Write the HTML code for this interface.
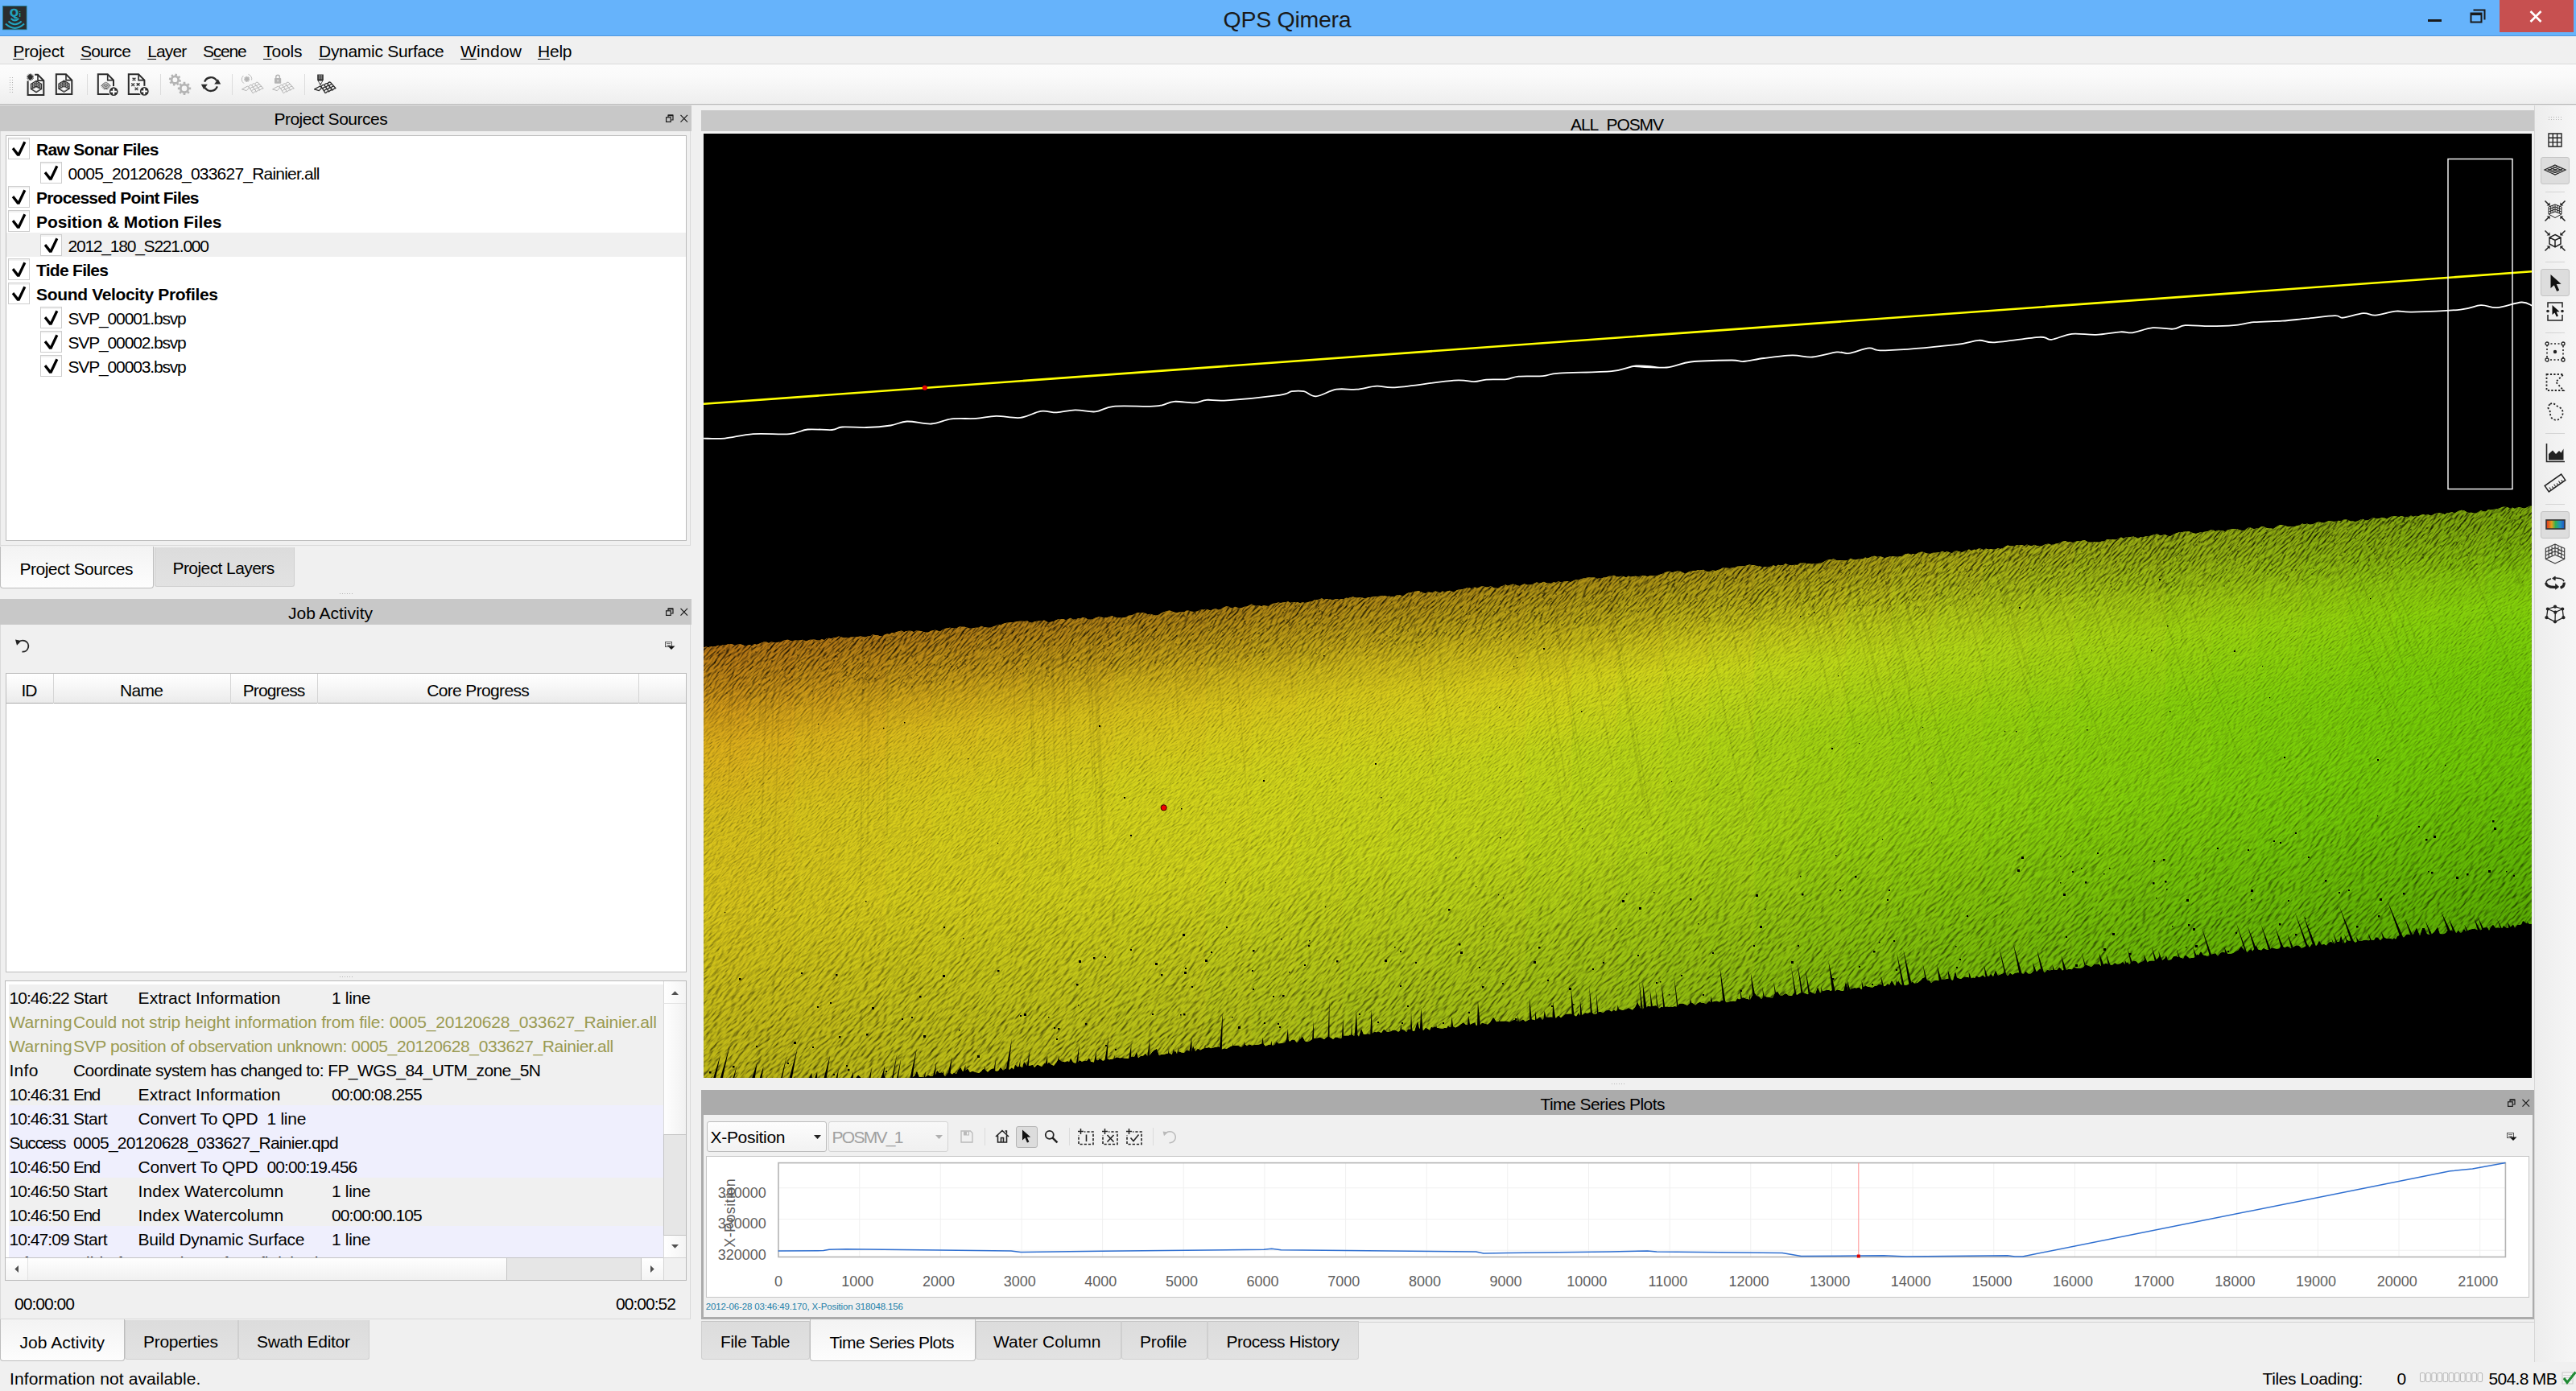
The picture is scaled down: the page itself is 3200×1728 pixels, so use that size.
<!DOCTYPE html>
<html><head><meta charset="utf-8"><title>QPS Qimera</title>
<style>
html,body{margin:0;padding:0;}
body{width:3200px;height:1728px;overflow:hidden;background:#f0f0f0;position:relative;font-family:"Liberation Sans",sans-serif;color:#000;}
.t{position:absolute;white-space:nowrap;}
.r{position:absolute;box-sizing:border-box;}
svg{position:absolute;overflow:visible;}
u{text-decoration:underline;text-decoration-thickness:1.2px;text-underline-offset:2.2px;}
</style></head><body>
<div class="r" style="left:0px;top:0px;width:3200px;height:45px;background:#66b3fb;"></div>
<svg style="left:2.7px;top:6.8px" width="30.5" height="30.2" viewBox="0 0 30.5 30.2">
<rect x="0.4" y="0.4" width="29.7" height="29.4" fill="#2b2d2e" stroke="#1f7f96" stroke-width="0.8"/>
<text x="9.2" y="13.4" font-family="Liberation Sans, sans-serif" font-size="13.5" font-weight="bold" fill="#22a4c0" stroke="#22a4c0" stroke-width="0.7">Q</text>
<text x="20.6" y="13.6" font-family="Liberation Sans, sans-serif" font-size="9" font-weight="bold" fill="#22a4c0">i</text>
<path d="M10.6 16 Q15.4 20.8 20.3 16" fill="none" stroke="#22a4c0" stroke-width="2"/>
<path d="M7.5 19.5 Q15.6 27 23.7 19.5" fill="none" stroke="#22a4c0" stroke-width="2"/>
<path d="M3.9 22.6 Q15.5 33.4 27.1 22.6" fill="none" stroke="#22a4c0" stroke-width="2"/>
</svg>
<div class="r" style="left:0px;top:44px;width:3200px;height:1px;background:#4f97df;"></div>
<div class="t" style="left:1519.60px;top:10.37px;font-size:28.5px;line-height:28.5px;letter-spacing:-0.271px;color:#1a1a1a;">QPS Qimera</div>
<div class="r" style="left:3016px;top:24px;width:17px;height:3px;background:#1a1a1a;"></div>
<svg style="left:3068px;top:11px" width="20" height="18" viewBox="0 0 20 18">
<path d="M4.5 1.5 H18.5 V13.5" fill="none" stroke="#1a1a1a" stroke-width="2"/>
<rect x="1.5" y="5.5" width="13" height="11" fill="none" stroke="#1a1a1a" stroke-width="2"/>
<rect x="1" y="5" width="14" height="3" fill="#1a1a1a"/>
</svg>
<div class="r" style="left:3105px;top:0px;width:92px;height:40px;background:#c75050;"></div>
<svg style="left:3142px;top:13px" width="16" height="15" viewBox="0 0 16 15">
<path d="M1.5 1 L14.5 14 M14.5 1 L1.5 14" stroke="#fff" stroke-width="2.6" fill="none"/></svg>
<div class="r" style="left:0px;top:45px;width:3200px;height:34px;background:#f0f0f0;"></div>
<div class="r" style="left:0px;top:79px;width:3200px;height:1px;background:#dadada;"></div>
<div class="t" style="left:16.20px;top:53.22px;font-size:21px;line-height:21px;letter-spacing:-0.293px;"><u>P</u>roject</div>
<div class="t" style="left:100.00px;top:53.22px;font-size:21px;line-height:21px;letter-spacing:-0.748px;"><u>S</u>ource</div>
<div class="t" style="left:183.30px;top:53.22px;font-size:21px;line-height:21px;letter-spacing:-0.908px;"><u>L</u>ayer</div>
<div class="t" style="left:252.00px;top:53.22px;font-size:21px;line-height:21px;letter-spacing:-1.237px;">S<u>c</u>ene</div>
<div class="t" style="left:327.00px;top:53.22px;font-size:21px;line-height:21px;letter-spacing:-0.106px;"><u>T</u>ools</div>
<div class="t" style="left:396.00px;top:53.22px;font-size:21px;line-height:21px;letter-spacing:-0.292px;"><u>D</u>ynamic Surface</div>
<div class="t" style="left:572.00px;top:53.22px;font-size:21px;line-height:21px;letter-spacing:0.262px;"><u>W</u>indow</div>
<div class="t" style="left:668.00px;top:53.22px;font-size:21px;line-height:21px;letter-spacing:-0.230px;"><u>H</u>elp</div>
<div class="r" style="left:0px;top:80px;width:3200px;height:49px;background:linear-gradient(#fcfcfc,#fafafa 30%,#eeeeee);"></div>
<div class="r" style="left:0px;top:129px;width:3200px;height:1px;background:#b8b8b8;"></div>
<div class="r" style="left:0px;top:130px;width:3200px;height:1px;background:#e4e4e4;"></div>
<svg style="left:12px;top:96px" width="5" height="20"><rect x="0" y="0" width="1" height="1" fill="#b0b0b0"/><rect x="3" y="0" width="1" height="1" fill="#b0b0b0"/><rect x="0" y="3" width="1" height="1" fill="#b0b0b0"/><rect x="3" y="3" width="1" height="1" fill="#b0b0b0"/><rect x="0" y="6" width="1" height="1" fill="#b0b0b0"/><rect x="3" y="6" width="1" height="1" fill="#b0b0b0"/><rect x="0" y="9" width="1" height="1" fill="#b0b0b0"/><rect x="3" y="9" width="1" height="1" fill="#b0b0b0"/><rect x="0" y="12" width="1" height="1" fill="#b0b0b0"/><rect x="3" y="12" width="1" height="1" fill="#b0b0b0"/><rect x="0" y="15" width="1" height="1" fill="#b0b0b0"/><rect x="3" y="15" width="1" height="1" fill="#b0b0b0"/><rect x="0" y="18" width="1" height="1" fill="#b0b0b0"/><rect x="3" y="18" width="1" height="1" fill="#b0b0b0"/></svg>
<div class="r" style="left:108px;top:92px;width:1px;height:26px;background:#dcdcdc;"></div>
<div class="r" style="left:198.5px;top:92px;width:1px;height:26px;background:#dcdcdc;"></div>
<div class="r" style="left:288px;top:92px;width:1px;height:26px;background:#dcdcdc;"></div>
<div class="r" style="left:378px;top:92px;width:1px;height:26px;background:#dcdcdc;"></div>
<svg style="left:0;top:80px" width="430" height="50" viewBox="0 80 430 50" fill="none"><path d="M43.1 92.8 H47.0 L54.3 100.1 V118 H34.6 V100.5" stroke="#2b2b2b" stroke-width="2"/><path d="M47.0 92.8 V100.1 H54.3" stroke="#2b2b2b" stroke-width="1.6"/><path d="M33.30 95.80 L41.90 95.80M33.63 94.15 L41.57 97.45M34.56 92.76 L40.64 98.84M35.95 91.83 L39.25 99.77M37.60 91.50 L37.60 100.10M39.25 91.83 L35.95 99.77M40.64 92.76 L34.56 98.84M41.57 94.15 L33.63 97.45" stroke="#2b2b2b" stroke-width="1.0"/><circle cx="37.6" cy="95.8" r="2.6" fill="#2b2b2b"/><path d="M45 100.6 L38.4 104.39999999999999 V110.6 L45 107.1 Z M45 100.6 L51.6 104.39999999999999 V110.6 L45 107.1 Z" stroke="#2b2b2b" stroke-width="1.1"/><path d="M38.4 106.50 L45 102.77 L51.6 106.50M38.4 108.60 L45 104.93 L51.6 108.60M42.80 101.87 V108.27 M47.20 101.87 V108.27M40.60 103.13 V109.43 M49.40 103.13 V109.43" stroke="#2b2b2b" stroke-width="0.9"/><path d="M38.4 110.6 L45 114.8 L51.6 110.6" stroke="#2b2b2b" stroke-width="1.1"/><path d="M39.6 110.89999999999999 L45 108.19999999999999 L50.4 110.89999999999999 L45 113.6 Z" stroke="#2b2b2b" stroke-width="0.6"/><path d="M69.8 92.3 H82.0 L89.3 99.6 V117 H69.8 Z" stroke="#2b2b2b" stroke-width="2"/><path d="M82.0 92.3 V99.6 H89.3" stroke="#2b2b2b" stroke-width="1.6"/><path d="M79.5 100.2 L72.9 104.0 V110.2 L79.5 106.7 Z M79.5 100.2 L86.1 104.0 V110.2 L79.5 106.7 Z" stroke="#2b2b2b" stroke-width="1.1"/><path d="M72.9 106.10 L79.5 102.37 L86.1 106.10M72.9 108.20 L79.5 104.53 L86.1 108.20M77.30 101.47 V107.87 M81.70 101.47 V107.87M75.10 102.73 V109.03 M83.90 102.73 V109.03" stroke="#2b2b2b" stroke-width="0.9"/><path d="M72.9 110.2 L79.5 114.4 L86.1 110.2" stroke="#2b2b2b" stroke-width="1.1"/><path d="M74.10000000000001 110.5 L79.5 107.8 L84.89999999999999 110.5 L79.5 113.2 Z" stroke="#2b2b2b" stroke-width="0.6"/><path d="M121.8 92.3 H133.7 L141 99.6 V117 H121.8 Z" stroke="#2b2b2b" stroke-width="2"/><path d="M133.7 92.3 V99.6 H141" stroke="#2b2b2b" stroke-width="1.6"/><path d="M125.8 107.2 Q131.5 101.2 137.2 107.2 M126.6 108.4 Q131.5 103.6 136.4 108.4 M127.6 109.4 Q131.5 105.8 135.4 109.4 M128.6 110.3 Q131.5 107.8 134.4 110.3 M129.6 111 Q131.5 109.6 133.4 111" stroke="#444" stroke-width="0.9"/><path d="M125.6 107 Q128 103 131.5 102.2 Q135 103 137.4 107" stroke="#555" stroke-width="0.8"/><circle cx="141.2" cy="113.7" r="6" fill="#2b2b2b" stroke="#f6f6f6" stroke-width="1.2"/><path d="M141.2 109.9 V117.5 M137.39999999999998 113.7 H145.0" stroke="#fff" stroke-width="2"/><path d="M159.8 92.3 H172.1 L179.4 99.6 V117 H159.8 Z" stroke="#2b2b2b" stroke-width="2"/><path d="M172.1 92.3 V99.6 H179.4" stroke="#2b2b2b" stroke-width="1.6"/><path d="M164.6 96.7 L168.4 100.10000000000001 M168.4 96.7 L164.6 100.10000000000001M163.29999999999998 103.6 L167.1 107.0 M167.1 103.6 L163.29999999999998 107.0M169.7 103.2 L173.5 106.60000000000001 M173.5 103.2 L169.7 106.60000000000001M167.6 108.7 L171.4 112.10000000000001 M171.4 108.7 L167.6 112.10000000000001" stroke="#2b2b2b" stroke-width="1.4"/><circle cx="179.3" cy="113.4" r="6" fill="#2b2b2b" stroke="#f6f6f6" stroke-width="1.2"/><path d="M179.3 109.60000000000001 V117.2 M175.5 113.4 H183.10000000000002" stroke="#fff" stroke-width="2"/><path d="M223.02 99.03 L224.99 99.50 L224.51 101.88 L222.51 101.54 L221.49 103.06 L222.55 104.78 L220.54 106.12 L219.36 104.47 L217.57 104.82 L217.10 106.79 L214.72 106.31 L215.06 104.31 L213.54 103.29 L211.82 104.35 L210.48 102.34 L212.13 101.16 L211.78 99.37 L209.81 98.90 L210.29 96.52 L212.29 96.86 L213.31 95.34 L212.25 93.62 L214.26 92.28 L215.44 93.93 L217.23 93.58 L217.70 91.61 L220.08 92.09 L219.74 94.09 L221.26 95.11 L222.98 94.05 L224.32 96.06 L222.67 97.24Z M220.3 99.2 A2.9 2.9 0 1 0 214.5 99.2 A2.9 2.9 0 1 0 220.3 99.2Z" fill="#b4b4b4" fill-rule="evenodd"/><path d="M234.98 108.50 L237.19 108.58 L237.19 111.22 L234.98 111.30 L234.22 113.14 L235.73 114.76 L233.86 116.63 L232.24 115.12 L230.40 115.88 L230.32 118.09 L227.68 118.09 L227.60 115.88 L225.76 115.12 L224.14 116.63 L222.27 114.76 L223.78 113.14 L223.02 111.30 L220.81 111.22 L220.81 108.58 L223.02 108.50 L223.78 106.66 L222.27 105.04 L224.14 103.17 L225.76 104.68 L227.60 103.92 L227.68 101.71 L230.32 101.71 L230.40 103.92 L232.24 104.68 L233.86 103.17 L235.73 105.04 L234.22 106.66Z M232.3 109.9 A3.3 3.3 0 1 0 225.7 109.9 A3.3 3.3 0 1 0 232.3 109.9Z" fill="#b4b4b4" fill-rule="evenodd"/><path d="M254.11 101.73 A8.4 8.4 0 0 1 269.27 100.40" stroke="#2b2b2b" stroke-width="2.3"/><path d="M269.89 107.47 A8.4 8.4 0 0 1 254.73 108.80" stroke="#2b2b2b" stroke-width="2.3"/><path d="M266.2 104.4 H274.2 L270.8 98.2 Z" fill="#2b2b2b"/><path d="M257.8 104.8 H249.8 L253.2 111 Z" fill="#2b2b2b"/><path d="M308.8 107.3 Q311.1 104.5 312.7 105.7 Q314.9 102.8 316.6 104.0 Q318.9 101.2 320.5 102.4M310.6 110.2 Q312.9 107.3 314.6 108.4 Q317.0 105.6 318.7 106.7 Q321.0 103.8 322.7 104.9M312.4 113.0 Q314.8 110.1 316.6 111.2 Q319.0 108.2 320.8 109.3 Q323.2 106.4 325.0 107.5M314.2 115.9 Q316.7 112.9 318.5 113.9 Q321.0 111.0 322.9 112.0 Q325.3 109.0 327.2 110.0 M308.8 107.3 L314.2 115.9 M312.7 105.7 L318.5 113.9 M316.6 104.0 L322.9 112.0 M320.5 102.4 L327.2 110.0 M300.5 110.9 L307.6 107.0 L309.6 109.0 L306.2 112.6 Z" stroke="#b4b4b4" stroke-width="1.0" stroke-linejoin="round"/><path d="M303.10 98.30 L310.30 98.30M303.58 96.50 L309.82 100.10M304.90 95.18 L308.50 101.42M306.70 94.70 L306.70 101.90M308.50 95.18 L304.90 101.42M309.82 96.50 L303.58 100.10" stroke="#b4b4b4" stroke-width="1.1"/><path d="M303 103.6 A6 6 0 0 1 302.4 94 M308.5 92.4 A6 6 0 0 1 312.6 99.5" stroke="#b4b4b4" stroke-width="0.9"/><path d="M346.9 107.3 Q349.2 104.5 350.8 105.7 Q353.1 102.8 354.7 104.0 Q357.0 101.2 358.6 102.4M348.7 110.2 Q351.0 107.3 352.7 108.4 Q355.1 105.6 356.8 106.7 Q359.1 103.8 360.8 104.9M350.5 113.0 Q352.9 110.1 354.7 111.2 Q357.1 108.2 358.9 109.3 Q361.3 106.4 363.1 107.5M352.3 115.9 Q354.8 112.9 356.6 113.9 Q359.1 111.0 361.0 112.0 Q363.4 109.0 365.3 110.0 M346.9 107.3 L352.3 115.9 M350.8 105.7 L356.6 113.9 M354.7 104.0 L361.0 112.0 M358.6 102.4 L365.3 110.0 M338.6 110.9 L345.7 107.0 L347.7 109.0 L344.3 112.6 Z" stroke="#b4b4b4" stroke-width="1.0" stroke-linejoin="round"/><rect x="341" y="97" width="8.2" height="6.8" rx="0.8" fill="#b4b4b4"/><path d="M342.8 97 V95.6 A2.3 2.3 0 0 1 347.4 95.6 V97" stroke="#b4b4b4" stroke-width="1.4"/><rect x="344.5" y="99" width="1.2" height="2.4" fill="#e8e8e8"/><path d="M398.9 107.3 Q401.2 104.5 402.8 105.7 Q405.1 102.8 406.7 104.0 Q409.0 101.2 410.6 102.4M400.7 110.2 Q403.0 107.3 404.7 108.4 Q407.1 105.6 408.8 106.7 Q411.1 103.8 412.8 104.9M402.5 113.0 Q404.9 110.1 406.7 111.2 Q409.1 108.2 410.9 109.3 Q413.3 106.4 415.1 107.5M404.3 115.9 Q406.8 112.9 408.6 113.9 Q411.1 111.0 413.0 112.0 Q415.4 109.0 417.3 110.0 M398.9 107.3 L404.3 115.9 M402.8 105.7 L408.6 113.9 M406.7 104.0 L413.0 112.0 M410.6 102.4 L417.3 110.0 M390.6 110.9 L397.7 107.0 L399.7 109.0 L396.3 112.6 Z" stroke="#2b2b2b" stroke-width="1.3" stroke-linejoin="round"/><path d="M394.2 92.6 H401.8 V99.2 L398 106.6 L394.2 99.2 Z" fill="#2b2b2b"/><path d="M396.3 93 V98.5 M398 93 V98.5 M399.7 93 V98.5" stroke="#bbb" stroke-width="0.7"/><path d="M395.6 100.6 L398 105 L400.4 100.6 Z" fill="#f4f4f4"/><path d="M397.2 103.6 L398 105.4 L398.8 103.6 Z" fill="#2b2b2b"/></svg>
<div class="r" style="left:0px;top:131px;width:858.7px;height:31.6px;background:#c8c8c8;"></div>
<div class="t" style="left:340.40px;top:137.22px;font-size:21px;line-height:21px;letter-spacing:-0.495px;">Project Sources</div>
<svg style="left:826.7px;top:142.0px" width="28" height="11" viewBox="0 0 28 11">
<path d="M3 3.5 V1 H9 V7 H6.5" fill="none" stroke="#1a1a1a" stroke-width="1.2"/>
<rect x="0.6" y="3.8" width="5.6" height="5.6" fill="none" stroke="#1a1a1a" stroke-width="1.2"/>
<path d="M3 1.4 H9" stroke="#1a1a1a" stroke-width="1.8"/>
<path d="M18.5 0.8 L27 9.6 M27 0.8 L18.5 9.6" stroke="#1a1a1a" stroke-width="1.2" fill="none"/>
</svg>
<div class="r" style="left:0px;top:163px;width:858px;height:515px;border:1px solid #d9d9d9;border-top:none;"></div>
<div class="r" style="left:7px;top:168px;width:846px;height:504px;background:#fff;border:1px solid #bcbcbc;"></div>
<div class="r" style="left:8px;top:289px;width:844px;height:30px;background:#f0f0f0;"></div>
<svg style="left:10px;top:170.5px" width="27" height="27" viewBox="0 0 27 27">
<rect x="0.5" y="0.5" width="26" height="26" fill="#fff" stroke="#cdcdcd"/>
<rect x="1" y="1" width="25" height="2" fill="#f1f1f1"/>
<path d="M4.78 14.34 L7.2 11.92 L12.58 18.87 L19.37 4.38 L22.29 6.04 L14.34 22.79 L11.32 22.79 Z" fill="#000"/>
</svg>
<div class="t" style="left:45.00px;top:174.72px;font-size:21px;line-height:21px;letter-spacing:-0.694px;font-weight:bold;">Raw Sonar Files</div>
<svg style="left:49.8px;top:200.5px" width="27" height="27" viewBox="0 0 27 27">
<rect x="0.5" y="0.5" width="26" height="26" fill="#fff" stroke="#cdcdcd"/>
<rect x="1" y="1" width="25" height="2" fill="#f1f1f1"/>
<path d="M4.78 14.34 L7.2 11.92 L12.58 18.87 L19.37 4.38 L22.29 6.04 L14.34 22.79 L11.32 22.79 Z" fill="#000"/>
</svg>
<div class="t" style="left:84.50px;top:204.72px;font-size:21px;line-height:21px;letter-spacing:-0.790px;">0005_20120628_033627_Rainier.all</div>
<svg style="left:10px;top:230.5px" width="27" height="27" viewBox="0 0 27 27">
<rect x="0.5" y="0.5" width="26" height="26" fill="#fff" stroke="#cdcdcd"/>
<rect x="1" y="1" width="25" height="2" fill="#f1f1f1"/>
<path d="M4.78 14.34 L7.2 11.92 L12.58 18.87 L19.37 4.38 L22.29 6.04 L14.34 22.79 L11.32 22.79 Z" fill="#000"/>
</svg>
<div class="t" style="left:45.00px;top:234.72px;font-size:21px;line-height:21px;letter-spacing:-0.787px;font-weight:bold;">Processed Point Files</div>
<svg style="left:10px;top:260.5px" width="27" height="27" viewBox="0 0 27 27">
<rect x="0.5" y="0.5" width="26" height="26" fill="#fff" stroke="#cdcdcd"/>
<rect x="1" y="1" width="25" height="2" fill="#f1f1f1"/>
<path d="M4.78 14.34 L7.2 11.92 L12.58 18.87 L19.37 4.38 L22.29 6.04 L14.34 22.79 L11.32 22.79 Z" fill="#000"/>
</svg>
<div class="t" style="left:45.00px;top:264.72px;font-size:21px;line-height:21px;letter-spacing:-0.076px;font-weight:bold;">Position &amp; Motion Files</div>
<svg style="left:49.8px;top:290.5px" width="27" height="27" viewBox="0 0 27 27">
<rect x="0.5" y="0.5" width="26" height="26" fill="#fff" stroke="#cdcdcd"/>
<rect x="1" y="1" width="25" height="2" fill="#f1f1f1"/>
<path d="M4.78 14.34 L7.2 11.92 L12.58 18.87 L19.37 4.38 L22.29 6.04 L14.34 22.79 L11.32 22.79 Z" fill="#000"/>
</svg>
<div class="t" style="left:84.50px;top:294.72px;font-size:21px;line-height:21px;letter-spacing:-1.221px;">2012_180_S221.000</div>
<svg style="left:10px;top:320.5px" width="27" height="27" viewBox="0 0 27 27">
<rect x="0.5" y="0.5" width="26" height="26" fill="#fff" stroke="#cdcdcd"/>
<rect x="1" y="1" width="25" height="2" fill="#f1f1f1"/>
<path d="M4.78 14.34 L7.2 11.92 L12.58 18.87 L19.37 4.38 L22.29 6.04 L14.34 22.79 L11.32 22.79 Z" fill="#000"/>
</svg>
<div class="t" style="left:45.00px;top:324.72px;font-size:21px;line-height:21px;letter-spacing:-0.720px;font-weight:bold;">Tide Files</div>
<svg style="left:10px;top:350.5px" width="27" height="27" viewBox="0 0 27 27">
<rect x="0.5" y="0.5" width="26" height="26" fill="#fff" stroke="#cdcdcd"/>
<rect x="1" y="1" width="25" height="2" fill="#f1f1f1"/>
<path d="M4.78 14.34 L7.2 11.92 L12.58 18.87 L19.37 4.38 L22.29 6.04 L14.34 22.79 L11.32 22.79 Z" fill="#000"/>
</svg>
<div class="t" style="left:45.00px;top:354.72px;font-size:21px;line-height:21px;letter-spacing:-0.336px;font-weight:bold;">Sound Velocity Profiles</div>
<svg style="left:49.8px;top:380.5px" width="27" height="27" viewBox="0 0 27 27">
<rect x="0.5" y="0.5" width="26" height="26" fill="#fff" stroke="#cdcdcd"/>
<rect x="1" y="1" width="25" height="2" fill="#f1f1f1"/>
<path d="M4.78 14.34 L7.2 11.92 L12.58 18.87 L19.37 4.38 L22.29 6.04 L14.34 22.79 L11.32 22.79 Z" fill="#000"/>
</svg>
<div class="t" style="left:84.50px;top:384.72px;font-size:21px;line-height:21px;letter-spacing:-1.153px;">SVP_00001.bsvp</div>
<svg style="left:49.8px;top:410.5px" width="27" height="27" viewBox="0 0 27 27">
<rect x="0.5" y="0.5" width="26" height="26" fill="#fff" stroke="#cdcdcd"/>
<rect x="1" y="1" width="25" height="2" fill="#f1f1f1"/>
<path d="M4.78 14.34 L7.2 11.92 L12.58 18.87 L19.37 4.38 L22.29 6.04 L14.34 22.79 L11.32 22.79 Z" fill="#000"/>
</svg>
<div class="t" style="left:84.50px;top:414.72px;font-size:21px;line-height:21px;letter-spacing:-1.153px;">SVP_00002.bsvp</div>
<svg style="left:49.8px;top:440.5px" width="27" height="27" viewBox="0 0 27 27">
<rect x="0.5" y="0.5" width="26" height="26" fill="#fff" stroke="#cdcdcd"/>
<rect x="1" y="1" width="25" height="2" fill="#f1f1f1"/>
<path d="M4.78 14.34 L7.2 11.92 L12.58 18.87 L19.37 4.38 L22.29 6.04 L14.34 22.79 L11.32 22.79 Z" fill="#000"/>
</svg>
<div class="t" style="left:84.50px;top:444.72px;font-size:21px;line-height:21px;letter-spacing:-1.153px;">SVP_00003.bsvp</div>
<div class="r" style="left:191.5px;top:680px;width:174px;height:48.5px;background:linear-gradient(#dcdcdc,#e2e2e2);border:1px solid #cfcfcf;border-top:none;border-radius:0 0 3px 3px;"></div>
<div class="r" style="left:0px;top:678.5px;width:191.3px;height:52px;background:linear-gradient(#f3f3f3,#fdfdfd);border:1px solid #bdbdbd;border-top:none;border-radius:0 0 4px 4px;"></div>
<div class="t" style="left:24.50px;top:695.97px;font-size:21px;line-height:21px;letter-spacing:-0.517px;">Project Sources</div>
<div class="t" style="left:214.50px;top:694.72px;font-size:21px;line-height:21px;letter-spacing:-0.575px;">Project Layers</div>
<svg style="left:422px;top:737px" width="17" height="1"><rect x="0" y="0" width="1" height="1" fill="#b5b5b5"/><rect x="3" y="0" width="1" height="1" fill="#b5b5b5"/><rect x="6" y="0" width="1" height="1" fill="#b5b5b5"/><rect x="9" y="0" width="1" height="1" fill="#b5b5b5"/><rect x="12" y="0" width="1" height="1" fill="#b5b5b5"/><rect x="15" y="0" width="1" height="1" fill="#b5b5b5"/></svg>
<div class="r" style="left:0px;top:744px;width:858.7px;height:31.6px;background:#c8c8c8;"></div>
<div class="t" style="left:358.00px;top:750.97px;font-size:21px;line-height:21px;letter-spacing:-0.004px;">Job Activity</div>
<svg style="left:826.7px;top:754.9px" width="28" height="11" viewBox="0 0 28 11">
<path d="M3 3.5 V1 H9 V7 H6.5" fill="none" stroke="#1a1a1a" stroke-width="1.2"/>
<rect x="0.6" y="3.8" width="5.6" height="5.6" fill="none" stroke="#1a1a1a" stroke-width="1.2"/>
<path d="M3 1.4 H9" stroke="#1a1a1a" stroke-width="1.8"/>
<path d="M18.5 0.8 L27 9.6 M27 0.8 L18.5 9.6" stroke="#1a1a1a" stroke-width="1.2" fill="none"/>
</svg>
<div class="r" style="left:0px;top:775.5px;width:858px;height:863.5px;border:1px solid #d9d9d9;border-top:none;"></div>
<svg style="left:19px;top:793px" width="19" height="18" viewBox="0 0 19 18">
<path d="M3.2 6.2 A7 7 0 1 1 8.5 16.6" fill="none" stroke="#222" stroke-width="1.8"/>
<path d="M0 1.6 L7.2 3 L2 8.8 Z" fill="#222"/></svg>
<svg style="left:826px;top:797px" width="13" height="10" viewBox="0 0 13 10">
<rect x="0.5" y="0.5" width="8" height="6" fill="#f0f0f0" stroke="#555" stroke-width="1"/>
<path d="M2 2.5 H7 M2 4.5 H7" stroke="#555" stroke-width="0.8"/>
<path d="M3.5 5.5 H12.5 L8 10 Z" fill="#111"/></svg>
<div class="r" style="left:6.5px;top:836px;width:846px;height:372px;background:#fff;border:1px solid #bcbcbc;"></div>
<div class="r" style="left:7.5px;top:837px;width:844px;height:37.2px;background:linear-gradient(#ffffff,#f7f7f7 45%,#ebebeb);border-bottom:1px solid #ababab;"></div>
<div class="r" style="left:65.5px;top:837px;width:1px;height:36.5px;background:#d5d5d5;"></div>
<div class="r" style="left:286.25px;top:837px;width:1px;height:36.5px;background:#d5d5d5;"></div>
<div class="r" style="left:394.25px;top:837px;width:1px;height:36.5px;background:#d5d5d5;"></div>
<div class="r" style="left:792.6px;top:837px;width:1px;height:36.5px;background:#d5d5d5;"></div>
<div class="t" style="left:26.50px;top:846.72px;font-size:21px;line-height:21px;letter-spacing:-1.000px;">ID</div>
<div class="t" style="left:149.00px;top:846.72px;font-size:21px;line-height:21px;letter-spacing:-0.673px;">Name</div>
<div class="t" style="left:301.75px;top:846.72px;font-size:21px;line-height:21px;letter-spacing:-0.933px;">Progress</div>
<div class="t" style="left:530.20px;top:846.72px;font-size:21px;line-height:21px;letter-spacing:-0.649px;">Core Progress</div>
<svg style="left:422px;top:1213px" width="17" height="1"><rect x="0" y="0" width="1" height="1" fill="#b5b5b5"/><rect x="3" y="0" width="1" height="1" fill="#b5b5b5"/><rect x="6" y="0" width="1" height="1" fill="#b5b5b5"/><rect x="9" y="0" width="1" height="1" fill="#b5b5b5"/><rect x="12" y="0" width="1" height="1" fill="#b5b5b5"/><rect x="15" y="0" width="1" height="1" fill="#b5b5b5"/></svg>
<div class="r" style="left:6px;top:1218px;width:847.3px;height:373.4px;background:#fff;border:1px solid #b9b9b9;"></div>
<div class="r" style="left:7px;top:1219px;width:817.5px;height:343.5px;overflow:hidden;">
<div class="r" style="left:4.4px;top:4px;width:814px;height:30px;background:#f0f0f0"></div>
<div class="r" style="left:4.4px;top:34px;width:814px;height:30px;background:#f0f0f0"></div>
<div class="r" style="left:4.4px;top:64px;width:814px;height:30px;background:#f0f0f0"></div>
<div class="r" style="left:4.4px;top:94px;width:814px;height:30px;background:#f0f0f0"></div>
<div class="r" style="left:4.4px;top:124px;width:814px;height:30px;background:#f0f0f0"></div>
<div class="r" style="left:4.4px;top:154px;width:814px;height:30px;background:#efeffd"></div>
<div class="r" style="left:4.4px;top:184px;width:814px;height:30px;background:#efeffd"></div>
<div class="r" style="left:4.4px;top:214px;width:814px;height:30px;background:#efeffd"></div>
<div class="r" style="left:4.4px;top:244px;width:814px;height:30px;background:#f0f0f0"></div>
<div class="r" style="left:4.4px;top:274px;width:814px;height:30px;background:#f0f0f0"></div>
<div class="r" style="left:4.4px;top:304px;width:814px;height:30px;background:#efeffd"></div>
<div class="r" style="left:4.4px;top:334px;width:814px;height:30px;background:#efeffd"></div>
</div>
<div class="t" style="left:11.40px;top:1228.52px;font-size:21px;line-height:21px;letter-spacing:-0.935px;">10:46:22</div>
<div class="t" style="left:91.00px;top:1228.52px;font-size:21px;line-height:21px;letter-spacing:-0.437px;">Start</div>
<div class="t" style="left:171.60px;top:1228.52px;font-size:21px;line-height:21px;letter-spacing:0.037px;">Extract Information</div>
<div class="t" style="left:412.00px;top:1228.52px;font-size:21px;line-height:21px;letter-spacing:-0.341px;">1 line</div>
<div class="t" style="left:11.40px;top:1258.52px;font-size:21px;line-height:21px;letter-spacing:0.130px;color:#9a9a52;">Warning</div>
<div class="t" style="left:91.00px;top:1258.52px;font-size:21px;line-height:21px;letter-spacing:-0.167px;color:#9a9a52;">Could not strip height information from file: 0005_20120628_033627_Rainier.all</div>
<div class="t" style="left:11.40px;top:1288.52px;font-size:21px;line-height:21px;letter-spacing:0.130px;color:#9a9a52;">Warning</div>
<div class="t" style="left:91.00px;top:1288.52px;font-size:21px;line-height:21px;letter-spacing:-0.373px;color:#9a9a52;">SVP position of observation unknown: 0005_20120628_033627_Rainier.all</div>
<div class="t" style="left:11.40px;top:1318.52px;font-size:21px;line-height:21px;letter-spacing:0.358px;">Info</div>
<div class="t" style="left:91.00px;top:1318.52px;font-size:21px;line-height:21px;letter-spacing:-0.589px;">Coordinate system has changed to: FP_WGS_84_UTM_zone_5N</div>
<div class="t" style="left:11.40px;top:1348.52px;font-size:21px;line-height:21px;letter-spacing:-0.935px;">10:46:31</div>
<div class="t" style="left:91.00px;top:1348.52px;font-size:21px;line-height:21px;letter-spacing:-1.533px;">End</div>
<div class="t" style="left:171.60px;top:1348.52px;font-size:21px;line-height:21px;letter-spacing:0.037px;">Extract Information</div>
<div class="t" style="left:412.00px;top:1348.52px;font-size:21px;line-height:21px;letter-spacing:-0.902px;">00:00:08.255</div>
<div class="t" style="left:11.40px;top:1378.52px;font-size:21px;line-height:21px;letter-spacing:-0.935px;">10:46:31</div>
<div class="t" style="left:91.00px;top:1378.52px;font-size:21px;line-height:21px;letter-spacing:-0.437px;">Start</div>
<div class="t" style="left:171.60px;top:1378.52px;font-size:21px;line-height:21px;letter-spacing:-0.255px;">Convert To QPD</div>
<div class="t" style="left:331.40px;top:1378.52px;font-size:21px;line-height:21px;letter-spacing:-0.241px;">1 line</div>
<div class="t" style="left:11.40px;top:1408.52px;font-size:21px;line-height:21px;letter-spacing:-1.394px;">Success</div>
<div class="t" style="left:91.00px;top:1408.52px;font-size:21px;line-height:21px;letter-spacing:-0.707px;">0005_20120628_033627_Rainier.qpd</div>
<div class="t" style="left:11.40px;top:1438.52px;font-size:21px;line-height:21px;letter-spacing:-0.935px;">10:46:50</div>
<div class="t" style="left:91.00px;top:1438.52px;font-size:21px;line-height:21px;letter-spacing:-1.533px;">End</div>
<div class="t" style="left:171.60px;top:1438.52px;font-size:21px;line-height:21px;letter-spacing:-0.255px;">Convert To QPD</div>
<div class="t" style="left:331.40px;top:1438.52px;font-size:21px;line-height:21px;letter-spacing:-0.893px;">00:00:19.456</div>
<div class="t" style="left:11.40px;top:1468.52px;font-size:21px;line-height:21px;letter-spacing:-0.935px;">10:46:50</div>
<div class="t" style="left:91.00px;top:1468.52px;font-size:21px;line-height:21px;letter-spacing:-0.437px;">Start</div>
<div class="t" style="left:171.60px;top:1468.52px;font-size:21px;line-height:21px;letter-spacing:0.035px;">Index Watercolumn</div>
<div class="t" style="left:412.00px;top:1468.52px;font-size:21px;line-height:21px;letter-spacing:-0.341px;">1 line</div>
<div class="t" style="left:11.40px;top:1498.52px;font-size:21px;line-height:21px;letter-spacing:-0.935px;">10:46:50</div>
<div class="t" style="left:91.00px;top:1498.52px;font-size:21px;line-height:21px;letter-spacing:-1.533px;">End</div>
<div class="t" style="left:171.60px;top:1498.52px;font-size:21px;line-height:21px;letter-spacing:0.035px;">Index Watercolumn</div>
<div class="t" style="left:412.00px;top:1498.52px;font-size:21px;line-height:21px;letter-spacing:-0.902px;">00:00:00.105</div>
<div class="t" style="left:11.40px;top:1528.52px;font-size:21px;line-height:21px;letter-spacing:-0.935px;">10:47:09</div>
<div class="t" style="left:91.00px;top:1528.52px;font-size:21px;line-height:21px;letter-spacing:-0.437px;">Start</div>
<div class="t" style="left:171.60px;top:1528.52px;font-size:21px;line-height:21px;letter-spacing:-0.276px;">Build Dynamic Surface</div>
<div class="t" style="left:412.00px;top:1528.52px;font-size:21px;line-height:21px;letter-spacing:-0.341px;">1 line</div>
<div class="r" style="left:7px;top:1553px;width:817px;height:9.5px;overflow:hidden;">
<div class="t" style="left:4.4px;top:4.7px;font-size:21px;line-height:21px;">Info &nbsp; &nbsp; &nbsp;Build of Dynamic Surface finished</div>
</div>
<div class="r" style="left:824.3px;top:1219px;width:28px;height:343.5px;background:linear-gradient(to right,#fefefe,#f1f1f1);border-left:1px solid #d9d9d9;"></div>
<div class="r" style="left:824.3px;top:1219px;width:28px;height:28px;background:linear-gradient(to right,#ffffff,#f4f4f4);border-left:1px solid #d9d9d9;border-bottom:1px solid #e2e2e2;"></div>
<div class="r" style="left:824.3px;top:1408.5px;width:28px;height:126px;background:#e6e6e6;border:1px solid #c4c4c4;border-right:none;"></div>
<div class="r" style="left:824.3px;top:1534.5px;width:28px;height:28px;background:linear-gradient(to right,#ffffff,#f4f4f4);border-left:1px solid #d9d9d9;"></div>
<svg style="left:833.5px;top:1230.5px" width="9" height="5"><path d="M0 5 L4.5 0.3 L9 5 Z" fill="#505050"/></svg>
<svg style="left:833.5px;top:1546px" width="9" height="5"><path d="M0 0 L4.5 4.7 L9 0 Z" fill="#505050"/></svg>
<div class="r" style="left:7px;top:1562.2px;width:817.5px;height:28px;background:linear-gradient(#fefefe,#f1f1f1);border-top:1px solid #c4c4c4;"></div>
<div class="r" style="left:628.5px;top:1562.2px;width:168px;height:28px;background:#e6e6e6;border:1px solid #c4c4c4;border-bottom:none;"></div>
<div class="r" style="left:796.5px;top:1562.2px;width:28px;height:28px;background:linear-gradient(#ffffff,#f4f4f4);border-top:1px solid #c4c4c4;border-right:1px solid #d4d4d4;"></div>
<div class="r" style="left:7px;top:1562.2px;width:27.5px;height:28px;background:linear-gradient(#ffffff,#f4f4f4);border-top:1px solid #c4c4c4;border-right:1px solid #e2e2e2;"></div>
<svg style="left:17.5px;top:1571.5px" width="5" height="9"><path d="M5 0 L0.3 4.5 L5 9 Z" fill="#505050"/></svg>
<svg style="left:808px;top:1571.5px" width="5" height="9"><path d="M0 0 L4.7 4.5 L0 9 Z" fill="#505050"/></svg>
<div class="r" style="left:824.3px;top:1562.2px;width:28px;height:28px;background:#f0f0f0;border-top:1px solid #d4d4d4;border-left:1px solid #d4d4d4;"></div>
<div class="t" style="left:18.00px;top:1609.22px;font-size:21px;line-height:21px;letter-spacing:-0.964px;">00:00:00</div>
<div class="t" style="left:765.00px;top:1609.22px;font-size:21px;line-height:21px;letter-spacing:-0.964px;">00:00:52</div>
<div class="r" style="left:155px;top:1640px;width:140.5px;height:49px;background:linear-gradient(#dcdcdc,#e2e2e2);border:1px solid #cfcfcf;border-top:none;border-radius:0 0 3px 3px;"></div>
<div class="r" style="left:295.5px;top:1640px;width:163px;height:49px;background:linear-gradient(#dcdcdc,#e2e2e2);border:1px solid #cfcfcf;border-top:none;border-radius:0 0 3px 3px;"></div>
<div class="r" style="left:0px;top:1639px;width:155px;height:52px;background:linear-gradient(#f3f3f3,#fdfdfd);border:1px solid #bdbdbd;border-top:none;border-radius:0 0 4px 4px;"></div>
<div class="t" style="left:24.50px;top:1656.72px;font-size:21px;line-height:21px;letter-spacing:0.042px;">Job Activity</div>
<div class="t" style="left:178.00px;top:1655.72px;font-size:21px;line-height:21px;letter-spacing:-0.302px;">Properties</div>
<div class="t" style="left:319.00px;top:1655.72px;font-size:21px;line-height:21px;letter-spacing:-0.278px;">Swath Editor</div>
<div class="t" style="left:12.00px;top:1702.22px;font-size:21px;line-height:21px;letter-spacing:0.110px;">Information not available.</div>
<div class="r" style="left:871px;top:137px;width:2277px;height:26px;background:#c8c8c8;overflow:hidden;"></div>
<div class="t" style="left:1951.00px;top:143.72px;font-size:21px;line-height:21px;letter-spacing:-1.112px;">ALL_POSMV</div>
<div class="r" style="left:871px;top:163px;width:2277px;height:3px;background:#f4f4f4;"></div>
<svg style="left:874px;top:165.5px;overflow:hidden;background:#000" width="2271" height="1173" viewBox="0 0 2271 1173"><defs><linearGradient id="s0" gradientUnits="userSpaceOnUse" x1="0" y1="637.0" x2="0" y2="1220.0"><stop offset="0.000" stop-color="#b47414"/><stop offset="0.036" stop-color="#bb7f16"/><stop offset="0.073" stop-color="#c28917"/><stop offset="0.109" stop-color="#ca9318"/><stop offset="0.145" stop-color="#d19d1a"/><stop offset="0.200" stop-color="#cfa41a"/><stop offset="0.273" stop-color="#ceab1a"/><stop offset="0.364" stop-color="#cbb51a"/><stop offset="0.455" stop-color="#cbb71a"/><stop offset="0.564" stop-color="#cbba1a"/><stop offset="0.682" stop-color="#c2b518"/><stop offset="0.800" stop-color="#b9b017"/><stop offset="0.909" stop-color="#b1ab16"/><stop offset="1.000" stop-color="#b1ab16"/></linearGradient><linearGradient id="s1" gradientUnits="userSpaceOnUse" x1="0" y1="632.6" x2="0" y2="1215.6"><stop offset="0.000" stop-color="#b37615"/><stop offset="0.036" stop-color="#ba8016"/><stop offset="0.073" stop-color="#c28b17"/><stop offset="0.109" stop-color="#c99518"/><stop offset="0.145" stop-color="#d0a01a"/><stop offset="0.200" stop-color="#cfa61a"/><stop offset="0.273" stop-color="#cdae1a"/><stop offset="0.364" stop-color="#cbb71a"/><stop offset="0.455" stop-color="#cbb91a"/><stop offset="0.564" stop-color="#cabc1a"/><stop offset="0.682" stop-color="#c2b718"/><stop offset="0.800" stop-color="#b9b117"/><stop offset="0.909" stop-color="#b1ac16"/><stop offset="1.000" stop-color="#b1ac16"/></linearGradient><linearGradient id="s2" gradientUnits="userSpaceOnUse" x1="0" y1="628.2" x2="0" y2="1211.2"><stop offset="0.000" stop-color="#b37815"/><stop offset="0.036" stop-color="#ba8216"/><stop offset="0.073" stop-color="#c18d17"/><stop offset="0.109" stop-color="#c99718"/><stop offset="0.145" stop-color="#d0a21a"/><stop offset="0.200" stop-color="#cea91a"/><stop offset="0.273" stop-color="#ccb11a"/><stop offset="0.364" stop-color="#cbba1a"/><stop offset="0.455" stop-color="#cabb1a"/><stop offset="0.564" stop-color="#cabe1a"/><stop offset="0.682" stop-color="#c1b818"/><stop offset="0.800" stop-color="#b9b217"/><stop offset="0.909" stop-color="#b0ad16"/><stop offset="1.000" stop-color="#b0ad16"/></linearGradient><linearGradient id="s3" gradientUnits="userSpaceOnUse" x1="0" y1="623.8" x2="0" y2="1206.8"><stop offset="0.000" stop-color="#b27915"/><stop offset="0.036" stop-color="#b98416"/><stop offset="0.073" stop-color="#c18f17"/><stop offset="0.109" stop-color="#c89a18"/><stop offset="0.145" stop-color="#cfa51a"/><stop offset="0.200" stop-color="#ceab1a"/><stop offset="0.273" stop-color="#ccb31a"/><stop offset="0.364" stop-color="#cabc1a"/><stop offset="0.455" stop-color="#cabe1a"/><stop offset="0.564" stop-color="#cac01a"/><stop offset="0.682" stop-color="#c1ba18"/><stop offset="0.800" stop-color="#b8b417"/><stop offset="0.909" stop-color="#b0ae16"/><stop offset="1.000" stop-color="#b0ae16"/></linearGradient><linearGradient id="s4" gradientUnits="userSpaceOnUse" x1="0" y1="619.4" x2="0" y2="1202.4"><stop offset="0.000" stop-color="#b27b15"/><stop offset="0.036" stop-color="#b98616"/><stop offset="0.073" stop-color="#c09117"/><stop offset="0.109" stop-color="#c79c18"/><stop offset="0.145" stop-color="#cfa71a"/><stop offset="0.200" stop-color="#cdae1a"/><stop offset="0.273" stop-color="#cbb61a"/><stop offset="0.364" stop-color="#cabe1a"/><stop offset="0.455" stop-color="#cac01a"/><stop offset="0.564" stop-color="#c9c21a"/><stop offset="0.682" stop-color="#c0bb18"/><stop offset="0.800" stop-color="#b7b517"/><stop offset="0.909" stop-color="#afaf16"/><stop offset="1.000" stop-color="#afaf16"/></linearGradient><linearGradient id="s5" gradientUnits="userSpaceOnUse" x1="0" y1="615.0" x2="0" y2="1198.0"><stop offset="0.000" stop-color="#b17c15"/><stop offset="0.036" stop-color="#b98816"/><stop offset="0.073" stop-color="#c09317"/><stop offset="0.109" stop-color="#c79e18"/><stop offset="0.145" stop-color="#cea91a"/><stop offset="0.200" stop-color="#ccb01a"/><stop offset="0.273" stop-color="#cbb81a"/><stop offset="0.364" stop-color="#cac11a"/><stop offset="0.455" stop-color="#c9c21a"/><stop offset="0.564" stop-color="#c9c31a"/><stop offset="0.682" stop-color="#c0bd18"/><stop offset="0.800" stop-color="#b7b617"/><stop offset="0.909" stop-color="#afaf16"/><stop offset="1.000" stop-color="#afaf16"/></linearGradient><linearGradient id="s6" gradientUnits="userSpaceOnUse" x1="0" y1="610.6" x2="0" y2="1193.6"><stop offset="0.000" stop-color="#b17d15"/><stop offset="0.036" stop-color="#b88916"/><stop offset="0.073" stop-color="#bf9417"/><stop offset="0.109" stop-color="#c79f18"/><stop offset="0.145" stop-color="#ceab1a"/><stop offset="0.200" stop-color="#ccb21a"/><stop offset="0.273" stop-color="#cbb91a"/><stop offset="0.364" stop-color="#c9c21a"/><stop offset="0.455" stop-color="#c9c31a"/><stop offset="0.564" stop-color="#c8c41a"/><stop offset="0.682" stop-color="#bfbe18"/><stop offset="0.800" stop-color="#b6b717"/><stop offset="0.909" stop-color="#aeb016"/><stop offset="1.000" stop-color="#aeb016"/></linearGradient><linearGradient id="s7" gradientUnits="userSpaceOnUse" x1="0" y1="606.3" x2="0" y2="1189.3"><stop offset="0.000" stop-color="#b17e15"/><stop offset="0.036" stop-color="#b88a16"/><stop offset="0.073" stop-color="#bf9617"/><stop offset="0.109" stop-color="#c6a118"/><stop offset="0.145" stop-color="#cdac1a"/><stop offset="0.200" stop-color="#ccb31a"/><stop offset="0.273" stop-color="#cabb1a"/><stop offset="0.364" stop-color="#c9c31a"/><stop offset="0.455" stop-color="#c8c41a"/><stop offset="0.564" stop-color="#c7c61a"/><stop offset="0.682" stop-color="#bfbf18"/><stop offset="0.800" stop-color="#b6b817"/><stop offset="0.909" stop-color="#aeb116"/><stop offset="1.000" stop-color="#aeb116"/></linearGradient><linearGradient id="s8" gradientUnits="userSpaceOnUse" x1="0" y1="601.9" x2="0" y2="1184.9"><stop offset="0.000" stop-color="#b18015"/><stop offset="0.036" stop-color="#b88c16"/><stop offset="0.073" stop-color="#bf9717"/><stop offset="0.109" stop-color="#c6a218"/><stop offset="0.145" stop-color="#cdae1a"/><stop offset="0.200" stop-color="#cbb51a"/><stop offset="0.273" stop-color="#cabc1a"/><stop offset="0.364" stop-color="#c8c51a"/><stop offset="0.455" stop-color="#c7c61a"/><stop offset="0.564" stop-color="#c7c71a"/><stop offset="0.682" stop-color="#bec018"/><stop offset="0.800" stop-color="#b5b917"/><stop offset="0.909" stop-color="#acb116"/><stop offset="1.000" stop-color="#acb116"/></linearGradient><linearGradient id="s9" gradientUnits="userSpaceOnUse" x1="0" y1="597.5" x2="0" y2="1180.5"><stop offset="0.000" stop-color="#b08115"/><stop offset="0.036" stop-color="#b78d16"/><stop offset="0.073" stop-color="#be9817"/><stop offset="0.109" stop-color="#c5a418"/><stop offset="0.145" stop-color="#ccb01a"/><stop offset="0.200" stop-color="#cbb61a"/><stop offset="0.273" stop-color="#cabe1a"/><stop offset="0.364" stop-color="#c7c61a"/><stop offset="0.455" stop-color="#c7c71a"/><stop offset="0.564" stop-color="#c6c81a"/><stop offset="0.682" stop-color="#bdc118"/><stop offset="0.800" stop-color="#b3b917"/><stop offset="0.909" stop-color="#aab216"/><stop offset="1.000" stop-color="#aab216"/></linearGradient><linearGradient id="s10" gradientUnits="userSpaceOnUse" x1="0" y1="593.1" x2="0" y2="1176.1"><stop offset="0.000" stop-color="#b08215"/><stop offset="0.036" stop-color="#b78e16"/><stop offset="0.073" stop-color="#be9a17"/><stop offset="0.109" stop-color="#c5a518"/><stop offset="0.145" stop-color="#ccb11a"/><stop offset="0.200" stop-color="#cbb71a"/><stop offset="0.273" stop-color="#cabf1a"/><stop offset="0.364" stop-color="#c7c71a"/><stop offset="0.455" stop-color="#c6c81a"/><stop offset="0.564" stop-color="#c6c91a"/><stop offset="0.682" stop-color="#bcc118"/><stop offset="0.800" stop-color="#b2b917"/><stop offset="0.909" stop-color="#a9b216"/><stop offset="1.000" stop-color="#a9b216"/></linearGradient><linearGradient id="s11" gradientUnits="userSpaceOnUse" x1="0" y1="588.7" x2="0" y2="1171.7"><stop offset="0.000" stop-color="#b08315"/><stop offset="0.036" stop-color="#b79016"/><stop offset="0.073" stop-color="#be9b17"/><stop offset="0.109" stop-color="#c5a718"/><stop offset="0.145" stop-color="#ccb31a"/><stop offset="0.200" stop-color="#cbb91a"/><stop offset="0.273" stop-color="#cac11a"/><stop offset="0.364" stop-color="#c6c81a"/><stop offset="0.455" stop-color="#c6c91a"/><stop offset="0.564" stop-color="#c3ca19"/><stop offset="0.682" stop-color="#b9c218"/><stop offset="0.800" stop-color="#afba17"/><stop offset="0.909" stop-color="#a6b215"/><stop offset="1.000" stop-color="#a6b215"/></linearGradient><linearGradient id="s12" gradientUnits="userSpaceOnUse" x1="0" y1="584.3" x2="0" y2="1167.3"><stop offset="0.000" stop-color="#af8515"/><stop offset="0.036" stop-color="#b69116"/><stop offset="0.073" stop-color="#bd9d17"/><stop offset="0.109" stop-color="#c4a818"/><stop offset="0.145" stop-color="#cbb41a"/><stop offset="0.200" stop-color="#cbba1a"/><stop offset="0.273" stop-color="#c9c21a"/><stop offset="0.364" stop-color="#c6c91a"/><stop offset="0.455" stop-color="#c4ca19"/><stop offset="0.564" stop-color="#c1ca19"/><stop offset="0.682" stop-color="#b6c218"/><stop offset="0.800" stop-color="#acba16"/><stop offset="0.909" stop-color="#a3b315"/><stop offset="1.000" stop-color="#a3b315"/></linearGradient><linearGradient id="s13" gradientUnits="userSpaceOnUse" x1="0" y1="579.9" x2="0" y2="1162.9"><stop offset="0.000" stop-color="#af8615"/><stop offset="0.036" stop-color="#b69216"/><stop offset="0.073" stop-color="#bd9e17"/><stop offset="0.109" stop-color="#c4aa18"/><stop offset="0.145" stop-color="#cbb61a"/><stop offset="0.200" stop-color="#cabc1a"/><stop offset="0.273" stop-color="#c9c31a"/><stop offset="0.364" stop-color="#c4ca19"/><stop offset="0.455" stop-color="#c1ca19"/><stop offset="0.564" stop-color="#beca19"/><stop offset="0.682" stop-color="#b4c217"/><stop offset="0.800" stop-color="#a9ba16"/><stop offset="0.909" stop-color="#a0b315"/><stop offset="1.000" stop-color="#a0b315"/></linearGradient><linearGradient id="s14" gradientUnits="userSpaceOnUse" x1="0" y1="575.5" x2="0" y2="1158.5"><stop offset="0.000" stop-color="#af8715"/><stop offset="0.036" stop-color="#b69416"/><stop offset="0.073" stop-color="#bda017"/><stop offset="0.109" stop-color="#c4ab18"/><stop offset="0.145" stop-color="#cbb71a"/><stop offset="0.200" stop-color="#cabd1a"/><stop offset="0.273" stop-color="#c8c41a"/><stop offset="0.364" stop-color="#c2ca19"/><stop offset="0.455" stop-color="#bfca19"/><stop offset="0.564" stop-color="#bccb18"/><stop offset="0.682" stop-color="#b1c317"/><stop offset="0.800" stop-color="#a6bb15"/><stop offset="0.909" stop-color="#9db314"/><stop offset="1.000" stop-color="#9db314"/></linearGradient><linearGradient id="s15" gradientUnits="userSpaceOnUse" x1="0" y1="571.1" x2="0" y2="1154.1"><stop offset="0.000" stop-color="#ae8915"/><stop offset="0.036" stop-color="#b59516"/><stop offset="0.073" stop-color="#bca117"/><stop offset="0.109" stop-color="#c3ad18"/><stop offset="0.145" stop-color="#cbb81a"/><stop offset="0.200" stop-color="#cabe1a"/><stop offset="0.273" stop-color="#c8c51a"/><stop offset="0.364" stop-color="#c0ca19"/><stop offset="0.455" stop-color="#bdcb18"/><stop offset="0.564" stop-color="#b9cb18"/><stop offset="0.682" stop-color="#aec317"/><stop offset="0.800" stop-color="#a4ba15"/><stop offset="0.909" stop-color="#9ab213"/><stop offset="1.000" stop-color="#9ab213"/></linearGradient><linearGradient id="s16" gradientUnits="userSpaceOnUse" x1="0" y1="566.7" x2="0" y2="1149.7"><stop offset="0.000" stop-color="#ae8a15"/><stop offset="0.036" stop-color="#b59716"/><stop offset="0.073" stop-color="#bca317"/><stop offset="0.109" stop-color="#c3ae18"/><stop offset="0.145" stop-color="#cbba1a"/><stop offset="0.200" stop-color="#cac01a"/><stop offset="0.273" stop-color="#c7c61a"/><stop offset="0.364" stop-color="#beca19"/><stop offset="0.455" stop-color="#bbcb18"/><stop offset="0.564" stop-color="#b7cb18"/><stop offset="0.682" stop-color="#acc316"/><stop offset="0.800" stop-color="#a1ba14"/><stop offset="0.909" stop-color="#98b213"/><stop offset="1.000" stop-color="#98b213"/></linearGradient><linearGradient id="s17" gradientUnits="userSpaceOnUse" x1="0" y1="562.3" x2="0" y2="1145.3"><stop offset="0.000" stop-color="#ae8c15"/><stop offset="0.036" stop-color="#b49916"/><stop offset="0.073" stop-color="#bba417"/><stop offset="0.109" stop-color="#c3b018"/><stop offset="0.145" stop-color="#cabb1a"/><stop offset="0.200" stop-color="#cac11a"/><stop offset="0.273" stop-color="#c6c81a"/><stop offset="0.364" stop-color="#bccb18"/><stop offset="0.455" stop-color="#b8cb18"/><stop offset="0.564" stop-color="#b5cb17"/><stop offset="0.682" stop-color="#aac215"/><stop offset="0.800" stop-color="#9fba14"/><stop offset="0.909" stop-color="#95b112"/><stop offset="1.000" stop-color="#95b112"/></linearGradient><linearGradient id="s18" gradientUnits="userSpaceOnUse" x1="0" y1="557.9" x2="0" y2="1140.9"><stop offset="0.000" stop-color="#ad8e15"/><stop offset="0.036" stop-color="#b49a16"/><stop offset="0.073" stop-color="#bba617"/><stop offset="0.109" stop-color="#c3b218"/><stop offset="0.145" stop-color="#cabe1a"/><stop offset="0.200" stop-color="#c9c31a"/><stop offset="0.273" stop-color="#c5ca19"/><stop offset="0.364" stop-color="#b8cb18"/><stop offset="0.455" stop-color="#b4cb17"/><stop offset="0.564" stop-color="#b1cb16"/><stop offset="0.682" stop-color="#a6c215"/><stop offset="0.800" stop-color="#9bb913"/><stop offset="0.909" stop-color="#92b111"/><stop offset="1.000" stop-color="#92b111"/></linearGradient><linearGradient id="s19" gradientUnits="userSpaceOnUse" x1="0" y1="553.5" x2="0" y2="1136.5"><stop offset="0.000" stop-color="#ad8f15"/><stop offset="0.036" stop-color="#b39c16"/><stop offset="0.073" stop-color="#bba817"/><stop offset="0.109" stop-color="#c2b418"/><stop offset="0.145" stop-color="#cac01a"/><stop offset="0.200" stop-color="#c7c61a"/><stop offset="0.273" stop-color="#c1ca19"/><stop offset="0.364" stop-color="#b3cb17"/><stop offset="0.455" stop-color="#b0cb16"/><stop offset="0.564" stop-color="#adca16"/><stop offset="0.682" stop-color="#a2c114"/><stop offset="0.800" stop-color="#98b812"/><stop offset="0.909" stop-color="#8eb011"/><stop offset="1.000" stop-color="#8eb011"/></linearGradient><linearGradient id="s20" gradientUnits="userSpaceOnUse" x1="0" y1="549.2" x2="0" y2="1132.2"><stop offset="0.000" stop-color="#ac9115"/><stop offset="0.036" stop-color="#b39e16"/><stop offset="0.073" stop-color="#baaa17"/><stop offset="0.109" stop-color="#c2b618"/><stop offset="0.145" stop-color="#c9c21a"/><stop offset="0.200" stop-color="#c6c81a"/><stop offset="0.273" stop-color="#bdcb18"/><stop offset="0.364" stop-color="#b0cb16"/><stop offset="0.455" stop-color="#adca15"/><stop offset="0.564" stop-color="#a9ca15"/><stop offset="0.682" stop-color="#9ec113"/><stop offset="0.800" stop-color="#94b811"/><stop offset="0.909" stop-color="#8bb010"/><stop offset="1.000" stop-color="#8bb010"/></linearGradient><linearGradient id="s21" gradientUnits="userSpaceOnUse" x1="0" y1="544.8" x2="0" y2="1127.8"><stop offset="0.000" stop-color="#ac9415"/><stop offset="0.036" stop-color="#b3a116"/><stop offset="0.073" stop-color="#baad17"/><stop offset="0.109" stop-color="#c1b918"/><stop offset="0.145" stop-color="#c8c51a"/><stop offset="0.200" stop-color="#c4ca19"/><stop offset="0.273" stop-color="#b8cb18"/><stop offset="0.364" stop-color="#abca15"/><stop offset="0.455" stop-color="#a8c914"/><stop offset="0.564" stop-color="#a5c914"/><stop offset="0.682" stop-color="#9bc012"/><stop offset="0.800" stop-color="#90b710"/><stop offset="0.909" stop-color="#87af0f"/><stop offset="1.000" stop-color="#87af0f"/></linearGradient><linearGradient id="s22" gradientUnits="userSpaceOnUse" x1="0" y1="540.4" x2="0" y2="1123.4"><stop offset="0.000" stop-color="#ab9615"/><stop offset="0.036" stop-color="#b2a316"/><stop offset="0.073" stop-color="#bab017"/><stop offset="0.109" stop-color="#c0bc18"/><stop offset="0.145" stop-color="#c6c81a"/><stop offset="0.200" stop-color="#bfca19"/><stop offset="0.273" stop-color="#b3cb17"/><stop offset="0.364" stop-color="#a6c914"/><stop offset="0.455" stop-color="#a3c913"/><stop offset="0.564" stop-color="#a0c813"/><stop offset="0.682" stop-color="#96bf11"/><stop offset="0.800" stop-color="#8cb70f"/><stop offset="0.909" stop-color="#83af0e"/><stop offset="1.000" stop-color="#83af0e"/></linearGradient><linearGradient id="s23" gradientUnits="userSpaceOnUse" x1="0" y1="536.0" x2="0" y2="1119.0"><stop offset="0.000" stop-color="#ab9815"/><stop offset="0.036" stop-color="#b2a616"/><stop offset="0.073" stop-color="#b9b317"/><stop offset="0.109" stop-color="#bfbf18"/><stop offset="0.145" stop-color="#c4ca19"/><stop offset="0.200" stop-color="#b9cb18"/><stop offset="0.273" stop-color="#aeca16"/><stop offset="0.364" stop-color="#a0c813"/><stop offset="0.455" stop-color="#9ec812"/><stop offset="0.564" stop-color="#9bc711"/><stop offset="0.682" stop-color="#91bf10"/><stop offset="0.800" stop-color="#87b60e"/><stop offset="0.909" stop-color="#7eaf0c"/><stop offset="1.000" stop-color="#7eaf0c"/></linearGradient><linearGradient id="s24" gradientUnits="userSpaceOnUse" x1="0" y1="531.6" x2="0" y2="1114.6"><stop offset="0.000" stop-color="#aa9b15"/><stop offset="0.036" stop-color="#b1a916"/><stop offset="0.073" stop-color="#b8b517"/><stop offset="0.109" stop-color="#bec118"/><stop offset="0.145" stop-color="#bfca19"/><stop offset="0.200" stop-color="#b4cb17"/><stop offset="0.273" stop-color="#a9ca15"/><stop offset="0.364" stop-color="#9ac711"/><stop offset="0.455" stop-color="#98c710"/><stop offset="0.564" stop-color="#95c710"/><stop offset="0.682" stop-color="#8bbe0e"/><stop offset="0.800" stop-color="#82b60d"/><stop offset="0.909" stop-color="#7aae0b"/><stop offset="1.000" stop-color="#7aae0b"/></linearGradient><linearGradient id="s25" gradientUnits="userSpaceOnUse" x1="0" y1="527.2" x2="0" y2="1110.2"><stop offset="0.000" stop-color="#aa9e15"/><stop offset="0.036" stop-color="#b1ab16"/><stop offset="0.073" stop-color="#b7b817"/><stop offset="0.109" stop-color="#b9c218"/><stop offset="0.145" stop-color="#bacb18"/><stop offset="0.200" stop-color="#b1cb16"/><stop offset="0.273" stop-color="#a5c914"/><stop offset="0.364" stop-color="#96c710"/><stop offset="0.455" stop-color="#94c70f"/><stop offset="0.564" stop-color="#91c70f"/><stop offset="0.682" stop-color="#88be0d"/><stop offset="0.800" stop-color="#7fb60c"/><stop offset="0.909" stop-color="#77ae0a"/><stop offset="1.000" stop-color="#77ae0a"/></linearGradient><linearGradient id="s26" gradientUnits="userSpaceOnUse" x1="0" y1="522.8" x2="0" y2="1105.8"><stop offset="0.000" stop-color="#a9a215"/><stop offset="0.036" stop-color="#afae16"/><stop offset="0.073" stop-color="#b4ba17"/><stop offset="0.109" stop-color="#b5c317"/><stop offset="0.145" stop-color="#b5cb17"/><stop offset="0.200" stop-color="#adca16"/><stop offset="0.273" stop-color="#a2c813"/><stop offset="0.364" stop-color="#93c70f"/><stop offset="0.455" stop-color="#91c70f"/><stop offset="0.564" stop-color="#8dc60e"/><stop offset="0.682" stop-color="#84be0c"/><stop offset="0.800" stop-color="#7bb50b"/><stop offset="0.909" stop-color="#73ad0a"/><stop offset="1.000" stop-color="#73ad0a"/></linearGradient><linearGradient id="s27" gradientUnits="userSpaceOnUse" x1="0" y1="518.4" x2="0" y2="1101.4"><stop offset="0.000" stop-color="#a8a515"/><stop offset="0.036" stop-color="#aeb116"/><stop offset="0.073" stop-color="#afba17"/><stop offset="0.109" stop-color="#b0c317"/><stop offset="0.145" stop-color="#b1cb17"/><stop offset="0.200" stop-color="#a9ca15"/><stop offset="0.273" stop-color="#9fc812"/><stop offset="0.364" stop-color="#90c60e"/><stop offset="0.455" stop-color="#8dc60e"/><stop offset="0.564" stop-color="#8ac60d"/><stop offset="0.682" stop-color="#81bd0b"/><stop offset="0.800" stop-color="#78b50a"/><stop offset="0.909" stop-color="#70ad09"/><stop offset="1.000" stop-color="#70ad09"/></linearGradient><linearGradient id="s28" gradientUnits="userSpaceOnUse" x1="0" y1="514.0" x2="0" y2="1097.0"><stop offset="0.000" stop-color="#a7a815"/><stop offset="0.036" stop-color="#a9b216"/><stop offset="0.073" stop-color="#aabb16"/><stop offset="0.109" stop-color="#acc316"/><stop offset="0.145" stop-color="#adca16"/><stop offset="0.200" stop-color="#a6c914"/><stop offset="0.273" stop-color="#9cc812"/><stop offset="0.364" stop-color="#8dc60d"/><stop offset="0.455" stop-color="#8ac60d"/><stop offset="0.564" stop-color="#87c60c"/><stop offset="0.682" stop-color="#7ebd0b"/><stop offset="0.800" stop-color="#75b409"/><stop offset="0.909" stop-color="#6dac09"/><stop offset="1.000" stop-color="#6dac09"/></linearGradient><linearGradient id="s29" gradientUnits="userSpaceOnUse" x1="0" y1="509.6" x2="0" y2="1092.6"><stop offset="0.000" stop-color="#a4a915"/><stop offset="0.036" stop-color="#a4b215"/><stop offset="0.073" stop-color="#a5bb15"/><stop offset="0.109" stop-color="#a7c215"/><stop offset="0.145" stop-color="#a9ca15"/><stop offset="0.200" stop-color="#a2c813"/><stop offset="0.273" stop-color="#98c710"/><stop offset="0.364" stop-color="#89c60d"/><stop offset="0.455" stop-color="#87c60c"/><stop offset="0.564" stop-color="#83c50b"/><stop offset="0.682" stop-color="#7abc0a"/><stop offset="0.800" stop-color="#72b409"/><stop offset="0.909" stop-color="#6aac08"/><stop offset="1.000" stop-color="#6aac08"/></linearGradient><linearGradient id="s30" gradientUnits="userSpaceOnUse" x1="0" y1="505.2" x2="0" y2="1088.2"><stop offset="0.000" stop-color="#9eaa14"/><stop offset="0.036" stop-color="#9fb314"/><stop offset="0.073" stop-color="#a1ba14"/><stop offset="0.109" stop-color="#a3c214"/><stop offset="0.145" stop-color="#a5c914"/><stop offset="0.200" stop-color="#9ec812"/><stop offset="0.273" stop-color="#94c70f"/><stop offset="0.364" stop-color="#86c60c"/><stop offset="0.455" stop-color="#83c50b"/><stop offset="0.564" stop-color="#80c40a"/><stop offset="0.682" stop-color="#77bc09"/><stop offset="0.800" stop-color="#6eb308"/><stop offset="0.909" stop-color="#67ab07"/><stop offset="1.000" stop-color="#67ab07"/></linearGradient><linearGradient id="s31" gradientUnits="userSpaceOnUse" x1="0" y1="500.8" x2="0" y2="1083.8"><stop offset="0.000" stop-color="#99ab14"/><stop offset="0.036" stop-color="#9bb213"/><stop offset="0.073" stop-color="#9dba13"/><stop offset="0.109" stop-color="#9fc113"/><stop offset="0.145" stop-color="#a1c813"/><stop offset="0.200" stop-color="#9ac711"/><stop offset="0.273" stop-color="#90c60e"/><stop offset="0.364" stop-color="#83c50b"/><stop offset="0.455" stop-color="#80c40a"/><stop offset="0.564" stop-color="#7cc40a"/><stop offset="0.682" stop-color="#74bb09"/><stop offset="0.800" stop-color="#6bb208"/><stop offset="0.909" stop-color="#64ab07"/><stop offset="1.000" stop-color="#64ab07"/></linearGradient><linearGradient id="s32" gradientUnits="userSpaceOnUse" x1="0" y1="496.4" x2="0" y2="1079.4"><stop offset="0.000" stop-color="#95aa13"/><stop offset="0.036" stop-color="#97b213"/><stop offset="0.073" stop-color="#99b912"/><stop offset="0.109" stop-color="#9bc012"/><stop offset="0.145" stop-color="#9dc812"/><stop offset="0.200" stop-color="#96c710"/><stop offset="0.273" stop-color="#8cc60d"/><stop offset="0.364" stop-color="#7fc40a"/><stop offset="0.455" stop-color="#7dc40a"/><stop offset="0.564" stop-color="#79c309"/><stop offset="0.682" stop-color="#71bb08"/><stop offset="0.800" stop-color="#68b207"/><stop offset="0.909" stop-color="#61aa06"/><stop offset="1.000" stop-color="#61aa06"/></linearGradient><linearGradient id="s33" gradientUnits="userSpaceOnUse" x1="0" y1="492.1" x2="0" y2="1075.1"><stop offset="0.000" stop-color="#92aa12"/><stop offset="0.036" stop-color="#94b112"/><stop offset="0.073" stop-color="#96b912"/><stop offset="0.109" stop-color="#98c011"/><stop offset="0.145" stop-color="#9ac711"/><stop offset="0.200" stop-color="#92c70f"/><stop offset="0.273" stop-color="#88c60c"/><stop offset="0.364" stop-color="#7cc40a"/><stop offset="0.455" stop-color="#79c309"/><stop offset="0.564" stop-color="#76c309"/><stop offset="0.682" stop-color="#6eba08"/><stop offset="0.800" stop-color="#66b107"/><stop offset="0.909" stop-color="#5fa806"/><stop offset="1.000" stop-color="#5fa806"/></linearGradient><linearGradient id="s34" gradientUnits="userSpaceOnUse" x1="0" y1="487.7" x2="0" y2="1070.7"><stop offset="0.000" stop-color="#8fa911"/><stop offset="0.036" stop-color="#90b111"/><stop offset="0.073" stop-color="#93b811"/><stop offset="0.109" stop-color="#95bf11"/><stop offset="0.145" stop-color="#96c710"/><stop offset="0.200" stop-color="#8ec60e"/><stop offset="0.273" stop-color="#85c50b"/><stop offset="0.364" stop-color="#79c309"/><stop offset="0.455" stop-color="#76c309"/><stop offset="0.564" stop-color="#73c208"/><stop offset="0.682" stop-color="#6bba07"/><stop offset="0.800" stop-color="#64b006"/><stop offset="0.909" stop-color="#5da705"/><stop offset="1.000" stop-color="#5da705"/></linearGradient><linearGradient id="s35" gradientUnits="userSpaceOnUse" x1="0" y1="483.3" x2="0" y2="1066.3"><stop offset="0.000" stop-color="#8ba911"/><stop offset="0.036" stop-color="#8db010"/><stop offset="0.073" stop-color="#8fb810"/><stop offset="0.109" stop-color="#91bf10"/><stop offset="0.145" stop-color="#92c70f"/><stop offset="0.200" stop-color="#8bc60d"/><stop offset="0.273" stop-color="#82c50b"/><stop offset="0.364" stop-color="#77c309"/><stop offset="0.455" stop-color="#74c208"/><stop offset="0.564" stop-color="#70c208"/><stop offset="0.682" stop-color="#69b807"/><stop offset="0.800" stop-color="#62ae06"/><stop offset="0.909" stop-color="#5ba605"/><stop offset="1.000" stop-color="#5ba605"/></linearGradient><linearGradient id="s36" gradientUnits="userSpaceOnUse" x1="0" y1="478.9" x2="0" y2="1061.9"><stop offset="0.000" stop-color="#88a810"/><stop offset="0.036" stop-color="#8ab010"/><stop offset="0.073" stop-color="#8cb70f"/><stop offset="0.109" stop-color="#8dbf0f"/><stop offset="0.145" stop-color="#8ec60e"/><stop offset="0.200" stop-color="#87c60c"/><stop offset="0.273" stop-color="#7ec40a"/><stop offset="0.364" stop-color="#74c208"/><stop offset="0.455" stop-color="#71c208"/><stop offset="0.564" stop-color="#6ec107"/><stop offset="0.682" stop-color="#67b706"/><stop offset="0.800" stop-color="#60ad05"/><stop offset="0.909" stop-color="#59a405"/><stop offset="1.000" stop-color="#59a405"/></linearGradient><linearGradient id="s37" gradientUnits="userSpaceOnUse" x1="0" y1="474.5" x2="0" y2="1057.5"><stop offset="0.000" stop-color="#85a80f"/><stop offset="0.036" stop-color="#86af0f"/><stop offset="0.073" stop-color="#88b70e"/><stop offset="0.109" stop-color="#89be0d"/><stop offset="0.145" stop-color="#8ac60d"/><stop offset="0.200" stop-color="#84c50b"/><stop offset="0.273" stop-color="#7bc40a"/><stop offset="0.364" stop-color="#72c208"/><stop offset="0.455" stop-color="#6fc107"/><stop offset="0.564" stop-color="#6cbf07"/><stop offset="0.682" stop-color="#65b506"/><stop offset="0.800" stop-color="#5eac05"/><stop offset="0.909" stop-color="#57a304"/><stop offset="1.000" stop-color="#57a304"/></linearGradient><linearGradient id="s38" gradientUnits="userSpaceOnUse" x1="0" y1="470.1" x2="0" y2="1053.1"><stop offset="0.000" stop-color="#81a70e"/><stop offset="0.036" stop-color="#82af0e"/><stop offset="0.073" stop-color="#84b60d"/><stop offset="0.109" stop-color="#85be0c"/><stop offset="0.145" stop-color="#86c60c"/><stop offset="0.200" stop-color="#80c50b"/><stop offset="0.273" stop-color="#78c309"/><stop offset="0.364" stop-color="#6fc107"/><stop offset="0.455" stop-color="#6dc007"/><stop offset="0.564" stop-color="#6abe06"/><stop offset="0.682" stop-color="#63b405"/><stop offset="0.800" stop-color="#5baa04"/><stop offset="0.909" stop-color="#55a204"/><stop offset="1.000" stop-color="#55a204"/></linearGradient><linearGradient id="s39" gradientUnits="userSpaceOnUse" x1="0" y1="465.7" x2="0" y2="1048.7"><stop offset="0.000" stop-color="#7da70d"/><stop offset="0.036" stop-color="#7eaf0c"/><stop offset="0.073" stop-color="#80b60c"/><stop offset="0.109" stop-color="#81be0b"/><stop offset="0.145" stop-color="#82c50b"/><stop offset="0.200" stop-color="#7dc40a"/><stop offset="0.273" stop-color="#75c309"/><stop offset="0.364" stop-color="#6dc007"/><stop offset="0.455" stop-color="#6bbe06"/><stop offset="0.564" stop-color="#68bc06"/><stop offset="0.682" stop-color="#60b305"/><stop offset="0.800" stop-color="#59a904"/><stop offset="0.909" stop-color="#53a003"/><stop offset="1.000" stop-color="#53a003"/></linearGradient><clipPath id="tc"><path d="M0.0 638.6 L3.0 637.5 L6.0 638.3 L9.0 636.9 L12.0 637.4 L15.0 637.1 L18.0 635.8 L21.0 636.4 L24.0 635.2 L27.0 635.6 L30.0 634.6 L33.0 634.0 L36.0 634.6 L39.0 636.1 L42.0 634.7 L45.0 634.1 L48.0 634.9 L51.0 636.3 L54.0 635.9 L57.0 635.0 L60.0 636.2 L63.0 633.9 L66.0 635.0 L69.0 633.7 L72.0 632.4 L75.0 631.4 L78.0 631.4 L81.0 632.9 L84.0 631.6 L87.0 632.1 L90.0 632.5 L93.0 631.7 L96.0 631.8 L99.0 630.1 L102.0 629.1 L105.0 628.8 L108.0 630.0 L111.0 629.9 L114.0 629.4 L117.0 629.8 L120.0 629.6 L123.0 628.8 L126.0 629.9 L129.0 630.1 L132.0 628.7 L135.0 628.8 L138.0 628.6 L141.0 629.6 L144.0 629.6 L147.0 628.0 L150.0 629.3 L153.0 627.1 L156.0 626.7 L159.0 627.5 L162.0 625.9 L165.0 625.9 L168.0 624.4 L171.0 625.4 L174.0 626.3 L177.0 626.1 L180.0 626.8 L183.0 625.4 L186.0 625.6 L189.0 625.4 L192.0 625.1 L195.0 624.4 L198.0 625.1 L201.0 625.8 L204.0 624.6 L207.0 624.4 L210.0 622.3 L213.0 623.0 L216.0 623.1 L219.0 624.2 L222.0 624.2 L225.0 622.4 L228.0 621.6 L231.0 621.9 L234.0 619.9 L237.0 620.0 L240.0 619.1 L243.0 618.2 L246.0 617.5 L249.0 619.2 L252.0 618.1 L255.0 617.7 L258.0 617.8 L261.0 619.3 L264.0 617.6 L267.0 617.7 L270.0 618.0 L273.0 619.1 L276.0 619.5 L279.0 619.8 L282.0 618.0 L285.0 617.2 L288.0 616.5 L291.0 617.7 L294.0 618.5 L297.0 616.3 L300.0 615.0 L303.0 614.3 L306.0 613.8 L309.0 614.2 L312.0 614.7 L315.0 613.9 L318.0 612.4 L321.0 612.8 L324.0 612.8 L327.0 613.3 L330.0 614.8 L333.0 614.7 L336.0 614.0 L339.0 613.8 L342.0 613.8 L345.0 611.7 L348.0 613.1 L351.0 613.4 L354.0 613.8 L357.0 613.8 L360.0 612.3 L363.0 611.4 L366.0 609.8 L369.0 610.4 L372.0 608.9 L375.0 607.9 L378.0 607.6 L381.0 607.3 L384.0 607.5 L387.0 606.6 L390.0 605.9 L393.0 605.8 L396.0 605.5 L399.0 606.0 L402.0 605.2 L405.0 607.3 L408.0 607.7 L411.0 606.3 L414.0 605.7 L417.0 605.6 L420.0 605.5 L423.0 604.5 L426.0 606.2 L429.0 607.6 L432.0 606.6 L435.0 606.0 L438.0 604.3 L441.0 603.2 L444.0 603.2 L447.0 602.9 L450.0 604.4 L453.0 603.1 L456.0 601.7 L459.0 603.8 L462.0 603.6 L465.0 602.2 L468.0 602.5 L471.0 601.0 L474.0 601.5 L477.0 603.2 L480.0 603.8 L483.0 603.5 L486.0 601.8 L489.0 601.1 L492.0 599.9 L495.0 601.0 L498.0 600.9 L501.0 601.4 L504.0 600.3 L507.0 599.1 L510.0 600.2 L513.0 601.4 L516.0 601.5 L519.0 601.4 L522.0 601.2 L525.0 600.8 L528.0 598.8 L531.0 598.4 L534.0 597.6 L537.0 596.0 L540.0 594.9 L543.0 595.0 L546.0 594.9 L549.0 596.1 L552.0 597.6 L555.0 596.7 L558.0 597.7 L561.0 598.4 L564.0 598.6 L567.0 596.7 L570.0 595.0 L573.0 593.9 L576.0 593.1 L579.0 592.5 L582.0 593.5 L585.0 594.8 L588.0 595.3 L591.0 594.4 L594.0 594.3 L597.0 594.6 L600.0 592.4 L603.0 592.8 L606.0 593.8 L609.0 593.9 L612.0 593.7 L615.0 592.7 L618.0 591.0 L621.0 591.8 L624.0 590.8 L627.0 591.6 L630.0 592.5 L633.0 591.1 L636.0 590.2 L639.0 591.3 L642.0 591.2 L645.0 589.2 L648.0 587.8 L651.0 587.0 L654.0 588.8 L657.0 589.5 L660.0 587.7 L663.0 588.7 L666.0 589.7 L669.0 589.1 L672.0 587.7 L675.0 587.5 L678.0 585.9 L681.0 584.4 L684.0 586.5 L687.0 586.7 L690.0 586.3 L693.0 587.3 L696.0 586.1 L699.0 586.8 L702.0 586.9 L705.0 585.0 L708.0 583.8 L711.0 583.2 L714.0 582.5 L717.0 583.1 L720.0 582.4 L723.0 582.3 L726.0 581.3 L729.0 583.1 L732.0 582.3 L735.0 582.0 L738.0 582.2 L741.0 583.2 L744.0 582.2 L747.0 583.1 L750.0 582.2 L753.0 581.6 L756.0 581.2 L759.0 579.2 L762.0 579.3 L765.0 578.4 L768.0 577.2 L771.0 579.0 L774.0 577.9 L777.0 578.2 L780.0 579.0 L783.0 578.9 L786.0 578.0 L789.0 578.0 L792.0 578.0 L795.0 578.6 L798.0 576.8 L801.0 577.0 L804.0 576.1 L807.0 575.5 L810.0 576.6 L813.0 576.4 L816.0 576.3 L819.0 576.8 L822.0 577.5 L825.0 576.3 L828.0 576.1 L831.0 575.5 L834.0 575.1 L837.0 575.3 L840.0 574.6 L843.0 574.3 L846.0 573.9 L849.0 575.0 L852.0 574.8 L855.0 575.2 L858.0 575.5 L861.0 573.4 L864.0 573.1 L867.0 574.0 L870.0 574.1 L873.0 571.8 L876.0 570.3 L879.0 570.3 L882.0 569.1 L885.0 568.8 L888.0 568.0 L891.0 569.3 L894.0 570.4 L897.0 571.3 L900.0 569.3 L903.0 569.9 L906.0 570.0 L909.0 568.2 L912.0 569.5 L915.0 570.4 L918.0 568.5 L921.0 569.6 L924.0 568.4 L927.0 567.8 L930.0 569.0 L933.0 569.1 L936.0 567.0 L939.0 566.5 L942.0 566.3 L945.0 565.6 L948.0 564.6 L951.0 564.3 L954.0 565.3 L957.0 563.6 L960.0 564.1 L963.0 564.0 L966.0 562.5 L969.0 562.5 L972.0 563.4 L975.0 563.4 L978.0 561.9 L981.0 563.9 L984.0 564.4 L987.0 565.1 L990.0 562.7 L993.0 561.7 L996.0 560.3 L999.0 561.7 L1002.0 560.8 L1005.0 559.7 L1008.0 559.9 L1011.0 561.5 L1014.0 562.1 L1017.0 560.6 L1020.0 559.2 L1023.0 560.7 L1026.0 560.5 L1029.0 560.6 L1032.0 558.7 L1035.0 557.3 L1038.0 558.4 L1041.0 558.1 L1044.0 556.7 L1047.0 558.6 L1050.0 558.6 L1053.0 559.1 L1056.0 557.0 L1059.0 558.1 L1062.0 556.1 L1065.0 557.4 L1068.0 556.8 L1071.0 556.0 L1074.0 556.1 L1077.0 557.2 L1080.0 555.7 L1083.0 554.3 L1086.0 554.6 L1089.0 553.7 L1092.0 552.7 L1095.0 552.2 L1098.0 551.5 L1101.0 551.4 L1104.0 551.6 L1107.0 551.6 L1110.0 553.0 L1113.0 552.2 L1116.0 552.3 L1119.0 551.3 L1122.0 551.1 L1125.0 549.8 L1128.0 549.7 L1131.0 548.8 L1134.0 550.5 L1137.0 550.8 L1140.0 549.8 L1143.0 549.9 L1146.0 551.4 L1149.0 549.6 L1152.0 550.7 L1155.0 550.0 L1158.0 549.7 L1161.0 550.5 L1164.0 549.5 L1167.0 549.1 L1170.0 549.4 L1173.0 550.4 L1176.0 548.9 L1179.0 549.5 L1182.0 549.3 L1185.0 548.9 L1188.0 547.8 L1191.0 546.9 L1194.0 545.3 L1197.0 544.5 L1200.0 543.7 L1203.0 545.3 L1206.0 544.6 L1209.0 543.8 L1212.0 543.0 L1215.0 544.8 L1218.0 545.9 L1221.0 545.9 L1224.0 544.5 L1227.0 543.4 L1230.0 542.9 L1233.0 543.0 L1236.0 542.0 L1239.0 542.2 L1242.0 541.7 L1245.0 543.5 L1248.0 544.5 L1251.0 543.7 L1254.0 542.1 L1257.0 543.4 L1260.0 542.0 L1263.0 541.2 L1266.0 539.5 L1269.0 539.6 L1272.0 539.8 L1275.0 540.0 L1278.0 539.0 L1281.0 539.3 L1284.0 537.8 L1287.0 537.6 L1290.0 536.9 L1293.0 537.3 L1296.0 536.4 L1299.0 535.6 L1302.0 536.0 L1305.0 535.9 L1308.0 536.9 L1311.0 537.2 L1314.0 538.0 L1317.0 538.1 L1320.0 538.2 L1323.0 538.8 L1326.0 537.4 L1329.0 536.3 L1332.0 537.6 L1335.0 535.7 L1338.0 536.3 L1341.0 536.3 L1344.0 534.2 L1347.0 535.5 L1350.0 536.3 L1353.0 535.9 L1356.0 535.8 L1359.0 536.0 L1362.0 533.8 L1365.0 533.7 L1368.0 533.4 L1371.0 534.2 L1374.0 534.5 L1377.0 534.7 L1380.0 533.9 L1383.0 534.4 L1386.0 533.8 L1389.0 533.5 L1392.0 531.7 L1395.0 529.9 L1398.0 529.0 L1401.0 529.2 L1404.0 528.3 L1407.0 530.1 L1410.0 530.1 L1413.0 530.3 L1416.0 530.3 L1419.0 530.4 L1422.0 529.7 L1425.0 527.7 L1428.0 528.9 L1431.0 529.4 L1434.0 528.8 L1437.0 528.5 L1440.0 528.6 L1443.0 526.6 L1446.0 527.5 L1449.0 526.4 L1452.0 525.1 L1455.0 524.8 L1458.0 526.0 L1461.0 525.0 L1464.0 526.0 L1467.0 527.3 L1470.0 526.4 L1473.0 525.4 L1476.0 525.0 L1479.0 525.4 L1482.0 525.8 L1485.0 525.4 L1488.0 525.2 L1491.0 523.2 L1494.0 522.1 L1497.0 521.7 L1500.0 522.9 L1503.0 522.1 L1506.0 522.4 L1509.0 520.7 L1512.0 519.8 L1515.0 519.8 L1518.0 521.0 L1521.0 521.7 L1524.0 521.9 L1527.0 520.8 L1530.0 520.7 L1533.0 520.4 L1536.0 520.1 L1539.0 518.8 L1542.0 520.3 L1545.0 519.0 L1548.0 520.6 L1551.0 521.3 L1554.0 518.7 L1557.0 518.4 L1560.0 519.3 L1563.0 520.3 L1566.0 519.1 L1569.0 517.7 L1572.0 516.6 L1575.0 518.2 L1578.0 516.7 L1581.0 516.9 L1584.0 515.5 L1587.0 515.8 L1590.0 517.3 L1593.0 515.4 L1596.0 516.4 L1599.0 515.9 L1602.0 516.8 L1605.0 516.6 L1608.0 514.9 L1611.0 515.9 L1614.0 515.1 L1617.0 513.0 L1620.0 511.6 L1623.0 512.3 L1626.0 512.4 L1629.0 511.9 L1632.0 511.1 L1635.0 511.1 L1638.0 510.9 L1641.0 512.4 L1644.0 510.5 L1647.0 511.7 L1650.0 512.6 L1653.0 510.7 L1656.0 512.1 L1659.0 512.1 L1662.0 512.7 L1665.0 510.9 L1668.0 510.1 L1671.0 509.5 L1674.0 511.1 L1677.0 510.6 L1680.0 509.4 L1683.0 508.9 L1686.0 508.0 L1689.0 506.6 L1692.0 505.9 L1695.0 507.7 L1698.0 506.9 L1701.0 508.4 L1704.0 507.1 L1707.0 506.2 L1710.0 506.4 L1713.0 505.4 L1716.0 505.3 L1719.0 507.0 L1722.0 507.7 L1725.0 507.7 L1728.0 507.1 L1731.0 507.6 L1734.0 507.8 L1737.0 506.6 L1740.0 506.4 L1743.0 504.0 L1746.0 504.6 L1749.0 504.0 L1752.0 504.6 L1755.0 504.4 L1758.0 503.1 L1761.0 501.5 L1764.0 503.2 L1767.0 501.6 L1770.0 501.6 L1773.0 501.1 L1776.0 500.6 L1779.0 501.6 L1782.0 502.9 L1785.0 501.3 L1788.0 501.5 L1791.0 500.4 L1794.0 500.4 L1797.0 499.8 L1800.0 498.7 L1803.0 497.9 L1806.0 497.4 L1809.0 499.3 L1812.0 499.0 L1815.0 497.9 L1818.0 499.3 L1821.0 500.4 L1824.0 499.2 L1827.0 497.3 L1830.0 496.3 L1833.0 495.3 L1836.0 495.4 L1839.0 494.6 L1842.0 494.4 L1845.0 494.3 L1848.0 495.2 L1851.0 496.6 L1854.0 496.9 L1857.0 495.9 L1860.0 495.3 L1863.0 495.1 L1866.0 494.5 L1869.0 493.9 L1872.0 492.5 L1875.0 492.3 L1878.0 494.3 L1881.0 492.7 L1884.0 492.9 L1887.0 493.3 L1890.0 494.2 L1893.0 492.6 L1896.0 491.7 L1899.0 491.0 L1902.0 490.9 L1905.0 491.0 L1908.0 492.5 L1911.0 493.0 L1914.0 493.3 L1917.0 490.7 L1920.0 489.0 L1923.0 490.1 L1926.0 491.3 L1929.0 490.5 L1932.0 490.3 L1935.0 488.3 L1938.0 488.2 L1941.0 489.7 L1944.0 490.3 L1947.0 490.6 L1950.0 491.1 L1953.0 488.9 L1956.0 487.1 L1959.0 486.1 L1962.0 486.5 L1965.0 487.2 L1968.0 488.4 L1971.0 488.3 L1974.0 487.9 L1977.0 487.9 L1980.0 486.9 L1983.0 486.5 L1986.0 484.5 L1989.0 485.6 L1992.0 484.4 L1995.0 485.8 L1998.0 485.6 L2001.0 484.4 L2004.0 483.0 L2007.0 482.4 L2010.0 483.2 L2013.0 483.8 L2016.0 482.2 L2019.0 481.0 L2022.0 481.6 L2025.0 482.1 L2028.0 481.7 L2031.0 480.8 L2034.0 481.4 L2037.0 479.8 L2040.0 479.6 L2043.0 480.0 L2046.0 481.7 L2049.0 481.6 L2052.0 482.2 L2055.0 481.2 L2058.0 479.7 L2061.0 478.8 L2064.0 480.4 L2067.0 480.5 L2070.0 479.2 L2073.0 477.3 L2076.0 477.7 L2079.0 478.4 L2082.0 477.9 L2085.0 477.0 L2088.0 477.6 L2091.0 478.8 L2094.0 477.1 L2097.0 475.4 L2100.0 475.3 L2103.0 475.4 L2106.0 476.2 L2109.0 475.0 L2112.0 476.1 L2115.0 476.5 L2118.0 475.9 L2121.0 474.5 L2124.0 476.0 L2127.0 474.7 L2130.0 475.5 L2133.0 474.0 L2136.0 472.9 L2139.0 473.9 L2142.0 473.0 L2145.0 474.4 L2148.0 473.7 L2151.0 472.2 L2154.0 471.3 L2157.0 471.3 L2160.0 472.0 L2163.0 473.2 L2166.0 471.3 L2169.0 470.9 L2172.0 469.9 L2175.0 471.7 L2178.0 470.0 L2181.0 468.6 L2184.0 467.7 L2187.0 468.2 L2190.0 469.9 L2193.0 470.9 L2196.0 470.8 L2199.0 471.6 L2202.0 471.7 L2205.0 469.8 L2208.0 468.1 L2211.0 469.4 L2214.0 469.4 L2217.0 467.1 L2220.0 467.6 L2223.0 466.9 L2226.0 466.4 L2229.0 465.9 L2232.0 464.9 L2235.0 463.7 L2238.0 463.8 L2241.0 464.0 L2244.0 466.0 L2247.0 464.4 L2250.0 466.0 L2253.0 464.5 L2256.0 464.0 L2259.0 465.0 L2262.0 465.6 L2265.0 464.6 L2268.0 462.7 L2271.0 462.8 L2271.0 463.5 L2271.0 981.7 L2268.0 981.7 L2264.0 980.6 L2260.0 977.7 L2258.0 982.3 L2255.0 983.1 L2253.0 982.8 L2250.0 986.4 L2248.0 982.1 L2244.0 985.9 L2240.0 986.7 L2236.0 983.8 L2234.0 987.3 L2231.0 986.6 L2228.0 986.2 L2226.0 986.6 L2223.0 982.4 L2220.0 985.4 L2218.0 989.7 L2216.0 986.0 L2212.0 986.2 L2208.0 988.9 L2206.0 989.8 L2203.0 989.1 L2200.0 987.5 L2197.0 988.0 L2194.0 988.7 L2191.0 989.9 L2189.0 990.8 L2187.0 987.8 L2184.0 992.2 L2182.0 992.6 L2180.0 989.3 L2177.0 993.3 L2174.0 991.2 L2172.0 989.7 L2169.0 990.5 L2166.0 989.9 L2164.0 992.9 L2161.0 994.3 L2157.0 994.0 L2154.0 985.3 L2150.0 991.6 L2146.0 994.9 L2144.0 995.1 L2141.0 994.1 L2138.0 987.0 L2135.0 987.1 L2132.0 996.2 L2128.0 985.9 L2124.0 994.3 L2121.0 996.3 L2119.0 994.4 L2115.0 995.0 L2112.0 998.5 L2109.0 996.5 L2107.0 995.8 L2104.0 997.1 L2102.0 1000.6 L2100.0 999.0 L2098.0 1000.7 L2095.0 999.6 L2091.0 999.9 L2087.0 998.1 L2083.0 1002.3 L2080.0 998.5 L2077.0 998.3 L2075.0 1001.7 L2071.0 1001.7 L2068.0 1002.2 L2065.0 1001.4 L2061.0 1002.2 L2059.0 1002.9 L2056.0 1002.4 L2052.0 1004.7 L2048.0 1001.4 L2044.0 1003.1 L2042.0 1001.6 L2039.0 1005.6 L2037.0 1005.7 L2034.0 995.6 L2032.0 1003.4 L2028.0 1004.2 L2025.0 1006.5 L2022.0 1003.7 L2019.0 1004.4 L2016.0 1008.4 L2013.0 1006.7 L2010.0 1007.4 L2007.0 1002.3 L2004.0 1008.2 L2001.0 1009.8 L1998.0 1006.2 L1995.0 1010.7 L1993.0 1007.3 L1989.0 1010.1 L1985.0 1011.8 L1982.0 1008.8 L1979.0 1008.3 L1977.0 1009.1 L1974.0 1011.1 L1971.0 1011.8 L1968.0 1009.2 L1964.0 1010.9 L1962.0 1009.7 L1960.0 1004.2 L1958.0 1012.0 L1954.0 1012.7 L1951.0 1011.9 L1948.0 1011.0 L1945.0 1014.1 L1943.0 1014.0 L1940.0 1013.1 L1938.0 1011.5 L1935.0 1014.5 L1931.0 1013.2 L1929.0 1008.3 L1926.0 1012.7 L1924.0 1015.7 L1921.0 1013.6 L1917.0 1017.3 L1914.0 1013.9 L1910.0 1009.4 L1906.0 1014.7 L1903.0 1015.7 L1900.0 1018.1 L1897.0 1018.7 L1893.0 1018.9 L1890.0 1017.3 L1887.0 1016.5 L1884.0 1017.7 L1881.0 1021.4 L1878.0 1017.9 L1875.0 1019.1 L1871.0 1020.0 L1869.0 1022.1 L1866.0 1020.9 L1863.0 1020.3 L1860.0 1015.7 L1857.0 1020.6 L1855.0 1019.3 L1853.0 1022.8 L1851.0 1023.8 L1848.0 1023.9 L1846.0 1024.4 L1842.0 1020.9 L1840.0 1020.7 L1838.0 1024.8 L1835.0 1023.4 L1832.0 1022.8 L1829.0 1021.7 L1826.0 1022.1 L1823.0 1026.0 L1819.0 1026.8 L1817.0 1020.5 L1815.0 1024.6 L1812.0 1026.7 L1809.0 1020.1 L1807.0 1023.7 L1803.0 1027.5 L1799.0 1027.4 L1796.0 1027.6 L1793.0 1029.7 L1790.0 1025.8 L1788.0 1027.9 L1786.0 1028.8 L1782.0 1030.7 L1780.0 1028.3 L1777.0 1027.5 L1774.0 1028.7 L1771.0 1031.8 L1769.0 1029.0 L1766.0 1031.9 L1763.0 1028.7 L1760.0 1031.0 L1756.0 1031.7 L1753.0 1030.1 L1750.0 1032.7 L1747.0 1032.3 L1744.0 1031.2 L1742.0 1030.6 L1739.0 1032.0 L1736.0 1034.0 L1733.0 1031.2 L1730.0 1032.0 L1728.0 1031.2 L1724.0 1035.0 L1721.0 1034.1 L1717.0 1032.2 L1713.0 1036.0 L1709.0 1037.1 L1706.0 1036.6 L1702.0 1035.7 L1700.0 1038.2 L1696.0 1037.7 L1693.0 1038.7 L1691.0 1037.7 L1688.0 1039.4 L1686.0 1037.0 L1684.0 1035.5 L1681.0 1039.1 L1678.0 1038.4 L1674.0 1038.9 L1672.0 1039.6 L1669.0 1038.7 L1666.0 1041.9 L1664.0 1040.8 L1662.0 1038.6 L1660.0 1037.6 L1656.0 1041.1 L1653.0 1038.7 L1649.0 1043.3 L1646.0 1043.8 L1642.0 1040.3 L1640.0 1043.5 L1636.0 1043.0 L1633.0 1041.9 L1629.0 1042.8 L1626.0 1044.7 L1623.0 1042.4 L1620.0 1046.2 L1616.0 1041.7 L1613.0 1043.8 L1610.0 1044.7 L1608.0 1045.7 L1605.0 1039.0 L1602.0 1046.9 L1599.0 1043.4 L1597.0 1046.8 L1595.0 1046.6 L1592.0 1047.8 L1589.0 1045.3 L1586.0 1047.6 L1584.0 1048.1 L1581.0 1046.0 L1579.0 1048.9 L1577.0 1048.2 L1574.0 1049.8 L1572.0 1048.3 L1568.0 1047.5 L1566.0 1047.2 L1562.0 1050.1 L1559.0 1049.2 L1557.0 1048.2 L1555.0 1040.1 L1552.0 1051.8 L1548.0 1050.5 L1546.0 1049.4 L1543.0 1050.3 L1540.0 1050.6 L1537.0 1050.6 L1534.0 1052.2 L1531.0 1051.5 L1528.0 1052.5 L1525.0 1055.2 L1523.0 1052.1 L1520.0 1051.4 L1518.0 1047.5 L1514.0 1049.3 L1512.0 1051.8 L1508.0 1054.9 L1504.0 1055.4 L1502.0 1053.5 L1498.0 1056.0 L1495.0 1057.5 L1493.0 1057.9 L1490.0 1058.0 L1487.0 1056.7 L1484.0 1052.0 L1482.0 1056.8 L1480.0 1058.4 L1476.0 1051.8 L1473.0 1057.6 L1471.0 1055.8 L1468.0 1058.8 L1466.0 1059.3 L1464.0 1057.2 L1460.0 1056.5 L1457.0 1059.0 L1455.0 1058.7 L1452.0 1060.8 L1448.0 1059.9 L1445.0 1059.2 L1443.0 1058.1 L1441.0 1060.2 L1438.0 1063.3 L1436.0 1060.3 L1432.0 1061.4 L1430.0 1061.1 L1426.0 1062.0 L1422.0 1064.8 L1419.0 1052.9 L1416.0 1064.9 L1414.0 1064.9 L1411.0 1064.0 L1408.0 1063.2 L1405.0 1065.7 L1403.0 1063.4 L1400.0 1065.0 L1398.0 1063.7 L1395.0 1063.9 L1391.0 1064.7 L1387.0 1067.3 L1384.0 1059.8 L1381.0 1068.5 L1379.0 1068.1 L1377.0 1067.0 L1375.0 1065.6 L1372.0 1069.2 L1368.0 1067.7 L1365.0 1066.4 L1362.0 1067.5 L1358.0 1070.0 L1355.0 1066.6 L1352.0 1071.0 L1348.0 1071.0 L1346.0 1068.9 L1344.0 1067.9 L1340.0 1070.7 L1337.0 1070.2 L1334.0 1065.4 L1331.0 1067.3 L1328.0 1073.3 L1326.0 1073.4 L1324.0 1072.8 L1321.0 1072.4 L1317.0 1070.9 L1314.0 1075.1 L1311.0 1071.4 L1308.0 1071.1 L1306.0 1067.5 L1302.0 1071.6 L1300.0 1076.3 L1297.0 1074.8 L1295.0 1074.4 L1291.0 1073.0 L1288.0 1074.9 L1286.0 1075.2 L1284.0 1073.9 L1282.0 1077.9 L1279.0 1077.4 L1275.0 1078.1 L1271.0 1079.2 L1268.0 1077.0 L1265.0 1076.5 L1262.0 1078.7 L1259.0 1077.6 L1255.0 1077.9 L1252.0 1078.9 L1249.0 1077.7 L1245.0 1081.3 L1243.0 1080.1 L1240.0 1080.0 L1238.0 1078.7 L1235.0 1079.9 L1232.0 1082.6 L1229.0 1080.3 L1226.0 1079.3 L1222.0 1083.0 L1219.0 1081.4 L1216.0 1080.4 L1212.0 1081.0 L1209.0 1084.4 L1206.0 1084.0 L1204.0 1084.8 L1200.0 1084.8 L1197.0 1084.4 L1194.0 1084.5 L1192.0 1085.2 L1190.0 1084.5 L1187.0 1086.4 L1183.0 1083.1 L1179.0 1083.7 L1176.0 1084.2 L1173.0 1083.7 L1171.0 1085.5 L1169.0 1084.5 L1166.0 1088.1 L1164.0 1085.9 L1160.0 1079.2 L1157.0 1085.2 L1154.0 1088.4 L1151.0 1086.9 L1149.0 1085.9 L1146.0 1087.4 L1142.0 1089.1 L1140.0 1088.4 L1137.0 1087.2 L1133.0 1090.3 L1131.0 1088.1 L1128.0 1090.5 L1125.0 1088.8 L1121.0 1089.3 L1117.0 1092.3 L1115.0 1091.0 L1112.0 1091.0 L1109.0 1093.2 L1106.0 1094.0 L1104.0 1091.7 L1101.0 1091.6 L1099.0 1092.4 L1097.0 1092.4 L1095.0 1092.1 L1091.0 1095.2 L1089.0 1095.5 L1087.0 1091.9 L1084.0 1096.6 L1082.0 1095.3 L1080.0 1094.5 L1077.0 1093.2 L1074.0 1093.5 L1071.0 1093.6 L1068.0 1095.7 L1065.0 1098.3 L1062.0 1095.3 L1059.0 1098.5 L1056.0 1097.9 L1053.0 1097.2 L1049.0 1097.6 L1046.0 1097.2 L1042.0 1100.8 L1039.0 1097.0 L1036.0 1099.3 L1033.0 1101.2 L1031.0 1100.8 L1029.0 1100.2 L1027.0 1099.9 L1024.0 1101.3 L1021.0 1102.9 L1018.0 1100.3 L1015.0 1101.9 L1012.0 1102.9 L1008.0 1100.5 L1005.0 1101.5 L1001.0 1103.6 L997.0 1102.2 L994.0 1102.6 L992.0 1102.6 L988.0 1102.5 L985.0 1103.3 L981.0 1097.5 L977.0 1104.0 L974.0 1106.4 L970.0 1105.6 L967.0 1104.6 L964.0 1108.1 L960.0 1108.1 L958.0 1104.1 L954.0 1105.8 L951.0 1107.2 L947.0 1106.9 L944.0 1104.1 L941.0 1106.0 L937.0 1109.1 L934.0 1110.5 L930.0 1108.5 L927.0 1110.3 L925.0 1107.8 L923.0 1111.3 L921.0 1110.7 L918.0 1111.8 L914.0 1111.2 L911.0 1110.8 L908.0 1108.9 L906.0 1110.6 L904.0 1109.4 L902.0 1113.8 L900.0 1112.3 L897.0 1110.5 L894.0 1114.3 L891.0 1113.1 L889.0 1111.1 L887.0 1102.0 L883.0 1115.1 L881.0 1114.4 L878.0 1112.2 L875.0 1112.6 L873.0 1116.2 L871.0 1113.8 L867.0 1112.6 L863.0 1115.8 L859.0 1113.5 L856.0 1113.7 L853.0 1115.4 L849.0 1115.7 L845.0 1112.4 L842.0 1116.9 L838.0 1115.3 L836.0 1116.3 L833.0 1115.7 L829.0 1118.9 L825.0 1118.1 L823.0 1118.7 L820.0 1118.9 L817.0 1111.4 L814.0 1121.5 L811.0 1118.2 L808.0 1120.8 L805.0 1119.1 L801.0 1120.6 L798.0 1120.5 L795.0 1120.4 L792.0 1124.3 L788.0 1122.9 L785.0 1122.2 L782.0 1124.9 L780.0 1123.4 L776.0 1121.2 L773.0 1122.9 L771.0 1125.0 L768.0 1123.4 L766.0 1122.4 L763.0 1123.3 L761.0 1123.6 L757.0 1124.3 L753.0 1127.1 L750.0 1128.2 L747.0 1127.2 L744.0 1121.4 L740.0 1125.7 L737.0 1129.3 L734.0 1125.6 L731.0 1125.6 L728.0 1127.8 L725.0 1122.9 L722.0 1129.0 L718.0 1130.1 L714.0 1130.3 L712.0 1127.7 L709.0 1131.9 L707.0 1132.5 L705.0 1131.7 L702.0 1131.8 L698.0 1133.4 L695.0 1130.1 L691.0 1131.3 L687.0 1132.0 L684.0 1131.9 L681.0 1132.5 L678.0 1131.2 L675.0 1133.3 L673.0 1131.6 L671.0 1132.0 L668.0 1134.7 L664.0 1132.8 L660.0 1132.7 L657.0 1133.0 L654.0 1134.3 L650.0 1136.8 L647.0 1136.3 L643.0 1137.8 L640.0 1134.0 L638.0 1134.4 L635.0 1135.0 L633.0 1135.4 L630.0 1136.3 L628.0 1135.1 L624.0 1135.9 L621.0 1136.3 L617.0 1138.5 L614.0 1136.4 L611.0 1139.8 L608.0 1132.7 L606.0 1141.0 L603.0 1139.3 L600.0 1138.2 L597.0 1141.7 L594.0 1141.5 L591.0 1140.4 L588.0 1143.0 L586.0 1139.2 L582.0 1143.9 L578.0 1141.9 L575.0 1143.1 L572.0 1143.8 L568.0 1143.9 L566.0 1145.2 L563.0 1136.8 L559.0 1139.0 L555.0 1143.4 L552.0 1146.8 L549.0 1142.5 L546.0 1145.6 L543.0 1145.7 L540.0 1148.2 L538.0 1140.6 L535.0 1146.7 L532.0 1146.5 L529.0 1148.7 L527.0 1148.8 L523.0 1148.4 L520.0 1148.0 L517.0 1148.2 L513.0 1147.2 L510.0 1149.0 L507.0 1149.7 L504.0 1150.3 L500.0 1148.3 L498.0 1151.0 L496.0 1151.8 L492.0 1148.6 L490.0 1151.2 L488.0 1150.6 L485.0 1153.4 L481.0 1152.8 L479.0 1147.9 L476.0 1151.7 L473.0 1151.8 L470.0 1152.8 L467.0 1151.1 L464.0 1154.6 L462.0 1154.9 L459.0 1153.6 L456.0 1148.3 L454.0 1153.3 L452.0 1151.9 L449.0 1153.2 L445.0 1152.5 L441.0 1149.6 L438.0 1153.9 L435.0 1157.7 L432.0 1156.5 L429.0 1153.6 L426.0 1156.6 L424.0 1154.2 L420.0 1158.9 L416.0 1157.1 L414.0 1157.1 L411.0 1160.0 L409.0 1156.8 L405.0 1157.8 L402.0 1158.0 L398.0 1152.7 L396.0 1160.1 L393.0 1158.6 L390.0 1159.3 L387.0 1156.4 L385.0 1162.4 L383.0 1160.0 L380.0 1162.9 L378.0 1160.2 L375.0 1161.5 L372.0 1163.6 L369.0 1159.8 L366.0 1164.2 L363.0 1164.6 L360.0 1161.1 L356.0 1162.8 L353.0 1165.7 L350.0 1162.8 L347.0 1162.0 L345.0 1164.7 L342.0 1167.0 L338.0 1166.1 L334.0 1164.4 L331.0 1165.9 L328.0 1161.3 L324.0 1164.8 L322.0 1165.0 L319.0 1159.4 L316.0 1163.5 L314.0 1167.9 L311.0 1166.6 L309.0 1168.4 L306.0 1166.4 L304.0 1166.1 L300.0 1171.0 L296.0 1165.9 L293.0 1167.0 L290.0 1163.5 L288.0 1169.0 L285.0 1170.2 L282.0 1171.0 L279.0 1169.2 L275.0 1172.2 L272.0 1172.0 L268.0 1171.9 L265.0 1164.2 L262.0 1170.4 L258.0 1173.0 L256.0 1173.0 L253.0 1173.0 L250.0 1173.0 L247.0 1173.0 L244.0 1173.0 L241.0 1173.0 L237.0 1173.0 L235.0 1172.7 L233.0 1173.0 L230.0 1173.0 L226.0 1173.0 L223.0 1166.2 L220.0 1173.0 L216.0 1173.0 L212.0 1173.0 L209.0 1173.0 L206.0 1173.0 L203.0 1173.0 L199.0 1173.0 L196.0 1173.0 L192.0 1169.6 L189.0 1173.0 L185.0 1173.0 L182.0 1173.0 L179.0 1173.0 L176.0 1173.0 L173.0 1173.0 L169.0 1173.0 L165.0 1173.0 L163.0 1173.0 L161.0 1173.0 L158.0 1173.0 L156.0 1173.0 L154.0 1173.0 L150.0 1173.0 L148.0 1173.0 L145.0 1173.0 L143.0 1173.0 L141.0 1173.0 L138.0 1173.0 L135.0 1173.0 L133.0 1173.0 L130.0 1173.0 L128.0 1173.0 L125.0 1173.0 L122.0 1173.0 L118.0 1173.0 L114.0 1173.0 L112.0 1173.0 L109.0 1173.0 L106.0 1173.0 L104.0 1173.0 L102.0 1173.0 L98.0 1173.0 L96.0 1173.0 L92.0 1173.0 L88.0 1173.0 L84.0 1173.0 L81.0 1173.0 L78.0 1173.0 L75.0 1173.0 L72.0 1173.0 L69.0 1173.0 L66.0 1173.0 L63.0 1173.0 L60.0 1173.0 L56.0 1173.0 L54.0 1173.0 L50.0 1173.0 L47.0 1173.0 L44.0 1173.0 L40.0 1173.0 L38.0 1173.0 L35.0 1173.0 L32.0 1173.0 L29.0 1173.0 L25.0 1173.0 L23.0 1173.0 L20.0 1173.0 L17.0 1173.0 L13.0 1173.0 L9.0 1173.0 L6.0 1173.0 L2.0 1173.0 L0.0 1173.0Z"/></clipPath><filter id="tex" filterUnits="userSpaceOnUse" x="380" y="440" width="2900" height="733" color-interpolation-filters="sRGB">
<feTurbulence type="fractalNoise" baseFrequency="0.36 0.27" numOctaves="2" seed="4" result="n"/>
<feDiffuseLighting in="n" surfaceScale="1.2" diffuseConstant="1.1" lighting-color="#fff" result="l0"><feDistantLight azimuth="200" elevation="60"/></feDiffuseLighting>
<feGaussianBlur in="l0" stdDeviation="0.6" result="l"/>
<feComposite in="SourceGraphic" in2="l" operator="arithmetic" k1="1.08" k2="0" k3="0" k4="0"/>
</filter>
<filter id="tex2" filterUnits="userSpaceOnUse" x="380" y="440" width="2900" height="733" color-interpolation-filters="sRGB">
<feTurbulence type="fractalNoise" baseFrequency="0.2 0.15" numOctaves="2" seed="9" result="n"/>
<feDiffuseLighting in="n" surfaceScale="3.2" diffuseConstant="1.1" lighting-color="#fff" result="l0"><feDistantLight azimuth="200" elevation="60"/></feDiffuseLighting>
<feGaussianBlur in="l0" stdDeviation="0.7" result="l"/>
<feComposite in="SourceGraphic" in2="l" operator="arithmetic" k1="1.08" k2="0" k3="0" k4="0"/>
</filter>
<filter id="tex3" filterUnits="userSpaceOnUse" x="380" y="440" width="2900" height="360" color-interpolation-filters="sRGB">
<feTurbulence type="fractalNoise" baseFrequency="0.3 0.13" numOctaves="2" seed="15" result="n"/>
<feDiffuseLighting in="n" surfaceScale="3.4" diffuseConstant="1.05" lighting-color="#fff" result="l0"><feDistantLight azimuth="200" elevation="58"/></feDiffuseLighting>
<feGaussianBlur in="l0" stdDeviation="0.6" result="l"/>
<feComposite in="SourceGraphic" in2="l" operator="arithmetic" k1="1.0" k2="0" k3="0" k4="0"/>
</filter>
<linearGradient id="mg" gradientUnits="userSpaceOnUse" x1="1100" y1="560" x2="1150" y2="1120"><stop offset="0" stop-color="#000"/><stop offset="0.4" stop-color="#2a2a2a"/><stop offset="1" stop-color="#fff"/></linearGradient>
<mask id="mk" maskUnits="userSpaceOnUse" x="0" y="0" width="2271" height="1173"><rect x="0" y="0" width="2271" height="1173" fill="url(#mg)"/></mask>
<linearGradient id="mg3" gradientUnits="userSpaceOnUse" x1="0" y1="639.5" x2="9.3" y2="759"><stop offset="0" stop-color="#fff"/><stop offset="0.45" stop-color="#aaa"/><stop offset="1" stop-color="#000"/></linearGradient>
<mask id="mk3" maskUnits="userSpaceOnUse" x="0" y="0" width="2271" height="1173"><rect x="0" y="0" width="2271" height="1173" fill="url(#mg3)"/></mask>
</defs><g clip-path="url(#tc)"><g transform="skewX(-38)"><g filter="url(#tex)"><g transform="skewX(38)"><rect x="-0.5" y="626.8" width="57.8" height="548.2" fill="url(#s0)"/><rect x="56.3" y="622.4" width="57.8" height="552.6" fill="url(#s1)"/><rect x="113.0" y="618.0" width="57.8" height="557.0" fill="url(#s2)"/><rect x="169.8" y="613.6" width="57.8" height="561.4" fill="url(#s3)"/><rect x="226.6" y="609.2" width="57.8" height="565.8" fill="url(#s4)"/><rect x="283.4" y="604.8" width="57.8" height="570.2" fill="url(#s5)"/><rect x="340.2" y="600.5" width="57.8" height="574.5" fill="url(#s6)"/><rect x="396.9" y="596.1" width="57.8" height="578.9" fill="url(#s7)"/><rect x="453.7" y="591.7" width="57.8" height="583.3" fill="url(#s8)"/><rect x="510.5" y="587.3" width="57.8" height="587.7" fill="url(#s9)"/><rect x="567.2" y="582.9" width="57.8" height="592.1" fill="url(#s10)"/><rect x="624.0" y="578.5" width="57.8" height="596.5" fill="url(#s11)"/><rect x="680.8" y="574.1" width="57.8" height="600.9" fill="url(#s12)"/><rect x="737.6" y="569.7" width="57.8" height="605.3" fill="url(#s13)"/><rect x="794.3" y="565.3" width="57.8" height="609.7" fill="url(#s14)"/><rect x="851.1" y="560.9" width="57.8" height="614.1" fill="url(#s15)"/><rect x="907.9" y="556.5" width="57.8" height="618.5" fill="url(#s16)"/><rect x="964.7" y="552.1" width="57.8" height="622.9" fill="url(#s17)"/><rect x="1021.5" y="547.7" width="57.8" height="627.3" fill="url(#s18)"/><rect x="1078.2" y="543.4" width="57.8" height="631.6" fill="url(#s19)"/><rect x="1135.0" y="539.0" width="57.8" height="636.0" fill="url(#s20)"/><rect x="1191.8" y="534.6" width="57.8" height="640.4" fill="url(#s21)"/><rect x="1248.6" y="530.2" width="57.8" height="644.8" fill="url(#s22)"/><rect x="1305.3" y="525.8" width="57.8" height="649.2" fill="url(#s23)"/><rect x="1362.1" y="521.4" width="57.8" height="653.6" fill="url(#s24)"/><rect x="1418.9" y="517.0" width="57.8" height="658.0" fill="url(#s25)"/><rect x="1475.7" y="512.6" width="57.8" height="662.4" fill="url(#s26)"/><rect x="1532.4" y="508.2" width="57.8" height="666.8" fill="url(#s27)"/><rect x="1589.2" y="503.8" width="57.8" height="671.2" fill="url(#s28)"/><rect x="1646.0" y="499.4" width="57.8" height="675.6" fill="url(#s29)"/><rect x="1702.8" y="495.0" width="57.8" height="680.0" fill="url(#s30)"/><rect x="1759.5" y="490.6" width="57.8" height="684.4" fill="url(#s31)"/><rect x="1816.3" y="486.2" width="57.8" height="688.8" fill="url(#s32)"/><rect x="1873.1" y="481.9" width="57.8" height="693.1" fill="url(#s33)"/><rect x="1929.8" y="477.5" width="57.8" height="697.5" fill="url(#s34)"/><rect x="1986.6" y="473.1" width="57.8" height="701.9" fill="url(#s35)"/><rect x="2043.4" y="468.7" width="57.8" height="706.3" fill="url(#s36)"/><rect x="2100.2" y="464.3" width="57.8" height="710.7" fill="url(#s37)"/><rect x="2156.9" y="459.9" width="57.8" height="715.1" fill="url(#s38)"/><rect x="2213.7" y="455.5" width="57.8" height="719.5" fill="url(#s39)"/></g></g></g><g mask="url(#mk)"><g transform="skewX(-38)"><g filter="url(#tex2)"><g transform="skewX(38)"><rect x="-0.5" y="626.8" width="57.8" height="548.2" fill="url(#s0)"/><rect x="56.3" y="622.4" width="57.8" height="552.6" fill="url(#s1)"/><rect x="113.0" y="618.0" width="57.8" height="557.0" fill="url(#s2)"/><rect x="169.8" y="613.6" width="57.8" height="561.4" fill="url(#s3)"/><rect x="226.6" y="609.2" width="57.8" height="565.8" fill="url(#s4)"/><rect x="283.4" y="604.8" width="57.8" height="570.2" fill="url(#s5)"/><rect x="340.2" y="600.5" width="57.8" height="574.5" fill="url(#s6)"/><rect x="396.9" y="596.1" width="57.8" height="578.9" fill="url(#s7)"/><rect x="453.7" y="591.7" width="57.8" height="583.3" fill="url(#s8)"/><rect x="510.5" y="587.3" width="57.8" height="587.7" fill="url(#s9)"/><rect x="567.2" y="582.9" width="57.8" height="592.1" fill="url(#s10)"/><rect x="624.0" y="578.5" width="57.8" height="596.5" fill="url(#s11)"/><rect x="680.8" y="574.1" width="57.8" height="600.9" fill="url(#s12)"/><rect x="737.6" y="569.7" width="57.8" height="605.3" fill="url(#s13)"/><rect x="794.3" y="565.3" width="57.8" height="609.7" fill="url(#s14)"/><rect x="851.1" y="560.9" width="57.8" height="614.1" fill="url(#s15)"/><rect x="907.9" y="556.5" width="57.8" height="618.5" fill="url(#s16)"/><rect x="964.7" y="552.1" width="57.8" height="622.9" fill="url(#s17)"/><rect x="1021.5" y="547.7" width="57.8" height="627.3" fill="url(#s18)"/><rect x="1078.2" y="543.4" width="57.8" height="631.6" fill="url(#s19)"/><rect x="1135.0" y="539.0" width="57.8" height="636.0" fill="url(#s20)"/><rect x="1191.8" y="534.6" width="57.8" height="640.4" fill="url(#s21)"/><rect x="1248.6" y="530.2" width="57.8" height="644.8" fill="url(#s22)"/><rect x="1305.3" y="525.8" width="57.8" height="649.2" fill="url(#s23)"/><rect x="1362.1" y="521.4" width="57.8" height="653.6" fill="url(#s24)"/><rect x="1418.9" y="517.0" width="57.8" height="658.0" fill="url(#s25)"/><rect x="1475.7" y="512.6" width="57.8" height="662.4" fill="url(#s26)"/><rect x="1532.4" y="508.2" width="57.8" height="666.8" fill="url(#s27)"/><rect x="1589.2" y="503.8" width="57.8" height="671.2" fill="url(#s28)"/><rect x="1646.0" y="499.4" width="57.8" height="675.6" fill="url(#s29)"/><rect x="1702.8" y="495.0" width="57.8" height="680.0" fill="url(#s30)"/><rect x="1759.5" y="490.6" width="57.8" height="684.4" fill="url(#s31)"/><rect x="1816.3" y="486.2" width="57.8" height="688.8" fill="url(#s32)"/><rect x="1873.1" y="481.9" width="57.8" height="693.1" fill="url(#s33)"/><rect x="1929.8" y="477.5" width="57.8" height="697.5" fill="url(#s34)"/><rect x="1986.6" y="473.1" width="57.8" height="701.9" fill="url(#s35)"/><rect x="2043.4" y="468.7" width="57.8" height="706.3" fill="url(#s36)"/><rect x="2100.2" y="464.3" width="57.8" height="710.7" fill="url(#s37)"/><rect x="2156.9" y="459.9" width="57.8" height="715.1" fill="url(#s38)"/><rect x="2213.7" y="455.5" width="57.8" height="719.5" fill="url(#s39)"/></g></g></g></g><g mask="url(#mk3)"><g transform="skewX(-38)"><g filter="url(#tex3)"><g transform="skewX(38)"><rect x="-0.5" y="626.8" width="57.8" height="548.2" fill="url(#s0)"/><rect x="56.3" y="622.4" width="57.8" height="552.6" fill="url(#s1)"/><rect x="113.0" y="618.0" width="57.8" height="557.0" fill="url(#s2)"/><rect x="169.8" y="613.6" width="57.8" height="561.4" fill="url(#s3)"/><rect x="226.6" y="609.2" width="57.8" height="565.8" fill="url(#s4)"/><rect x="283.4" y="604.8" width="57.8" height="570.2" fill="url(#s5)"/><rect x="340.2" y="600.5" width="57.8" height="574.5" fill="url(#s6)"/><rect x="396.9" y="596.1" width="57.8" height="578.9" fill="url(#s7)"/><rect x="453.7" y="591.7" width="57.8" height="583.3" fill="url(#s8)"/><rect x="510.5" y="587.3" width="57.8" height="587.7" fill="url(#s9)"/><rect x="567.2" y="582.9" width="57.8" height="592.1" fill="url(#s10)"/><rect x="624.0" y="578.5" width="57.8" height="596.5" fill="url(#s11)"/><rect x="680.8" y="574.1" width="57.8" height="600.9" fill="url(#s12)"/><rect x="737.6" y="569.7" width="57.8" height="605.3" fill="url(#s13)"/><rect x="794.3" y="565.3" width="57.8" height="609.7" fill="url(#s14)"/><rect x="851.1" y="560.9" width="57.8" height="614.1" fill="url(#s15)"/><rect x="907.9" y="556.5" width="57.8" height="618.5" fill="url(#s16)"/><rect x="964.7" y="552.1" width="57.8" height="622.9" fill="url(#s17)"/><rect x="1021.5" y="547.7" width="57.8" height="627.3" fill="url(#s18)"/><rect x="1078.2" y="543.4" width="57.8" height="631.6" fill="url(#s19)"/><rect x="1135.0" y="539.0" width="57.8" height="636.0" fill="url(#s20)"/><rect x="1191.8" y="534.6" width="57.8" height="640.4" fill="url(#s21)"/><rect x="1248.6" y="530.2" width="57.8" height="644.8" fill="url(#s22)"/><rect x="1305.3" y="525.8" width="57.8" height="649.2" fill="url(#s23)"/><rect x="1362.1" y="521.4" width="57.8" height="653.6" fill="url(#s24)"/><rect x="1418.9" y="517.0" width="57.8" height="658.0" fill="url(#s25)"/><rect x="1475.7" y="512.6" width="57.8" height="662.4" fill="url(#s26)"/><rect x="1532.4" y="508.2" width="57.8" height="666.8" fill="url(#s27)"/><rect x="1589.2" y="503.8" width="57.8" height="671.2" fill="url(#s28)"/><rect x="1646.0" y="499.4" width="57.8" height="675.6" fill="url(#s29)"/><rect x="1702.8" y="495.0" width="57.8" height="680.0" fill="url(#s30)"/><rect x="1759.5" y="490.6" width="57.8" height="684.4" fill="url(#s31)"/><rect x="1816.3" y="486.2" width="57.8" height="688.8" fill="url(#s32)"/><rect x="1873.1" y="481.9" width="57.8" height="693.1" fill="url(#s33)"/><rect x="1929.8" y="477.5" width="57.8" height="697.5" fill="url(#s34)"/><rect x="1986.6" y="473.1" width="57.8" height="701.9" fill="url(#s35)"/><rect x="2043.4" y="468.7" width="57.8" height="706.3" fill="url(#s36)"/><rect x="2100.2" y="464.3" width="57.8" height="710.7" fill="url(#s37)"/><rect x="2156.9" y="459.9" width="57.8" height="715.1" fill="url(#s38)"/><rect x="2213.7" y="455.5" width="57.8" height="719.5" fill="url(#s39)"/></g></g></g></g></g><path d="M1027 582 L1071 864M1057 578 L1090 779M419 627 L426 838M1801 504 L1842 636M206 656 L204 882M95 671 L86 963M1485 549 L1509 647M34 658 L31 732M432 615 L434 683M1054 575 L1095 837M1179 574 L1212 754M1504 541 L1536 668M2266 504 L2370 765M1607 527 L1638 643M656 591 L676 835M909 603 L929 755M2176 505 L2199 565M476 639 L484 812M2226 483 L2257 560M1429 560 L1459 684M198 637 L195 929M1722 511 L1756 630M229 624 L228 875M404 630 L409 798M433 635 L436 726M1462 531 L1500 692M483 613 L497 906M1825 510 L1909 783M479 618 L490 883M1458 530 L1529 828M484 612 L496 858M747 593 L755 671M205 647 L204 765M1366 548 L1403 717M2178 490 L2254 688M1968 494 L2001 591M2063 512 L2106 632M431 635 L441 921M446 643 L457 914M1371 550 L1389 635M88 671 L84 788M1600 526 L1669 783M1355 546 L1377 648M1636 515 L1667 630M1270 575 L1312 782M636 627 L645 736M38 647 L31 814M137 636 L134 784M1299 544 L1330 691M2023 522 L2100 740M1570 541 L1594 635M80 634 L70 912M1592 555 L1609 620M1445 547 L1500 782M724 623 L732 701M1240 573 L1294 849M1674 538 L1744 788M2078 493 L2159 717M2046 516 L2103 676M1795 535 L1856 732M1419 545 L1465 745M1383 535 L1431 749M2256 500 L2349 735M882 600 L907 800M1000 595 L1012 675M1704 509 L1762 713M1092 564 L1130 792M1129 576 L1178 857M581 595 L590 727M1540 528 L1566 629M2057 506 L2116 673M2025 496 L2102 715M451 622 L461 875M2076 514 L2131 666M1324 549 L1344 642M1127 585 L1173 849M1615 552 L1649 679M384 628 L387 754M486 618 L496 828M1122 565 L1167 826M2230 485 L2261 563M72 669 L69 739M1609 538 L1645 672M1798 501 L1826 594M1033 560 L1073 819M539 603 L543 674M1429 547 L1478 758M1488 556 L1559 846M1554 527 L1599 701M406 608 L411 782" stroke="#000" stroke-opacity="0.07" stroke-width="2" fill="none"/><path d="M12.2 1173.0 L20.9 1144.5 L15.1 1173.0ZM20.9 1173.0 L32.4 1133.3 L23.8 1173.0ZM36.7 1173.0 L41.3 1157.7 L38.3 1173.0ZM60.2 1173.0 L67.0 1152.4 L63.8 1173.0ZM69.8 1173.0 L74.6 1158.3 L72.5 1173.0ZM96.2 1173.0 L103.5 1144.8 L97.9 1173.0ZM106.6 1173.0 L116.8 1135.3 L109.9 1173.0ZM131.0 1173.0 L134.3 1166.8 L134.8 1173.0ZM138.1 1173.0 L141.2 1165.6 L141.2 1173.0ZM149.5 1173.0 L157.1 1145.1 L152.8 1173.0ZM164.5 1173.0 L167.7 1162.7 L166.6 1173.0ZM182.9 1173.0 L185.9 1165.4 L185.8 1173.0ZM205.6 1173.0 L208.9 1160.8 L207.5 1173.0ZM220.9 1173.0 L225.4 1157.1 L223.7 1173.0ZM234.0 1173.0 L240.8 1140.8 L235.7 1173.0ZM240.0 1173.0 L245.6 1147.7 L241.8 1173.0ZM256.5 1173.0 L264.8 1135.7 L259.6 1173.0ZM273.3 1173.0 L275.7 1165.1 L275.3 1173.0ZM284.4 1172.9 L289.3 1153.7 L287.5 1172.9ZM294.7 1171.9 L298.0 1164.0 L298.7 1171.9ZM302.8 1171.1 L308.7 1146.3 L306.2 1171.1ZM321.3 1169.3 L325.4 1156.7 L325.5 1169.3ZM347.1 1167.0 L349.9 1157.8 L350.0 1167.0ZM359.7 1165.8 L363.2 1149.5 L361.9 1165.8ZM375.4 1164.3 L382.9 1124.6 L379.0 1164.3ZM390.7 1162.9 L393.6 1149.8 L392.9 1162.9ZM400.9 1161.9 L405.3 1138.8 L403.5 1161.9ZM423.6 1159.7 L427.2 1145.4 L427.1 1159.7ZM438.2 1158.3 L441.6 1144.5 L441.5 1158.3ZM462.8 1156.1 L466.9 1130.4 L465.0 1156.1ZM484.8 1153.9 L487.9 1140.3 L487.9 1153.9ZM498.2 1152.7 L503.0 1121.9 L501.2 1152.7ZM508.8 1151.7 L510.5 1144.6 L510.8 1151.7ZM527.9 1149.9 L531.3 1131.9 L531.2 1149.9ZM551.0 1147.7 L554.4 1124.5 L553.6 1147.7ZM576.5 1145.3 L578.1 1136.1 L578.3 1145.3ZM581.6 1144.8 L584.1 1136.6 L585.3 1144.8ZM588.1 1144.2 L589.8 1134.0 L590.0 1144.2ZM602.9 1142.7 L606.3 1123.0 L606.8 1142.7ZM621.3 1141.1 L623.2 1131.6 L623.8 1141.1ZM640.6 1139.2 L645.2 1089.6 L643.8 1139.2ZM656.5 1137.8 L657.8 1129.0 L658.1 1137.8ZM669.9 1136.5 L672.0 1127.5 L673.0 1136.5ZM692.6 1134.3 L694.8 1122.7 L696.0 1134.3ZM704.2 1133.3 L705.5 1126.7 L706.2 1133.3ZM723.3 1131.4 L725.9 1111.4 L727.0 1131.4ZM739.1 1130.0 L740.2 1120.3 L740.8 1130.0ZM755.8 1128.4 L757.7 1102.3 L758.2 1128.4ZM775.4 1126.5 L777.4 1076.9 L777.5 1126.5ZM792.7 1124.9 L794.4 1098.7 L795.2 1124.9ZM804.1 1123.8 L805.2 1102.7 L805.9 1123.8ZM808.5 1123.3 L810.9 1089.0 L812.6 1123.3ZM828.1 1121.5 L829.7 1087.8 L831.0 1121.5ZM851.9 1119.3 L852.8 1111.2 L853.7 1119.3ZM864.8 1118.0 L866.3 1106.3 L867.9 1118.0ZM878.1 1116.8 L879.0 1090.8 L880.4 1116.8ZM889.7 1115.6 L891.3 1086.3 L893.7 1115.6ZM908.7 1113.9 L910.0 1106.4 L911.6 1113.9ZM928.3 1112.0 L929.5 1096.8 L931.5 1112.0ZM948.6 1110.1 L950.1 1095.3 L952.6 1110.1ZM961.0 1108.9 L961.9 1077.7 L965.1 1108.9ZM987.8 1106.5 L988.6 1100.2 L989.9 1106.5ZM1011.1 1104.3 L1011.6 1095.3 L1013.1 1104.3ZM1026.2 1102.8 L1025.9 1072.8 L1029.0 1102.8ZM1032.9 1102.2 L1033.2 1089.6 L1035.0 1102.2ZM1043.3 1101.1 L1044.6 1089.5 L1047.4 1101.1ZM1054.4 1100.1 L1055.1 1079.0 L1058.5 1100.1ZM1078.7 1097.8 L1077.5 1061.0 L1081.8 1097.8ZM1089.0 1096.9 L1088.7 1075.1 L1091.6 1096.9ZM1102.0 1095.7 L1100.3 1059.3 L1104.3 1095.7ZM1110.1 1094.9 L1108.7 1066.6 L1111.9 1094.9ZM1134.6 1092.5 L1135.6 1082.5 L1138.3 1092.5ZM1159.6 1090.2 L1159.5 1074.6 L1162.5 1090.2ZM1164.8 1089.7 L1162.1 1051.9 L1167.0 1089.7ZM1168.0 1089.3 L1166.5 1053.7 L1172.1 1089.3ZM1177.0 1088.6 L1175.6 1063.3 L1179.5 1088.6ZM1184.4 1087.9 L1182.4 1060.9 L1186.1 1087.9ZM1192.2 1087.1 L1189.9 1055.2 L1194.5 1087.1ZM1209.2 1085.6 L1205.3 1044.5 L1210.8 1085.6ZM1224.9 1084.0 L1225.7 1074.8 L1228.7 1084.0ZM1251.1 1081.5 L1251.2 1070.7 L1254.0 1081.5ZM1266.7 1080.1 L1262.1 1033.6 L1269.6 1080.1ZM1288.7 1078.0 L1287.4 1060.9 L1290.7 1078.0ZM1299.2 1077.1 L1298.8 1067.9 L1301.0 1077.1ZM1303.7 1076.5 L1300.7 1042.1 L1307.4 1076.5ZM1316.6 1075.4 L1315.1 1059.4 L1318.3 1075.4ZM1331.4 1074.0 L1329.1 1052.2 L1333.3 1074.0ZM1355.8 1071.7 L1350.9 1033.7 L1357.9 1071.7ZM1363.9 1070.9 L1358.4 1029.0 L1366.3 1070.9ZM1372.7 1070.1 L1368.5 1036.9 L1375.2 1070.1ZM1388.4 1068.6 L1388.2 1060.1 L1390.9 1068.6ZM1402.2 1067.2 L1397.3 1027.5 L1406.2 1067.2ZM1421.5 1065.4 L1420.5 1050.9 L1424.8 1065.4ZM1439.4 1063.8 L1438.5 1051.9 L1442.0 1063.8ZM1464.1 1061.4 L1462.4 1045.9 L1466.7 1061.4ZM1481.3 1059.8 L1481.2 1051.2 L1484.5 1059.8ZM1489.1 1059.1 L1481.7 1015.3 L1491.8 1059.1ZM1497.6 1058.2 L1490.3 1013.2 L1501.2 1058.2ZM1518.6 1056.3 L1514.4 1030.9 L1520.8 1056.3ZM1535.0 1054.7 L1532.3 1033.3 L1538.8 1054.7ZM1546.9 1053.5 L1545.7 1039.2 L1550.9 1053.5ZM1572.1 1051.2 L1571.7 1041.6 L1575.6 1051.2ZM1592.7 1049.3 L1590.4 1033.0 L1595.7 1049.3ZM1616.9 1047.0 L1608.6 1008.0 L1618.9 1047.0ZM1634.7 1045.3 L1626.9 1006.2 L1638.2 1045.3ZM1652.9 1043.5 L1651.2 1029.3 L1656.6 1043.5ZM1662.2 1042.7 L1656.1 1012.7 L1665.2 1042.7ZM1676.5 1041.4 L1675.5 1032.6 L1679.0 1041.4ZM1689.7 1040.1 L1686.4 1020.8 L1693.2 1040.1ZM1716.4 1037.6 L1711.5 1016.0 L1718.1 1037.6ZM1736.3 1035.6 L1733.5 1017.8 L1740.5 1035.6ZM1745.2 1034.8 L1742.3 1019.0 L1748.2 1034.8ZM1765.6 1032.9 L1765.9 1027.2 L1769.6 1032.9ZM1773.2 1032.2 L1768.6 1011.7 L1775.8 1032.2ZM1790.5 1030.5 L1789.0 1019.2 L1794.1 1030.5ZM1803.1 1029.4 L1798.9 1010.2 L1805.9 1029.4ZM1810.1 1028.7 L1807.1 1014.8 L1812.5 1028.7ZM1833.0 1026.6 L1829.4 1011.8 L1834.9 1026.6ZM1852.9 1024.7 L1850.3 1011.1 L1856.1 1024.7ZM1871.3 1022.9 L1861.0 986.0 L1874.2 1022.9ZM1890.4 1021.1 L1889.2 1011.1 L1894.4 1021.1ZM1915.6 1018.8 L1903.2 978.1 L1917.7 1018.8ZM1921.9 1018.1 L1921.6 1011.5 L1925.6 1018.1ZM1927.4 1017.6 L1918.2 984.9 L1930.8 1017.6ZM1944.7 1016.0 L1934.6 982.0 L1947.7 1016.0ZM1960.6 1014.5 L1952.4 986.0 L1963.9 1014.5ZM1972.9 1013.3 L1967.4 993.5 L1975.7 1013.3ZM1991.2 1011.6 L1976.4 965.9 L1993.9 1011.6ZM1999.9 1010.8 L1987.3 970.4 L2003.5 1010.8ZM2024.5 1008.5 L2022.3 999.8 L2026.5 1008.5ZM2028.6 1008.1 L2024.1 992.5 L2031.0 1008.1ZM2037.5 1007.3 L2035.8 999.8 L2039.6 1007.3ZM2041.7 1006.9 L2037.8 993.4 L2043.9 1006.9ZM2047.6 1006.3 L2031.8 959.3 L2050.9 1006.3ZM2054.2 1005.6 L2052.9 997.6 L2057.6 1005.6ZM2070.7 1004.1 L2067.7 993.2 L2072.9 1004.1ZM2086.7 1002.6 L2084.0 991.3 L2089.8 1002.6ZM2108.4 1000.5 L2091.4 952.2 L2112.1 1000.5ZM2121.4 999.3 L2113.5 975.0 L2124.8 999.3ZM2145.1 997.1 L2138.5 977.0 L2148.0 997.1ZM2168.1 994.8 L2158.5 966.4 L2172.1 994.8ZM2174.2 994.3 L2167.9 974.7 L2177.6 994.3ZM2190.3 992.8 L2187.4 982.7 L2192.9 992.8ZM2204.5 991.4 L2199.6 975.3 L2208.2 991.4ZM2210.1 990.9 L2204.0 973.1 L2213.0 990.9ZM2232.6 988.8 L2228.1 975.9 L2234.6 988.8ZM2242.7 987.8 L2240.8 979.5 L2246.1 987.8ZM2266.4 985.6 L2265.2 978.5 L2270.3 985.6Z" fill="#000"/><path d="M967 1059h2.5v2.5h-2.5zM499 1132h2v2h-2zM112 1128h3v3h-3zM752 1002h1.5v1.5h-1.5zM968 984h1.5v1.5h-1.5zM498 1022h2v2h-2zM36 1158h2.5v2.5h-2.5zM568 1044h2.5v2.5h-2.5zM435 1110h2v2h-2zM1569 971h2v2h-2zM837 1103h2v2h-2zM656 1097h1.5v1.5h-1.5zM1993 898h2v2h-2zM746 1032h2v2h-2zM1637 898h3v3h-3zM623 1026h3v3h-3zM1739 919h1.5v1.5h-1.5zM1977 994h2.5v2.5h-2.5zM2217 915h3v3h-3zM484 1023h2.5v2.5h-2.5zM867 1104h2v2h-2zM1180 942h1.5v1.5h-1.5zM1711 912h1.5v1.5h-1.5zM1731 893h2v2h-2zM258 1097h2v2h-2zM1481 1038h2v2h-2zM940 1016h3v3h-3zM268 1071h2.5v2.5h-2.5zM1893 1015h2v2h-2zM1053 1083h2v2h-2zM1918 889h2v2h-2zM1478 1002h2v2h-2zM1435 1034h2v2h-2zM1801 903h2v2h-2zM104 1154h2v2h-2zM1146 944h1.5v1.5h-1.5zM398 1093h3v3h-3zM530 1013h2v2h-2zM1411 939h2v2h-2zM226 1164h2v2h-2zM938 1006h2.5v2.5h-2.5zM874 1083h2v2h-2zM1692 997h2v2h-2zM682 1014h2.5v2.5h-2.5zM1746 912h1.5v1.5h-1.5zM1402 1049h2.5v2.5h-2.5zM1048 1051h2v2h-2zM428 1097h1.5v1.5h-1.5zM1996 995h1.5v1.5h-1.5zM2043 939h2v2h-2zM1853 1008h3v3h-3zM1824 984h1.5v1.5h-1.5zM2239 916h1.5v1.5h-1.5zM1430 922h2.5v2.5h-2.5zM209 1085h3v3h-3zM1957 981h2.5v2.5h-2.5zM1700 916h2v2h-2zM1451 1056h2v2h-2zM161 1168h2v2h-2zM2082 950h3v3h-3zM597 1041h3v3h-3zM1689 944h3v3h-3zM121 1042h2v2h-2zM2014 927h2.5v2.5h-2.5zM664 1109h3v3h-3zM1075 1061h3v3h-3zM719 1070h2.5v2.5h-2.5zM1214 1045h2v2h-2zM466 1027h3v3h-3zM1199 1069h1.5v1.5h-1.5zM2139 876h2.5v2.5h-2.5zM963 1035h2v2h-2zM1141 952h3v3h-3zM1460 1004h1.5v1.5h-1.5zM1922 951h1.5v1.5h-1.5zM465 1082h1.5v1.5h-1.5zM1160 1020h2v2h-2zM1453 1015h2.5v2.5h-2.5zM596 1093h2.5v2.5h-2.5zM440 1111h2.5v2.5h-2.5zM950 1091h2v2h-2zM2111 943h2.5v2.5h-2.5zM1117 1029h2v2h-2zM141 1084h2v2h-2zM2177 923h3v3h-3zM135 1134h2v2h-2zM1958 880h2v2h-2zM393 1095h2v2h-2zM1351 1028h3v3h-3zM1922 939h3v3h-3zM1364 944h2.5v2.5h-2.5zM858 1010h1.5v1.5h-1.5zM2224 862h3v3h-3zM865 1058h2v2h-2zM918 1104h2v2h-2zM273 1120h3v3h-3zM1880 887h2v2h-2zM1815 928h2.5v2.5h-2.5zM1804 949h1.5v1.5h-1.5zM1841 1010h1.5v1.5h-1.5zM1704 1032h3v3h-3zM1307 945h3v3h-3zM1133 987h1.5v1.5h-1.5zM1037 1010h2.5v2.5h-2.5zM1850 987h3v3h-3zM1817 938h1.5v1.5h-1.5zM1750 993h3v3h-3zM606 1059h2v2h-2zM1304 1008h2v2h-2zM1771 1018h2.5v2.5h-2.5zM865 1015h2v2h-2zM713 1105h2v2h-2zM1716 929h2.5v2.5h-2.5zM65 1133h2v2h-2zM164 1044h2.5v2.5h-2.5zM2146 917h2.5v2.5h-2.5zM751 1008h2v2h-2zM177 1157h2v2h-2zM1241 1069h2v2h-2zM846 1026h3v3h-3zM2190 919h2.5v2.5h-2.5zM246 1099h2v2h-2zM202 1118h2.5v2.5h-2.5zM438 1124h2v2h-2zM630 1016h2v2h-2zM1472 939h2v2h-2zM1359 1008h2v2h-2zM1288 1064h2v2h-2zM1903 992h2v2h-2zM1989 974h1.5v1.5h-1.5zM1560 1025h2v2h-2zM2080 971h2.5v2.5h-2.5zM786 1027h2.5v2.5h-2.5zM1685 930h1.5v1.5h-1.5zM1225 950h2.5v2.5h-2.5zM1253 1017h2v2h-2zM2142 916h1.5v1.5h-1.5zM1318 963h1.5v1.5h-1.5zM598 1036h2v2h-2zM1632 914h3v3h-3zM2031 942h2v2h-2zM1162 961h3v3h-3zM1188 1053h1.5v1.5h-1.5zM592 1094h1.5v1.5h-1.5zM1800 930h2.5v2.5h-2.5zM1080 1081h1.5v1.5h-1.5zM1104 1037h2v2h-2zM557 1093h2v2h-2zM7 1165h2.5v2.5h-2.5zM2149 872h3v3h-3zM2130 860h2v2h-2zM595 994h3v3h-3zM511 1137h2v2h-2zM463 1056h2.5v2.5h-2.5zM715 1109h2v2h-2zM1470 951h2v2h-2zM681 1039h2v2h-2zM1968 952h2v2h-2zM1977 868h2v2h-2zM561 1030h3v3h-3zM1312 984h3v3h-3zM717 1000h1.5v1.5h-1.5zM1685 897h1.5v1.5h-1.5zM1813 901h2.5v2.5h-2.5zM1031 1028h3v3h-3zM992 1055h2v2h-2zM340 1145h3v3h-3zM1235 981h1.5v1.5h-1.5zM2143 991h2.5v2.5h-2.5zM727 1041h1.5v1.5h-1.5zM649 985h2v2h-2zM696 1104h2v2h-2zM157 1079h2v2h-2zM1008 1099h2.5v2.5h-2.5zM814 1093h2v2h-2zM1842 951h3v3h-3zM1844 982h2.5v2.5h-2.5zM1950 878h2v2h-2zM179 1162h2.5v2.5h-2.5zM1739 1012h3v3h-3zM2053 984h2.5v2.5h-2.5zM2222 853h2.5v2.5h-2.5zM707 1071h2v2h-2zM1183 1054h2v2h-2zM682 1062h2v2h-2zM1362 922h1.5v1.5h-1.5zM884 1029h2v2h-2zM1555 1009h1.5v1.5h-1.5zM474 1105h2.5v2.5h-2.5zM168 1121h2.5v2.5h-2.5zM365 1039h2.5v2.5h-2.5zM44 1049h2.5v2.5h-2.5zM925 963h2.5v2.5h-2.5zM1556 1035h2v2h-2zM317 1113h1.5v1.5h-1.5zM2248 921h2v2h-2zM297 1045h3v3h-3zM2079 777h2v2h-2zM223 738h1.5v1.5h-1.5zM1634 588h2v2h-2zM593 838h1.5v1.5h-1.5zM959 935h1.2v1.2h-1.2zM987 945h1.2v1.2h-1.2zM695 803h2v2h-2zM1043 639h2v2h-2zM1630 742h1.5v1.5h-1.5zM1616 742h1.2v1.2h-1.2zM1362 599h1.2v1.2h-1.2zM1091 863h1.2v1.2h-1.2zM1936 661h1.2v1.2h-1.2zM772 960h1.2v1.2h-1.2zM1963 774h2v2h-2zM328 776h1.2v1.2h-1.2zM1010 650h1.5v1.5h-1.5zM142 733h1.2v1.2h-1.2zM298 985h2v2h-2zM1821 717h1.5v1.5h-1.5zM1015 804h1.2v1.2h-1.2zM88 963h1.2v1.2h-1.2zM988 712h1.5v1.5h-1.5zM1464 876h1.2v1.2h-1.2zM491 735h2v2h-2zM1090 717h1.5v1.5h-1.5zM648 930h1.2v1.2h-1.2zM989 874h1.5v1.5h-1.5zM1379 594h1.5v1.5h-1.5zM1798 641h1.5v1.5h-1.5zM1401 763h2v2h-2zM365 881h1.2v1.2h-1.2zM201 953h1.5v1.5h-1.5zM834 782h2v2h-2zM2163 784h1.5v1.5h-1.5zM1409 673h1.2v1.2h-1.2zM1525 806h1.2v1.2h-1.2zM530 871h2v2h-2zM770 648h1.5v1.5h-1.5zM1718 740h1.5v1.5h-1.5zM1202 804h1.2v1.2h-1.2zM1901 642h2v2h-2zM1808 553h2v2h-2zM1406 896h1.5v1.5h-1.5zM2079 847h1.2v1.2h-1.2zM993 949h1.2v1.2h-1.2zM1171 893h1.2v1.2h-1.2zM1006 661h1.2v1.2h-1.2zM2070 577h1.2v1.2h-1.2zM322 999h1.5v1.5h-1.5zM1818 611h1.5v1.5h-1.5zM1945 700h1.2v1.2h-1.2zM1703 600h1.2v1.2h-1.2zM934 899h1.5v1.5h-1.5zM249 731h1.5v1.5h-1.5zM522 824h2v2h-2zM1514 737h1.2v1.2h-1.2zM841 824h1.5v1.5h-1.5zM1435 757h1.2v1.2h-1.2zM26 967h1.2v1.2h-1.2z" fill="#000"/><path d="M660 603h2v2h-2zM755 613h2v2h-2zM2221 476h2v2h-2zM560 656h2v2h-2zM632 632h2v2h-2zM1637 516h2v2h-2zM68 683h2v2h-2zM2082 522h2v2h-2zM1062 563h2v2h-2zM1197 553h2v2h-2zM739 586h2v2h-2zM1170 576h2v2h-2zM649 601h2v2h-2zM156 631h2v2h-2zM293 683h2v2h-2zM81 678h2v2h-2zM1037 595h2v2h-2zM695 652h2v2h-2zM1831 521h2v2h-2zM981 625h2v2h-2zM359 669h2v2h-2zM1405 565h2v2h-2zM1211 582h2v2h-2zM211 637h2v2h-2zM805 589h2v2h-2zM200 669h2v2h-2zM958 612h2v2h-2zM892 634h2v2h-2zM558 626h2v2h-2zM962 616h2v2h-2zM302 649h2v2h-2zM1031 598h2v2h-2zM532 631h2v2h-2zM2232 473h2v2h-2zM2202 534h2v2h-2zM1019 566h2v2h-2zM1128 617h2v2h-2zM8 687h2v2h-2zM1768 509h2v2h-2zM1369 542h2v2h-2zM231 652h2v2h-2zM680 628h2v2h-2zM1197 559h2v2h-2zM2085 481h2v2h-2zM1818 514h2v2h-2zM2038 519h2v2h-2zM1043 570h2v2h-2zM1942 546h2v2h-2zM2177 507h2v2h-2zM2096 537h2v2h-2zM1512 541h2v2h-2zM1370 552h2v2h-2zM1845 530h2v2h-2zM1965 547h2v2h-2zM1711 518h2v2h-2zM763 586h2v2h-2zM763 589h2v2h-2zM684 638h2v2h-2zM276 679h2v2h-2zM2089 527h2v2h-2zM544 613h2v2h-2zM1040 597h2v2h-2zM2098 480h2v2h-2zM201 677h2v2h-2zM57 694h2v2h-2zM427 673h2v2h-2zM1070 593h2v2h-2zM1871 548h2v2h-2zM943 593h2v2h-2zM1788 515h2v2h-2zM694 643h2v2h-2zM1999 539h2v2h-2zM783 598h2v2h-2zM242 675h2v2h-2zM116 640h2v2h-2zM60 661h2v2h-2zM2256 470h2v2h-2zM576 609h2v2h-2zM1591 536h2v2h-2zM399 652h2v2h-2zM2041 491h2v2h-2zM149 651h2v2h-2zM2118 480h2v2h-2zM318 655h2v2h-2zM1727 532h2v2h-2zM108 664h2v2h-2zM231 627h2v2h-2zM134 692h2v2h-2zM238 649h2v2h-2zM1862 506h2v2h-2zM887 622h2v2h-2zM1282 551h2v2h-2zM1219 613h2v2h-2zM1856 561h2v2h-2zM59 639h2v2h-2zM1142 554h2v2h-2zM2181 487h2v2h-2zM1248 601h2v2h-2zM968 614h2v2h-2zM355 638h2v2h-2zM1648 539h2v2h-2zM425 663h2v2h-2zM815 637h2v2h-2zM717 638h2v2h-2zM286 659h2v2h-2zM2157 511h2v2h-2zM942 633h2v2h-2zM2190 523h2v2h-2zM509 606h2v2h-2zM1391 539h2v2h-2zM143 662h2v2h-2zM2140 489h2v2h-2zM1862 560h2v2h-2zM2134 480h2v2h-2zM309 680h2v2h-2zM2187 480h2v2h-2zM415 652h2v2h-2zM225 628h2v2h-2zM368 646h2v2h-2zM845 629h2v2h-2zM351 672h2v2h-2zM1785 522h2v2h-2zM1373 575h2v2h-2zM282 680h2v2h-2zM1001 592h2v2h-2zM1932 493h2v2h-2zM610 596h2v2h-2zM1671 522h2v2h-2zM1628 559h2v2h-2zM2256 475h2v2h-2zM942 617h2v2h-2zM1010 571h2v2h-2zM1531 572h2v2h-2zM1017 582h2v2h-2zM305 639h2v2h-2zM1905 512h2v2h-2zM2162 492h2v2h-2zM1082 606h2v2h-2zM2067 535h2v2h-2zM960 591h2v2h-2zM299 648h2v2h-2zM1857 506h2v2h-2zM719 588h2v2h-2zM1032 588h2v2h-2zM2243 508h2v2h-2zM2081 489h2v2h-2zM995 606h2v2h-2zM173 660h2v2h-2zM1420 533h2v2h-2zM465 654h2v2h-2zM372 650h2v2h-2zM958 587h2v2h-2zM1985 508h2v2h-2zM1994 539h2v2h-2zM1259 548h2v2h-2zM760 645h2v2h-2zM602 629h2v2h-2zM460 650h2v2h-2zM1560 578h2v2h-2zM1348 542h2v2h-2zM1805 534h2v2h-2zM2138 505h2v2h-2zM739 608h2v2h-2zM1275 585h2v2h-2zM1435 585h2v2h-2zM1217 556h2v2h-2zM1947 534h2v2h-2zM363 638h2v2h-2zM1929 525h2v2h-2zM282 675h2v2h-2zM1658 522h2v2h-2zM1575 574h2v2h-2zM1307 602h2v2h-2zM1222 548h2v2h-2zM1496 578h2v2h-2zM2077 527h2v2h-2zM2135 526h2v2h-2zM1077 561h2v2h-2zM385 614h2v2h-2zM2098 529h2v2h-2zM2054 530h2v2h-2zM1031 594h2v2h-2zM64 643h2v2h-2zM910 573h2v2h-2zM727 614h2v2h-2zM371 620h2v2h-2zM199 650h2v2h-2zM1898 518h2v2h-2zM1598 561h2v2h-2zM1823 550h2v2h-2zM1137 555h2v2h-2zM387 625h2v2h-2zM768 616h2v2h-2zM1131 568h2v2h-2zM385 657h2v2h-2zM2256 509h2v2h-2zM324 658h2v2h-2zM1813 531h2v2h-2zM1439 585h2v2h-2zM1088 600h2v2h-2zM388 664h2v2h-2zM1296 550h2v2h-2zM1418 583h2v2h-2zM1013 578h2v2h-2zM1612 582h2v2h-2zM2178 488h2v2h-2zM1104 575h2v2h-2zM327 647h2v2h-2zM656 617h2v2h-2zM1879 527h2v2h-2zM2243 477h2v2h-2zM424 611h2v2h-2zM1601 531h2v2h-2zM501 640h2v2h-2zM2240 514h2v2h-2zM2169 534h2v2h-2zM1197 559h2v2h-2zM1734 517h2v2h-2zM163 648h2v2h-2zM1676 549h2v2h-2zM934 574h2v2h-2zM395 645h2v2h-2zM1123 585h2v2h-2zM1684 544h2v2h-2zM1968 549h2v2h-2zM1179 568h2v2h-2zM1145 564h2v2h-2zM402 654h2v2h-2zM1004 565h2v2h-2zM894 588h2v2h-2zM143 632h2v2h-2zM1393 584h2v2h-2zM1902 529h2v2h-2zM516 639h2v2h-2zM615 604h2v2h-2zM749 589h2v2h-2zM258 686h2v2h-2zM197 690h2v2h-2zM1569 565h2v2h-2zM257 662h2v2h-2zM458 634h2v2h-2zM1031 620h2v2h-2zM233 624h2v2h-2zM1326 568h2v2h-2zM1471 531h2v2h-2zM844 619h2v2h-2zM1344 553h2v2h-2zM25 641h2v2h-2zM2022 498h2v2h-2zM167 642h2v2h-2zM483 634h2v2h-2zM117 663h2v2h-2zM1468 558h2v2h-2zM1355 548h2v2h-2zM890 618h2v2h-2zM651 643h2v2h-2zM435 634h2v2h-2zM2034 523h2v2h-2zM629 611h2v2h-2zM643 638h2v2h-2zM831 630h2v2h-2zM1578 572h2v2h-2zM1205 562h2v2h-2zM1560 544h2v2h-2zM121 656h2v2h-2zM427 611h2v2h-2zM606 657h2v2h-2zM1518 547h2v2h-2zM1323 559h2v2h-2zM1279 555h2v2h-2zM1938 541h2v2h-2zM1010 595h2v2h-2zM848 623h2v2h-2zM1894 555h2v2h-2zM248 681h2v2h-2zM500 607h2v2h-2zM940 607h2v2h-2zM266 658h2v2h-2zM2192 520h2v2h-2zM1876 503h2v2h-2zM767 593h2v2h-2zM842 633h2v2h-2zM2258 479h2v2h-2zM1276 578h2v2h-2zM2202 495h2v2h-2zM272 624h2v2h-2zM335 641h2v2h-2zM214 666h2v2h-2zM443 609h2v2h-2zM1633 540h2v2h-2zM1714 542h2v2h-2zM869 577h2v2h-2zM1935 532h2v2h-2zM597 599h2v2h-2zM1429 591h2v2h-2zM1685 571h2v2h-2zM2251 472h2v2h-2zM422 634h2v2h-2zM258 648h2v2h-2zM1850 510h2v2h-2zM1854 510h2v2h-2zM1850 501h2v2h-2zM275 622h2v2h-2zM1316 541h2v2h-2zM1575 541h2v2h-2zM2051 502h2v2h-2zM1891 541h2v2h-2zM852 624h2v2h-2zM1361 570h2v2h-2zM970 573h2v2h-2zM1187 578h2v2h-2zM983 630h2v2h-2zM393 670h2v2h-2zM1268 547h2v2h-2zM1278 551h2v2h-2zM1126 580h2v2h-2zM1752 565h2v2h-2zM168 684h2v2h-2zM2125 483h2v2h-2zM190 652h2v2h-2zM78 641h2v2h-2zM1160 561h2v2h-2zM1363 545h2v2h-2zM1512 561h2v2h-2zM177 668h2v2h-2zM2091 545h2v2h-2zM101 675h2v2h-2zM727 607h2v2h-2zM1045 563h2v2h-2zM1428 536h2v2h-2zM1940 495h2v2h-2zM1413 563h2v2h-2zM79 640h2v2h-2zM1127 574h2v2h-2zM356 618h2v2h-2zM529 651h2v2h-2zM315 663h2v2h-2zM264 672h2v2h-2zM1748 562h2v2h-2zM888 637h2v2h-2zM942 605h2v2h-2zM1879 502h2v2h-2zM109 674h2v2h-2zM519 611h2v2h-2zM1122 562h2v2h-2zM617 603h2v2h-2zM212 676h2v2h-2zM1913 538h2v2h-2zM1000 624h2v2h-2zM1233 577h2v2h-2zM54 655h2v2h-2zM496 642h2v2h-2zM2183 509h2v2h-2zM728 637h2v2h-2zM187 677h2v2h-2zM103 697h2v2h-2zM1712 574h2v2h-2zM1096 595h2v2h-2zM909 617h2v2h-2zM1221 571h2v2h-2zM1822 562h2v2h-2zM635 604h2v2h-2zM2253 484h2v2h-2zM837 607h2v2h-2zM661 615h2v2h-2zM627 616h2v2h-2zM1810 548h2v2h-2zM2107 539h2v2h-2zM610 642h2v2h-2zM1571 556h2v2h-2zM1109 615h2v2h-2zM1280 603h2v2h-2zM244 641h2v2h-2zM307 661h2v2h-2zM1043 576h2v2h-2zM768 608h2v2h-2zM699 614h2v2h-2zM1413 533h2v2h-2zM503 632h2v2h-2zM1503 559h2v2h-2zM1662 536h2v2h-2zM2068 529h2v2h-2zM1147 585h2v2h-2zM1825 514h2v2h-2zM644 619h2v2h-2zM1149 555h2v2h-2zM1143 612h2v2h-2zM1961 520h2v2h-2zM1589 537h2v2h-2zM168 680h2v2h-2zM1225 582h2v2h-2zM1391 598h2v2h-2zM689 620h2v2h-2zM1666 553h2v2h-2zM2064 484h2v2h-2zM1806 503h2v2h-2zM724 603h2v2h-2zM1816 558h2v2h-2zM1259 575h2v2h-2zM1509 526h2v2h-2zM846 600h2v2h-2zM116 647h2v2h-2zM638 597h2v2h-2zM433 627h2v2h-2zM1501 579h2v2h-2zM727 634h2v2h-2zM1616 521h2v2h-2zM458 662h2v2h-2zM324 653h2v2h-2zM1326 589h2v2h-2zM1761 556h2v2h-2zM314 661h2v2h-2zM2032 523h2v2h-2zM2171 477h2v2h-2zM1059 623h2v2h-2zM690 605h2v2h-2zM672 608h2v2h-2zM981 593h2v2h-2zM587 623h2v2h-2zM2107 496h2v2h-2zM570 657h2v2h-2zM1610 566h2v2h-2zM2076 546h2v2h-2zM693 589h2v2h-2zM1674 551h2v2h-2zM884 631h2v2h-2zM1821 533h2v2h-2zM1391 556h2v2h-2zM420 623h2v2h-2zM1651 541h2v2h-2zM1185 588h2v2h-2zM2123 482h2v2h-2zM217 672h2v2h-2zM496 635h2v2h-2zM1152 592h2v2h-2zM1450 550h2v2h-2zM1372 596h2v2h-2zM1905 518h2v2h-2zM1658 527h2v2h-2zM2095 480h2v2h-2zM1288 589h2v2h-2zM2068 512h2v2h-2zM1163 586h2v2h-2zM1717 527h2v2h-2zM1445 541h2v2h-2zM185 630h2v2h-2zM410 631h2v2h-2zM304 666h2v2h-2zM1556 541h2v2h-2zM411 631h2v2h-2zM1977 541h2v2h-2zM1566 540h2v2h-2zM1893 523h2v2h-2zM775 639h2v2h-2zM1522 526h2v2h-2zM161 654h2v2h-2zM1759 528h2v2h-2zM1205 554h2v2h-2zM1373 556h2v2h-2zM822 587h2v2h-2zM1343 590h2v2h-2zM1210 583h2v2h-2zM1264 586h2v2h-2zM1581 520h2v2h-2zM2189 499h2v2h-2zM118 676h2v2h-2zM1724 527h2v2h-2zM1362 538h2v2h-2zM1673 552h2v2h-2zM1829 526h2v2h-2zM2085 502h2v2h-2zM17 644h2v2h-2zM737 595h2v2h-2zM527 604h2v2h-2zM1473 584h2v2h-2zM2106 496h2v2h-2zM1134 583h2v2h-2zM1365 580h2v2h-2zM982 567h2v2h-2zM721 587h2v2h-2zM1548 585h2v2h-2zM1300 582h2v2h-2zM1292 605h2v2h-2zM384 644h2v2h-2zM758 607h2v2h-2zM497 651h2v2h-2zM759 595h2v2h-2zM1941 492h2v2h-2zM428 668h2v2h-2zM1512 533h2v2h-2zM306 658h2v2h-2zM1888 561h2v2h-2zM2135 522h2v2h-2zM196 675h2v2h-2zM995 594h2v2h-2zM59 638h2v2h-2zM1176 588h2v2h-2zM618 657h2v2h-2zM160 685h2v2h-2zM2112 482h2v2h-2zM1879 532h2v2h-2zM988 588h2v2h-2zM1243 605h2v2h-2zM1719 534h2v2h-2zM1043 568h2v2h-2zM1242 600h2v2h-2zM1439 564h2v2h-2zM1027 627h2v2h-2zM1930 521h2v2h-2zM1502 575h2v2h-2zM586 633h2v2h-2zM651 638h2v2h-2zM696 651h2v2h-2zM1571 549h2v2h-2zM1291 575h2v2h-2zM610 595h2v2h-2zM1029 576h2v2h-2zM1070 568h2v2h-2zM473 669h2v2h-2zM860 621h2v2h-2zM322 620h2v2h-2zM1568 543h2v2h-2zM1815 502h2v2h-2zM1127 589h2v2h-2zM507 645h2v2h-2zM449 611h2v2h-2zM358 616h2v2h-2zM919 619h2v2h-2zM399 624h2v2h-2zM764 592h2v2h-2zM1972 541h2v2h-2zM277 659h2v2h-2zM2055 483h2v2h-2zM915 572h2v2h-2zM721 591h2v2h-2zM1041 570h2v2h-2zM1665 532h2v2h-2zM194 657h2v2h-2zM1044 606h2v2h-2zM1689 522h2v2h-2zM874 617h2v2h-2zM2194 503h2v2h-2zM1385 551h2v2h-2zM989 580h2v2h-2zM1127 568h2v2h-2zM734 586h2v2h-2zM204 681h2v2h-2zM789 643h2v2h-2zM561 616h2v2h-2zM2025 508h2v2h-2zM1537 570h2v2h-2zM881 582h2v2h-2zM28 694h2v2h-2zM1302 589h2v2h-2zM2225 525h2v2h-2zM1344 542h2v2h-2zM1309 566h2v2h-2zM235 624h2v2h-2zM787 599h2v2h-2zM1985 553h2v2h-2zM2088 496h2v2h-2zM1934 511h2v2h-2zM829 610h2v2h-2zM100 674h2v2h-2zM145 664h2v2h-2zM1694 513h2v2h-2zM1468 556h2v2h-2zM794 628h2v2h-2zM719 594h2v2h-2zM939 587h2v2h-2zM1860 507h2v2h-2zM904 620h2v2h-2zM1052 577h2v2h-2zM338 633h2v2h-2zM1205 596h2v2h-2zM2261 496h2v2h-2zM1132 600h2v2h-2zM1058 571h2v2h-2zM1583 571h2v2h-2zM506 657h2v2h-2zM143 639h2v2h-2zM858 633h2v2h-2zM1094 574h2v2h-2zM556 624h2v2h-2zM1271 577h2v2h-2zM2024 490h2v2h-2zM1624 579h2v2h-2zM1379 577h2v2h-2zM1826 557h2v2h-2zM726 609h2v2h-2zM1907 501h2v2h-2zM1019 626h2v2h-2zM906 594h2v2h-2zM965 593h2v2h-2zM1743 511h2v2h-2zM1047 583h2v2h-2zM2176 527h2v2h-2zM671 605h2v2h-2zM2246 469h2v2h-2zM1584 520h2v2h-2zM666 628h2v2h-2zM1534 560h2v2h-2zM512 623h2v2h-2zM1937 505h2v2h-2zM1219 579h2v2h-2zM1945 541h2v2h-2zM1791 520h2v2h-2zM1670 570h2v2h-2zM176 672h2v2h-2zM1052 580h2v2h-2zM1458 579h2v2h-2zM2050 532h2v2h-2zM2113 533h2v2h-2zM1160 593h2v2h-2zM2071 515h2v2h-2zM165 649h2v2h-2zM1548 523h2v2h-2zM257 675h2v2h-2zM1553 522h2v2h-2zM1770 540h2v2h-2zM867 612h2v2h-2zM217 630h2v2h-2zM1558 561h2v2h-2zM1402 556h2v2h-2zM450 612h2v2h-2zM2120 491h2v2h-2zM947 596h2v2h-2zM13 656h2v2h-2zM454 611h2v2h-2zM2107 486h2v2h-2zM670 602h2v2h-2zM1782 559h2v2h-2zM1446 566h2v2h-2zM1363 537h2v2h-2zM1508 587h2v2h-2zM1997 546h2v2h-2zM293 662h2v2h-2zM2249 479h2v2h-2zM660 655h2v2h-2zM553 605h2v2h-2zM1540 538h2v2h-2zM1412 544h2v2h-2zM524 634h2v2h-2zM989 604h2v2h-2zM1262 555h2v2h-2zM470 608h2v2h-2zM182 670h2v2h-2zM754 584h2v2h-2zM75 690h2v2h-2zM1422 541h2v2h-2zM1790 560h2v2h-2zM130 639h2v2h-2zM1532 571h2v2h-2zM607 621h2v2h-2zM763 602h2v2h-2zM1895 528h2v2h-2zM1436 589h2v2h-2zM2075 521h2v2h-2zM84 654h2v2h-2zM2199 497h2v2h-2zM76 675h2v2h-2zM1259 588h2v2h-2zM1262 557h2v2h-2zM854 581h2v2h-2zM951 596h2v2h-2zM304 620h2v2h-2zM1435 568h2v2h-2zM1753 531h2v2h-2zM203 655h2v2h-2zM675 648h2v2h-2zM496 653h2v2h-2zM1461 543h2v2h-2zM1354 539h2v2h-2zM620 636h2v2h-2zM97 665h2v2h-2zM2050 546h2v2h-2zM1747 558h2v2h-2zM720 604h2v2h-2zM596 598h2v2h-2zM196 629h2v2h-2zM499 619h2v2h-2zM859 601h2v2h-2zM1894 513h2v2h-2zM1065 609h2v2h-2zM1020 606h2v2h-2zM2197 529h2v2h-2zM635 645h2v2h-2zM2098 490h2v2h-2zM336 660h2v2h-2zM1505 534h2v2h-2zM2224 494h2v2h-2zM2222 497h2v2h-2zM1634 521h2v2h-2zM1835 523h2v2h-2zM502 625h2v2h-2zM1497 582h2v2h-2zM1728 567h2v2h-2zM1725 527h2v2h-2zM396 669h2v2h-2zM990 627h2v2h-2z" fill="#000" fill-opacity="0.32"/><path d="M0 335.8 L2271 171.3" stroke="#ffff00" stroke-width="2.6" fill="none"/><path d="M0.1 378.6 C4.4 378.6 16.0 379.5 26.3 378.6 C36.5 377.7 48.1 374.0 61.5 373.1 C74.9 372.1 95.4 374.0 106.8 373.1 C118.1 372.1 120.6 368.4 129.4 367.5 C138.2 366.7 152.5 368.5 159.6 368.0 C166.7 367.5 165.0 365.0 172.2 364.5 C179.3 364.0 192.3 365.3 202.4 365.0 C212.4 364.7 224.2 363.7 232.5 362.5 C240.9 361.2 244.3 357.8 252.7 357.5 C261.1 357.1 273.6 361.0 282.9 360.5 C292.1 360.0 298.8 355.5 308.0 354.4 C317.2 353.3 329.0 354.5 338.2 353.9 C347.4 353.3 354.1 351.1 363.4 350.9 C372.6 350.7 384.3 353.9 393.5 352.9 C402.8 351.9 411.2 346.0 418.7 344.9 C426.3 343.8 431.7 346.6 438.8 346.4 C446.0 346.1 453.5 343.5 461.5 343.4 C469.4 343.2 478.7 346.1 486.6 345.4 C494.6 344.6 497.9 339.9 509.3 338.8 C520.6 337.7 544.5 339.1 554.6 338.8 C564.6 338.6 564.6 338.3 569.6 337.3 C574.7 336.3 578.0 333.3 584.7 332.8 C591.5 332.3 603.2 334.6 609.9 334.3 C616.6 334.0 618.3 331.3 625.0 330.8 C631.7 330.3 635.1 332.3 650.2 331.3 C665.2 330.3 702.1 326.6 715.6 324.8 C729.0 322.9 725.6 321.0 730.7 320.2 C735.7 319.5 740.7 319.2 745.7 320.2 C750.8 321.2 754.1 326.7 760.8 326.3 C767.6 325.8 777.6 319.1 786.0 317.7 C794.4 316.3 802.8 318.4 811.2 317.7 C819.5 317.0 827.9 314.1 836.3 313.7 C844.7 313.3 845.5 316.4 861.5 315.2 C877.4 314.0 916.0 307.8 931.9 306.6 C947.8 305.5 950.4 308.3 957.1 308.1 C963.8 308.0 965.5 306.1 972.2 305.6 C978.9 305.1 990.6 305.8 997.3 305.1 C1004.0 304.5 1004.9 302.3 1012.4 301.6 C1020.0 300.9 1034.2 301.8 1042.6 301.1 C1051.0 300.4 1048.5 298.6 1062.7 297.6 C1077.0 296.6 1112.2 296.6 1128.1 295.1 C1144.1 293.6 1148.7 289.3 1158.3 288.5 C1168.0 287.8 1186.4 290.5 1186.0 290.5 C1185.6 290.6 1154.4 289.0 1156.2 289.0 C1157.9 289.0 1184.7 291.5 1196.4 290.5 C1208.2 289.6 1213.2 285.0 1226.6 283.5 C1240.0 282.0 1266.0 281.6 1276.9 281.5 C1287.8 281.4 1285.3 283.4 1292.0 283.0 C1298.7 282.6 1307.1 280.2 1317.2 279.0 C1327.3 277.7 1342.4 275.7 1352.4 275.4 C1362.5 275.2 1368.3 278.1 1377.6 277.5 C1386.8 276.8 1400.2 272.2 1407.8 271.4 C1415.3 270.7 1416.1 273.8 1422.9 272.9 C1429.6 272.1 1440.5 267.0 1448.0 266.4 C1455.6 265.8 1450.5 270.1 1468.1 269.4 C1485.7 268.7 1534.4 264.5 1553.7 262.4 C1573.0 260.3 1575.5 257.3 1583.9 256.8 C1592.2 256.3 1591.4 260.0 1604.0 259.3 C1616.6 258.7 1647.6 253.4 1659.3 252.8 C1671.1 252.2 1667.7 256.5 1674.4 255.8 C1681.1 255.1 1690.4 249.8 1699.6 248.8 C1708.8 247.8 1719.7 250.2 1729.8 249.8 C1739.8 249.4 1752.4 246.7 1760.0 246.3 C1767.5 245.8 1768.3 248.1 1775.1 247.3 C1781.8 246.4 1791.8 242.0 1800.2 241.2 C1808.6 240.5 1818.7 243.2 1825.4 242.7 C1832.1 242.2 1832.9 238.8 1840.5 238.2 C1848.0 237.6 1860.6 239.2 1870.7 239.2 C1880.7 239.2 1891.6 239.0 1900.8 238.2 C1910.1 237.4 1915.9 235.1 1926.0 234.2 C1936.1 233.3 1950.3 233.4 1961.2 232.7 C1972.1 231.9 1980.5 230.7 1991.4 229.7 C2002.3 228.6 2019.1 226.3 2026.6 226.1 C2034.2 226.0 2030.8 229.2 2036.7 228.7 C2042.6 228.1 2055.1 223.6 2061.8 223.1 C2068.6 222.6 2070.2 226.1 2076.9 225.6 C2083.7 225.2 2094.6 221.3 2102.1 220.6 C2109.6 219.9 2108.8 221.9 2122.2 221.6 C2135.6 221.3 2168.3 220.0 2182.6 218.6 C2196.9 217.2 2200.2 213.5 2207.8 213.1 C2215.3 212.6 2219.5 216.7 2227.9 216.1 C2236.3 215.5 2250.9 210.0 2258.1 209.5 C2265.3 209.1 2269.0 212.9 2271.2 213.6" stroke="#fff" stroke-width="1.8" fill="none" stroke-linejoin="round"/><circle cx="274.8" cy="315.7" r="3" fill="#e00000"/><circle cx="571.7" cy="837.4" r="3.6" fill="#f00000" stroke="#400" stroke-width="1"/><rect x="2167" y="31.5" width="80" height="410" fill="none" stroke="#fff" stroke-width="1.4"/></svg>
<svg style="left:2002px;top:1346px" width="17" height="1"><rect x="0" y="0" width="1" height="1" fill="#b5b5b5"/><rect x="3" y="0" width="1" height="1" fill="#b5b5b5"/><rect x="6" y="0" width="1" height="1" fill="#b5b5b5"/><rect x="9" y="0" width="1" height="1" fill="#b5b5b5"/><rect x="12" y="0" width="1" height="1" fill="#b5b5b5"/><rect x="15" y="0" width="1" height="1" fill="#b5b5b5"/></svg>
<div class="r" style="left:871px;top:1354px;width:2277.5px;height:284.8px;background:#f0f0f0;border:3.4px solid #ababab;border-top:none;"></div>
<div class="r" style="left:871px;top:1641.8px;width:2277px;height:1px;background:#d2d2d2;"></div>
<div class="r" style="left:871px;top:1354px;width:2277.5px;height:31px;background:#ababab;"></div>
<div class="t" style="left:1913.50px;top:1360.72px;font-size:21px;line-height:21px;letter-spacing:-0.548px;">Time Series Plots</div>
<svg style="left:3115px;top:1364.5px" width="28" height="11" viewBox="0 0 28 11">
<path d="M3 3.5 V1 H9 V7 H6.5" fill="none" stroke="#1a1a1a" stroke-width="1.2"/>
<rect x="0.6" y="3.8" width="5.6" height="5.6" fill="none" stroke="#1a1a1a" stroke-width="1.2"/>
<path d="M3 1.4 H9" stroke="#1a1a1a" stroke-width="1.8"/>
<path d="M18.5 0.8 L27 9.6 M27 0.8 L18.5 9.6" stroke="#1a1a1a" stroke-width="1.2" fill="none"/>
</svg>
<div class="r" style="left:877.5px;top:1393px;width:149px;height:37.5px;background:linear-gradient(#fdfdfd,#f2f2f2);border:1px solid #bcbcbc;border-radius:3px;"></div>
<div class="t" style="left:882.50px;top:1402.22px;font-size:21px;line-height:21px;letter-spacing:-0.302px;">X-Position</div>
<svg style="left:1011px;top:1410px" width="9" height="5"><path d="M0 0 H9 L4.5 5 Z" fill="#222"/></svg>
<div class="r" style="left:1028.5px;top:1393px;width:149px;height:37.5px;background:linear-gradient(#f8f8f8,#f0f0f0);border:1px solid #d4d4d4;border-radius:3px;"></div>
<div class="t" style="left:1033.50px;top:1402.22px;font-size:21px;line-height:21px;letter-spacing:-1.702px;color:#a0a0a0;">POSMV_1</div>
<svg style="left:1162px;top:1410px" width="9" height="5"><path d="M0 0 H9 L4.5 5 Z" fill="#b0b0b0"/></svg>
<svg style="left:1193px;top:1404px" width="16" height="16" viewBox="0 0 16 16"><path d="M1 1 H12.5 L15 3.5 V15 H1 Z" fill="none" stroke="#b9b9b9" stroke-width="1.3"/><rect x="4" y="1.5" width="7" height="5" fill="#b9b9b9"/><rect x="8" y="2.3" width="2" height="3.2" fill="#f0f0f0"/></svg>
<div class="r" style="left:1222.5px;top:1401px;width:1px;height:22px;background:#dcdcdc;"></div>
<svg style="left:1236px;top:1403px" width="18" height="17" viewBox="0 0 18 17"><path d="M1 9 L9 1.5 L17 9 M3.5 7.5 V16 H14.5 V7.5 M7.5 16 V10.5 H10.5 V16" fill="none" stroke="#222" stroke-width="1.6"/><path d="M12.5 2 H14.5 V5.5" fill="none" stroke="#222" stroke-width="1.4"/></svg>
<div class="r" style="left:1261.5px;top:1398.5px;width:27px;height:27px;background:#dcdcdc;border:1px solid #b4b4b4;border-radius:3px;"></div>
<svg style="left:1269px;top:1403px" width="13" height="18" viewBox="0 0 13 18"><path d="M1 0.5 L1 13.5 L4.4 10.6 L7 16.6 L9.4 15.5 L6.8 9.7 L11.2 9.5 Z" fill="#111"/></svg>
<svg style="left:1297px;top:1403px" width="18" height="18" viewBox="0 0 18 18"><circle cx="6.8" cy="6.8" r="5" fill="none" stroke="#222" stroke-width="1.8"/><path d="M10.4 10.4 L16.4 16.4" stroke="#222" stroke-width="2.6"/></svg>
<div class="r" style="left:1327.5px;top:1401px;width:1px;height:22px;background:#dcdcdc;"></div>
<svg style="left:1337.5px;top:1401px" width="22" height="22" viewBox="0 0 22 22"><rect x="2" y="5" width="18" height="15.5" fill="none" stroke="#222" stroke-width="1.6" stroke-dasharray="3.2 2"/><rect x="0" y="0" width="9" height="9" fill="#f0f0f0"/><path d="M1 4.5 H8 M4.5 1 V8" stroke="#222" stroke-width="1.5"/><path d="M11.5 8.5 V17" stroke="#222" stroke-width="1.6"/></svg>
<svg style="left:1367.5px;top:1401px" width="22" height="22" viewBox="0 0 22 22"><rect x="2" y="5" width="18" height="15.5" fill="none" stroke="#222" stroke-width="1.6" stroke-dasharray="3.2 2"/><rect x="0" y="0" width="9" height="9" fill="#f0f0f0"/><path d="M1 4.5 H8 M4.5 1 V8" stroke="#222" stroke-width="1.5"/><path d="M7.5 9 L15.5 17.5 M15.5 9 L7.5 17.5" stroke="#222" stroke-width="1.6"/></svg>
<svg style="left:1398px;top:1401px" width="22" height="22" viewBox="0 0 22 22"><rect x="2" y="5" width="18" height="15.5" fill="none" stroke="#222" stroke-width="1.6" stroke-dasharray="3.2 2"/><rect x="0" y="0" width="9" height="9" fill="#f0f0f0"/><path d="M1 4.5 H8 M4.5 1 V8" stroke="#222" stroke-width="1.5"/><path d="M6.5 12.5 L10 16.5 L16.5 8.5" fill="none" stroke="#222" stroke-width="1.6"/></svg>
<div class="r" style="left:1431.5px;top:1401px;width:1px;height:22px;background:#dcdcdc;"></div>
<svg style="left:1443.5px;top:1403px" width="19" height="18" viewBox="0 0 19 18">
<path d="M3.2 6.2 A7 7 0 1 1 8.5 16.6" fill="none" stroke="#b9b9b9" stroke-width="1.5"/>
<path d="M0.6 2.4 L6.4 3.4 L2 8.2 Z" fill="#b9b9b9"/></svg>
<svg style="left:3114px;top:1407px" width="13" height="10" viewBox="0 0 13 10">
<rect x="0.5" y="0.5" width="8" height="6" fill="#f0f0f0" stroke="#555" stroke-width="1"/>
<path d="M2 2.5 H7 M2 4.5 H7" stroke="#555" stroke-width="0.8"/>
<path d="M3.5 5.5 H12.5 L8 10 Z" fill="#111"/></svg>
<div class="r" style="left:877px;top:1436px;width:2265px;height:176px;background:#fff;border:1px solid #c6c6c6;"></div>
<svg style="left:877px;top:1436px" width="2265" height="176" viewBox="877 1436 2265 176"><path d="M1067.7 1444.6 V1561.5M1168.3 1444.6 V1561.5M1269.0 1444.6 V1561.5M1369.6 1444.6 V1561.5M1470.2 1444.6 V1561.5M1570.9 1444.6 V1561.5M1671.6 1444.6 V1561.5M1772.2 1444.6 V1561.5M1872.8 1444.6 V1561.5M1973.5 1444.6 V1561.5M2074.2 1444.6 V1561.5M2174.8 1444.6 V1561.5M2275.4 1444.6 V1561.5M2376.1 1444.6 V1561.5M2476.8 1444.6 V1561.5M2577.4 1444.6 V1561.5M2678.1 1444.6 V1561.5M2778.7 1444.6 V1561.5M2879.4 1444.6 V1561.5M2980.0 1444.6 V1561.5M3080.7 1444.6 V1561.5M967.0 1475.8 H3112.4M967.0 1514.5 H3112.4M967.0 1553.2 H3112.4" stroke="#f0f0f0" stroke-width="1" fill="none"/><rect x="967.0" y="1444.6" width="2145.4" height="116.9" fill="none" stroke="#b4b4b4" stroke-width="1.6"/><path d="M966.7 1554.0 L1023.0 1553.6 L1030.0 1552.2 L1051.0 1551.7 L1167.5 1553.0 L1256.0 1554.0 L1268.0 1555.5 L1368.0 1554.2 L1570.0 1552.2 L1579.7 1551.3 L1591.4 1552.7 L1833.6 1555.0 L1843.0 1556.9 L1872.0 1556.4 L2000.0 1555.0 L2046.6 1554.0 L2058.0 1555.0 L2214.0 1556.4 L2237.6 1560.6 L2308.4 1560.0 L2340.0 1559.7 L2368.0 1561.0 L2493.8 1559.7 L2503.0 1561.0 L2512.4 1561.0 L3043.5 1454.8 L3071.4 1452.0 L3112.4 1444.6" fill="none" stroke="#2f6fd0" stroke-width="1.5" stroke-linejoin="round"/><path d="M2308.8 1444.6 V1561.5" stroke="#ff9090" stroke-width="1"/><rect x="2306.8" y="1558.5" width="4" height="4" fill="#e00000"/></svg>
<div class="t" style="left:961.99px;top:1582.56px;font-size:18px;line-height:18px;color:#5e5e5e;">0</div>
<div class="t" style="left:1045.33px;top:1582.56px;font-size:18px;line-height:18px;color:#5e5e5e;">1000</div>
<div class="t" style="left:1145.98px;top:1582.56px;font-size:18px;line-height:18px;color:#5e5e5e;">2000</div>
<div class="t" style="left:1246.63px;top:1582.56px;font-size:18px;line-height:18px;color:#5e5e5e;">3000</div>
<div class="t" style="left:1347.28px;top:1582.56px;font-size:18px;line-height:18px;color:#5e5e5e;">4000</div>
<div class="t" style="left:1447.93px;top:1582.56px;font-size:18px;line-height:18px;color:#5e5e5e;">5000</div>
<div class="t" style="left:1548.58px;top:1582.56px;font-size:18px;line-height:18px;color:#5e5e5e;">6000</div>
<div class="t" style="left:1649.23px;top:1582.56px;font-size:18px;line-height:18px;color:#5e5e5e;">7000</div>
<div class="t" style="left:1749.88px;top:1582.56px;font-size:18px;line-height:18px;color:#5e5e5e;">8000</div>
<div class="t" style="left:1850.53px;top:1582.56px;font-size:18px;line-height:18px;color:#5e5e5e;">9000</div>
<div class="t" style="left:1946.17px;top:1582.56px;font-size:18px;line-height:18px;color:#5e5e5e;">10000</div>
<div class="t" style="left:2047.49px;top:1582.56px;font-size:18px;line-height:18px;color:#5e5e5e;">11000</div>
<div class="t" style="left:2147.47px;top:1582.56px;font-size:18px;line-height:18px;color:#5e5e5e;">12000</div>
<div class="t" style="left:2248.12px;top:1582.56px;font-size:18px;line-height:18px;color:#5e5e5e;">13000</div>
<div class="t" style="left:2348.77px;top:1582.56px;font-size:18px;line-height:18px;color:#5e5e5e;">14000</div>
<div class="t" style="left:2449.42px;top:1582.56px;font-size:18px;line-height:18px;color:#5e5e5e;">15000</div>
<div class="t" style="left:2550.07px;top:1582.56px;font-size:18px;line-height:18px;color:#5e5e5e;">16000</div>
<div class="t" style="left:2650.72px;top:1582.56px;font-size:18px;line-height:18px;color:#5e5e5e;">17000</div>
<div class="t" style="left:2751.37px;top:1582.56px;font-size:18px;line-height:18px;color:#5e5e5e;">18000</div>
<div class="t" style="left:2852.02px;top:1582.56px;font-size:18px;line-height:18px;color:#5e5e5e;">19000</div>
<div class="t" style="left:2952.67px;top:1582.56px;font-size:18px;line-height:18px;color:#5e5e5e;">20000</div>
<div class="t" style="left:3053.32px;top:1582.56px;font-size:18px;line-height:18px;color:#5e5e5e;">21000</div>
<div class="t" style="left:891.70px;top:1473.36px;font-size:18px;line-height:18px;letter-spacing:0.007px;color:#5e5e5e;">340000</div>
<div class="t" style="left:891.70px;top:1510.96px;font-size:18px;line-height:18px;letter-spacing:0.007px;color:#5e5e5e;">330000</div>
<div class="t" style="left:891.70px;top:1549.76px;font-size:18px;line-height:18px;letter-spacing:0.007px;color:#5e5e5e;">320000</div>
<div class="t" style="left:864.0px;top:1497.5px;width:85.3px;font-size:18px;line-height:18px;letter-spacing:0.362px;color:#5e5e5e;transform:rotate(-90deg);transform-origin:50% 50%;">X-Position</div>
<div class="t" style="left:876.80px;top:1617.57px;font-size:11.5px;line-height:11.5px;letter-spacing:-0.150px;color:#1c7fa8;">2012-06-28 03:46:49.170, X-Position 318048.156</div>
<div class="r" style="left:871px;top:1640.6px;width:135px;height:48.6px;background:linear-gradient(#dcdcdc,#e2e2e2);border:1px solid #cfcfcf;border-top:1px solid #c4c4c4;border-radius:0 0 3px 3px;"></div>
<div class="r" style="left:1212px;top:1640.6px;width:180.5px;height:48.6px;background:linear-gradient(#dcdcdc,#e2e2e2);border:1px solid #cfcfcf;border-top:1px solid #c4c4c4;border-radius:0 0 3px 3px;"></div>
<div class="r" style="left:1392.5px;top:1640.6px;width:107.0px;height:48.6px;background:linear-gradient(#dcdcdc,#e2e2e2);border:1px solid #cfcfcf;border-top:1px solid #c4c4c4;border-radius:0 0 3px 3px;"></div>
<div class="r" style="left:1499.5px;top:1640.6px;width:188.5px;height:48.6px;background:linear-gradient(#dcdcdc,#e2e2e2);border:1px solid #cfcfcf;border-top:1px solid #c4c4c4;border-radius:0 0 3px 3px;"></div>
<div class="r" style="left:1006px;top:1638.8px;width:205.5px;height:52.6px;background:linear-gradient(#f3f3f3,#fdfdfd);border:1px solid #bdbdbd;border-top:none;border-radius:0 0 4px 4px;"></div>
<div class="t" style="left:895.00px;top:1655.72px;font-size:21px;line-height:21px;letter-spacing:-0.333px;">File Table</div>
<div class="t" style="left:1030.50px;top:1656.72px;font-size:21px;line-height:21px;letter-spacing:-0.548px;">Time Series Plots</div>
<div class="t" style="left:1234.00px;top:1655.72px;font-size:21px;line-height:21px;letter-spacing:0.007px;">Water Column</div>
<div class="t" style="left:1416.00px;top:1655.72px;font-size:21px;line-height:21px;letter-spacing:-0.171px;">Profile</div>
<div class="t" style="left:1523.50px;top:1655.72px;font-size:21px;line-height:21px;letter-spacing:-0.467px;">Process History</div>
<div class="t" style="left:2810.50px;top:1702.22px;font-size:21px;line-height:21px;letter-spacing:-0.390px;">Tiles Loading:</div>
<div class="t" style="left:2977.50px;top:1702.22px;font-size:21px;line-height:21px;">0</div>
<svg style="left:3006px;top:1704.5px" width="80" height="12"><rect x="0.50" y="0.5" width="5.6" height="11" rx="1.6" fill="#f4f4f4" stroke="#b4b4b4" stroke-width="1"/><rect x="7.65" y="0.5" width="5.6" height="11" rx="1.6" fill="#f4f4f4" stroke="#b4b4b4" stroke-width="1"/><rect x="14.80" y="0.5" width="5.6" height="11" rx="1.6" fill="#f4f4f4" stroke="#b4b4b4" stroke-width="1"/><rect x="21.95" y="0.5" width="5.6" height="11" rx="1.6" fill="#f4f4f4" stroke="#b4b4b4" stroke-width="1"/><rect x="29.10" y="0.5" width="5.6" height="11" rx="1.6" fill="#f4f4f4" stroke="#b4b4b4" stroke-width="1"/><rect x="36.25" y="0.5" width="5.6" height="11" rx="1.6" fill="#f4f4f4" stroke="#b4b4b4" stroke-width="1"/><rect x="43.40" y="0.5" width="5.6" height="11" rx="1.6" fill="#f4f4f4" stroke="#b4b4b4" stroke-width="1"/><rect x="50.55" y="0.5" width="5.6" height="11" rx="1.6" fill="#f4f4f4" stroke="#b4b4b4" stroke-width="1"/><rect x="57.70" y="0.5" width="5.6" height="11" rx="1.6" fill="#f4f4f4" stroke="#b4b4b4" stroke-width="1"/><rect x="64.85" y="0.5" width="5.6" height="11" rx="1.6" fill="#f4f4f4" stroke="#b4b4b4" stroke-width="1"/><rect x="72.00" y="0.5" width="5.6" height="11" rx="1.6" fill="#f4f4f4" stroke="#b4b4b4" stroke-width="1"/></svg>
<div class="t" style="left:3091.50px;top:1702.22px;font-size:21px;line-height:21px;letter-spacing:-0.670px;">504.8 MB</div>
<svg style="left:3182px;top:1703px" width="18" height="18" viewBox="0 0 18 18"><rect x="1" y="2" width="13" height="14" fill="#f4f4f4" stroke="#c8c8c8"/><path d="M2 5.5 H13 M2 8.5 H13 M2 11.5 H13" stroke="#d4d4d4" stroke-width="1"/><path d="M3 9 L7 14.5 L17.5 1.5" fill="none" stroke="#1f8a33" stroke-width="3"/></svg>
<div class="r" style="left:3148px;top:131px;width:52px;height:1561px;background:linear-gradient(to right,#ededed,#f6f6f6);border-left:1px solid #d6d6d6;"></div>
<svg style="left:3166px;top:145px" width="17" height="4"><rect x="0" y="0" width="1" height="1" fill="#b5b5b5"/><rect x="0" y="3" width="1" height="1" fill="#b5b5b5"/><rect x="3" y="0" width="1" height="1" fill="#b5b5b5"/><rect x="3" y="3" width="1" height="1" fill="#b5b5b5"/><rect x="6" y="0" width="1" height="1" fill="#b5b5b5"/><rect x="6" y="3" width="1" height="1" fill="#b5b5b5"/><rect x="9" y="0" width="1" height="1" fill="#b5b5b5"/><rect x="9" y="3" width="1" height="1" fill="#b5b5b5"/><rect x="12" y="0" width="1" height="1" fill="#b5b5b5"/><rect x="12" y="3" width="1" height="1" fill="#b5b5b5"/><rect x="15" y="0" width="1" height="1" fill="#b5b5b5"/><rect x="15" y="3" width="1" height="1" fill="#b5b5b5"/></svg>
<svg style="left:3159.8px;top:160.0px" width="28" height="28" viewBox="0 0 28 28"><path d="M6 6 H22 V22 H6 Z M6 11.3 H22 M6 16.6 H22 M11.3 6 V22 M16.6 6 V22" fill="none" stroke="#222" stroke-width="1.4"/></svg>
<div class="r" style="left:3156px;top:194.5px;width:35.5px;height:34.0px;background:#dddddd;border:1px solid #c4c4c4;border-radius:3px;"></div>
<svg style="left:3159.8px;top:197.4px" width="28" height="28" viewBox="0 0 28 28"><path d="M14 8 L27 14 L14 20 L1 14 Z M7.5 11 L20.5 17 M20.5 11 L7.5 17 M4.2 12.5 L17.2 18.5 M10.7 9.5 L23.7 15.5 M23.7 12.5 L10.7 18.5 M17.2 9.5 L4.2 15.5" fill="none" stroke="#222" stroke-width="1.2"/></svg>
<div class="r" style="left:3162px;top:237.5px;width:24px;height:1px;background:#d4d4d4;"></div>
<svg style="left:3159.8px;top:247.7px" width="28" height="28" viewBox="0 0 28 28"><path d="M1.5 1.5 L7 7 M26.5 1.5 L21 7 M1.5 26.5 L7 21 M26.5 26.5 L21 21" stroke="#222" stroke-width="1.5"/><path d="M7.6 3.6 V7.6 H3.6 Z M20.4 3.6 V7.6 H24.4 Z M7.6 24.4 V20.4 H3.6 Z M20.4 24.4 V20.4 H24.4 Z" fill="#222"/><path d="M6 9 L14 6 L22 9 V18 L14 22.5 L6 18 Z M14 6 V15 M6 18 L14 15 L22 18 M6 12 L14 9 L22 12 M6 15 L14 12 L22 15 M8.7 8 V17 M11.3 7 V16 M16.7 7 V16 M19.3 8 V17" fill="none" stroke="#222" stroke-width="1"/></svg>
<svg style="left:3159.8px;top:285.0px" width="28" height="28" viewBox="0 0 28 28"><path d="M1.5 1.5 L7 7 M26.5 1.5 L21 7 M1.5 26.5 L7 21 M26.5 26.5 L21 21" stroke="#222" stroke-width="1.5"/><path d="M7.6 3.6 V7.6 H3.6 Z M20.4 3.6 V7.6 H24.4 Z M7.6 24.4 V20.4 H3.6 Z M20.4 24.4 V20.4 H24.4 Z" fill="#222"/><path d="M14 6.5 L21 10 V18 L14 22 L7 18 V10 Z M7 10 L14 13.5 L21 10 M14 13.5 V22" fill="none" stroke="#222" stroke-width="1.5"/></svg>
<div class="r" style="left:3162px;top:325px;width:24px;height:1px;background:#d4d4d4;"></div>
<div class="r" style="left:3156px;top:333.5px;width:35.5px;height:34.0px;background:#dddddd;border:1px solid #c4c4c4;border-radius:3px;"></div>
<svg style="left:3159.8px;top:336.5px" width="28" height="28" viewBox="0 0 28 28"><path d="M8.5 4 L8.5 21 L12.8 17.2 L16.2 25 L19.2 23.6 L15.8 16 L21.6 15.8 Z" fill="#111"/></svg>
<svg style="left:3159.8px;top:372.8px" width="28" height="28" viewBox="0 0 28 28"><path d="M5 9 V3 H23 V9 M5 18 V25 H23 V18" fill="none" stroke="#222" stroke-width="1.5"/><circle cx="5" cy="13.5" r="1.8" fill="#222"/><circle cx="23" cy="13.5" r="1.8" fill="#222"/><path d="M10.5 6 L10.5 18 L13.5 15.4 L15.8 20.6 L18 19.6 L15.7 14.5 L19.6 14.3 Z" fill="#111"/></svg>
<div class="r" style="left:3162px;top:413px;width:24px;height:1px;background:#d4d4d4;"></div>
<svg style="left:3159.8px;top:423.4px" width="28" height="28" viewBox="0 0 28 28"><rect x="4" y="4" width="20" height="20" fill="none" stroke="#222" stroke-width="1.6" stroke-dasharray="2 2.5"/><g fill="#f6f6f6" stroke="#222" stroke-width="1.3"><circle cx="4" cy="4" r="2"/><circle cx="24" cy="4" r="2"/><circle cx="4" cy="24" r="2"/><circle cx="24" cy="24" r="2"/></g><circle cx="14" cy="14" r="2.2" fill="#222"/></svg>
<svg style="left:3159.8px;top:461.0px" width="28" height="28" viewBox="0 0 28 28"><path d="M3.5 4 H24.5 L15 13.5 L24.5 24 H3.5 Z" fill="none" stroke="#222" stroke-width="1.8" stroke-dasharray="2.2 2.2"/></svg>
<svg style="left:3159.8px;top:498.0px" width="28" height="28" viewBox="0 0 28 28"><path d="M8 4 C12 1 15 6 19 8 C25 10 25 18 20 22 C16 25 11 24 9 20 C7 16 9 14 6.5 11 C4.5 8.5 5.5 5.5 8 4 Z" fill="none" stroke="#222" stroke-width="1.8" stroke-dasharray="2.2 2.2"/></svg>
<div class="r" style="left:3162px;top:538.3px;width:24px;height:1px;background:#d4d4d4;"></div>
<svg style="left:3159.8px;top:548.8px" width="28" height="28" viewBox="0 0 28 28"><path d="M3.5 2 V24.5 H26" fill="none" stroke="#222" stroke-width="1.6"/><path d="M6 22.5 V15 L11 10.5 L15 15 L19 11 L21.5 13.5 L24.5 8.5 V22.5 Z" fill="#222"/></svg>
<svg style="left:3159.8px;top:585.6px" width="28" height="28" viewBox="0 0 28 28"><g transform="rotate(-35 14 14)"><rect x="1.5" y="9.5" width="25" height="9" fill="none" stroke="#222" stroke-width="1.5"/><path d="M5 18 V14.5 M8.5 18 V15.5 M12 18 V14.5 M15.5 18 V15.5 M19 18 V14.5 M22.5 18 V15.5" stroke="#222" stroke-width="1"/></g></svg>
<div class="r" style="left:3162px;top:626px;width:24px;height:1px;background:#d4d4d4;"></div>
<div class="r" style="left:3156px;top:634.5px;width:35.5px;height:34.0px;background:#dddddd;border:1px solid #c4c4c4;border-radius:3px;"></div>
<svg style="left:3161.5px;top:645px" width="25" height="13" viewBox="0 0 25 13"><defs><linearGradient id="cb" x1="0" x2="1" y1="0" y2="0"><stop offset="0" stop-color="#e03020"/><stop offset="0.3" stop-color="#e0a020"/><stop offset="0.5" stop-color="#30b050"/><stop offset="0.75" stop-color="#2090c0"/><stop offset="1" stop-color="#2050c0"/></linearGradient></defs><rect x="1" y="1" width="23" height="11" fill="url(#cb)" stroke="#333" stroke-width="1.6"/></svg>
<svg style="left:3159.8px;top:673.7px" width="28" height="28" viewBox="0 0 28 28"><path d="M2.3 7.3 L14 2 L25.7 7.3 V20.4 L14 26 L2.3 20.4 Z M14 2 V15.2 M2.3 20.4 L14 15.2 L25.7 20.4 M2.3 11.7 L14 6.4 L25.7 11.7 M6.2 5.5 V18.7 M21.8 5.5 V18.7 M2.3 16.0 L14 10.8 L25.7 16.0 M10.1 3.8 V16.9 M17.9 3.8 V16.9" fill="none" stroke="#3a3a3a" stroke-width="1.15" stroke-linejoin="round"/></svg>
<svg style="left:3159.8px;top:710.5px" width="28" height="28" viewBox="0 0 28 28"><path d="M25 11.2 C24 7.5 16 6.6 12.5 7.2" fill="none" stroke="#222" stroke-width="1.6"/><path d="M10.6 7.5 L14.2 5 L14.2 10 Z" fill="#222" stroke="#222" stroke-width="0.8"/><path d="M2.6 13 C3 17.2 9 18.6 15 18.3" fill="none" stroke="#222" stroke-width="3.2"/><path d="M14.2 13.8 L19.2 18 L14.2 21.8 Z" fill="#222"/><path d="M20.6 19.2 C23.5 18.2 25.6 16 25.2 12.6" fill="none" stroke="#222" stroke-width="3.2"/><path d="M2.8 13 C3.2 10 6 8.6 9 8" fill="none" stroke="#222" stroke-width="1.6"/></svg>
<svg style="left:3159.8px;top:749.0px" width="28" height="28" viewBox="0 0 28 28"><path d="M14 4.7 L4.9 7.5M14 4.7 L23.2 7.5M4.9 7.5 L14.3 11.7M23.2 7.5 L14.3 11.7M4.9 7.5 L3.5 18.2M23.2 7.5 L24.4 18.2M14.3 11.7 L14 23.3M3.5 18.2 L14 23.3M24.4 18.2 L14 23.3" fill="none" stroke="#222" stroke-width="1.3"/><g fill="#222"><circle cx="14" cy="4.7" r="2.1"/><circle cx="4.9" cy="7.5" r="2.1"/><circle cx="23.2" cy="7.5" r="2.1"/><circle cx="14.3" cy="11.7" r="2.1"/><circle cx="3.5" cy="18.2" r="2.1"/><circle cx="24.4" cy="18.2" r="2.1"/><circle cx="14" cy="23.3" r="2.1"/></g></svg>
</body></html>
